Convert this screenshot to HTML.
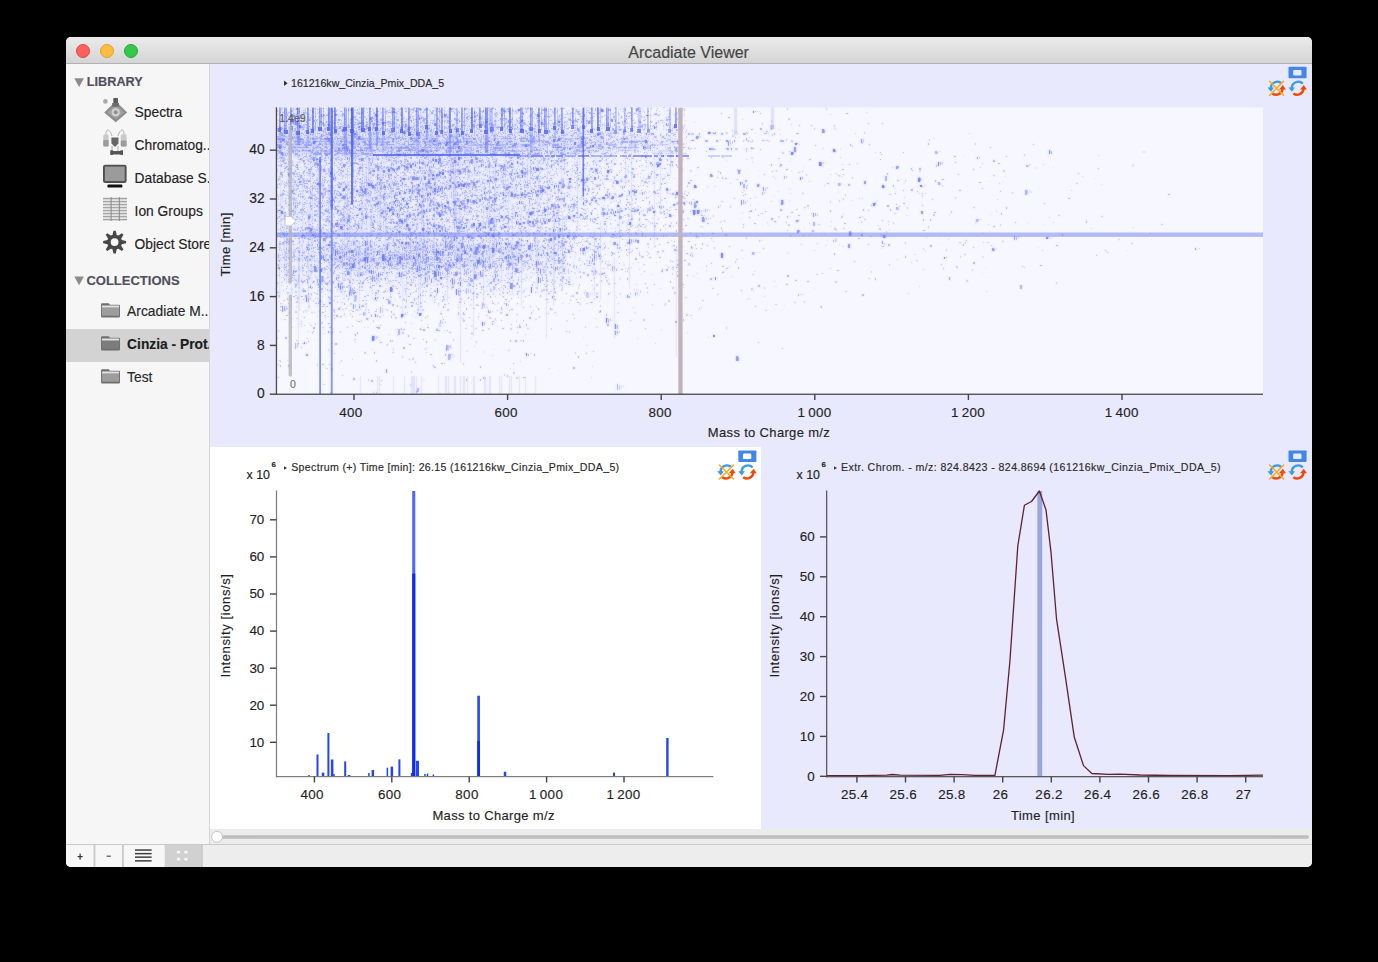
<!DOCTYPE html><html><head><meta charset="utf-8"><title>Arcadiate Viewer</title><style>
*{margin:0;padding:0;box-sizing:border-box}
html,body{width:1378px;height:962px;background:#000;overflow:hidden;font-family:"Liberation Sans",sans-serif;color:#222}
.a{position:absolute}
.t{position:absolute;line-height:1;white-space:nowrap;-webkit-text-stroke:0.15px currentColor}
svg{position:absolute;left:0;top:0;overflow:visible}
</style></head><body>
<div class="a" style="left:66px;top:37px;width:1246px;height:830px;background:#f6f6f6;border-radius:5px;overflow:hidden">
</div>
<div class="a" style="left:66px;top:37px;width:1246px;height:27px;background:linear-gradient(#ebebeb,#d4d4d4);border-radius:5px 5px 0 0;"></div>
<div class="a" style="left:66px;top:63px;width:1246px;height:1px;background:#b1b1b1;"></div>
<div class="a" style="left:75.7px;top:44px;width:14px;height:14px;border-radius:50%;background:#fc615d;border:0.5px solid #df4744"></div>
<div class="a" style="left:99.6px;top:44px;width:14px;height:14px;border-radius:50%;background:#fdbc40;border:0.5px solid #de9f34"></div>
<div class="a" style="left:123.5px;top:44px;width:14px;height:14px;border-radius:50%;background:#34c84a;border:0.5px solid #27a73a"></div>
<div class="a" style="left:66px;top:64px;width:143px;height:781px;background:#f6f6f6;"></div>
<div class="a" style="left:209px;top:64px;width:1px;height:781px;background:#d6d6d6;"></div>
<div class="a" style="left:210px;top:64px;width:1102px;height:383px;background:#e9e9fd;"></div>
<div class="a" style="left:210px;top:447px;width:551px;height:382px;background:#ffffff;"></div>
<div class="a" style="left:761px;top:447px;width:551px;height:382px;background:#e9e9fd;"></div>
<div class="a" style="left:210px;top:829px;width:1102px;height:16px;background:#ececec;"></div>
<div class="a" style="left:66px;top:844px;width:1246px;height:1px;background:#cacaca;"></div>
<div class="a" style="left:66px;top:845px;width:1246px;height:22px;background:#ededed;border-radius:0 0 5px 5px;"></div>
<div class="a" style="left:66px;top:845px;width:98px;height:22px;background:#f7f7f7;border-radius:0 0 0 5px;"></div>
<div class="a" style="left:164.5px;top:845px;width:37px;height:22px;background:#d1d1d1;"></div>
<div class="a" style="left:66px;top:329px;width:143px;height:33px;background:#d3d3d3;"></div>
<svg width="1378" height="962" viewBox="0 0 1378 962"><polygon points="74.3,78.3 83.9,78.3 79.1,87" fill="#8b8b8b"/><polygon points="74.3,276.5 83.9,276.5 79.1,285.2" fill="#8b8b8b"/><circle cx="105.4" cy="101.4" r="2.3" fill="#a9a9a9"/><polygon points="104.2,112.4 115.7,101.2 127.2,112.4 115.7,122.2" fill="#8d8d8d"/><polygon points="107.5,112.4 115.7,104.6 123.9,112.4 115.7,119" fill="#a3a3a3"/><circle cx="115.7" cy="112.2" r="4" fill="#d2d2d2"/><circle cx="115.7" cy="112.2" r="2" fill="#8f8f8f"/><rect x="113.3" y="98" width="4.6" height="8.5" fill="#5a5a5a"/><rect x="112.2" y="103" width="6.8" height="3.5" fill="#6e6e6e"/><path d="M106,134 C106,128 110,129 112,136 M124,134 C124,128 120,129 118,136 M112,146 L112,151 M118,146 L118,151" stroke="#9a9a9a" stroke-width="0.8" fill="none"/><rect x="103.3" y="134.3" width="5.3" height="12.3" rx="1.5" fill="#c9c9c9"/><rect x="103.3" y="140" width="5.3" height="6.6" rx="1" fill="#9c9c9c"/><rect x="120.8" y="134.3" width="5.8" height="12.3" rx="1.5" fill="#c9c9c9"/><rect x="120.8" y="140.5" width="5.8" height="6.1" rx="1" fill="#9c9c9c"/><polygon points="111.4,137.5 118.5,137.5 118.5,143.5 115,147 111.4,143.5" fill="#666"/><rect x="110.4" y="151" width="12.6" height="3.4" rx="1" fill="#555"/><rect x="110.4" y="150.2" width="2.5" height="4.8" fill="#555"/><rect x="120.5" y="150.2" width="2.5" height="4.8" fill="#555"/><rect x="103" y="164.7" width="23.6" height="18.2" rx="2.2" fill="#505050"/><rect x="104.9" y="166.6" width="19.8" height="14.4" fill="#9b9b9b"/><rect x="107.4" y="184.6" width="15" height="3" rx="1.2" fill="#111"/><rect x="103" y="197" width="24" height="24" fill="#e4e4e4"/><rect x="103" y="198" width="24" height="1.2" fill="#a5a5a5"/><rect x="103" y="201" width="24" height="1.2" fill="#a5a5a5"/><rect x="103" y="204" width="24" height="1.2" fill="#a5a5a5"/><rect x="103" y="207" width="24" height="1.2" fill="#a5a5a5"/><rect x="103" y="210" width="24" height="1.2" fill="#a5a5a5"/><rect x="103" y="213" width="24" height="1.2" fill="#a5a5a5"/><rect x="103" y="216" width="24" height="1.2" fill="#a5a5a5"/><rect x="103" y="219" width="24" height="1.2" fill="#a5a5a5"/><rect x="110.6" y="197" width="1" height="24" fill="#888"/><rect x="118.8" y="197" width="1" height="24" fill="#888"/><polygon points="111.93,235.63 112.44,235.13 113.45,230.66 115.75,230.66 116.76,235.13 117.27,235.63 117.28,235.63 118.01,235.64 121.88,233.20 123.50,234.82 121.06,238.69 121.07,239.42 121.07,239.43 121.57,239.94 126.04,240.95 126.04,243.25 121.57,244.26 121.07,244.77 121.07,244.78 121.06,245.51 123.50,249.38 121.88,251.00 118.01,248.56 117.28,248.57 117.27,248.57 116.76,249.07 115.75,253.54 113.45,253.54 112.44,249.07 111.93,248.57 111.92,248.57 111.19,248.56 107.32,251.00 105.70,249.38 108.14,245.51 108.13,244.78 108.13,244.77 107.63,244.26 103.16,243.25 103.16,240.95 107.63,239.94 108.13,239.43 108.13,239.42 108.14,238.69 105.70,234.82 107.32,233.20 111.19,235.64 111.92,235.63" fill="#474747"/><circle cx="114.6" cy="242.1" r="7.4" fill="#474747"/><circle cx="114.6" cy="242.1" r="3.9" fill="#f6f6f6"/><polygon points="284,80.6 287.6,83.3 284,86" fill="#333"/><rect x="1288.5" y="66.7" width="18.1" height="11.5" rx="0.8" fill="#4287e6"/><rect x="1293.2" y="69.9" width="8.3" height="5.5" rx="1.2" fill="#e9e9fd"/><path d="M1281.8,83.7 A6.4,6.4 0 0 0 1270.8,88.3" stroke="#3d9ae8" stroke-width="2.4" fill="none"/><polygon points="1267.4,87.5 1274.0,87.5 1271.0,91.7" fill="#3d9ae8"/><path d="M1272.4,93.5 A6.4,6.4 0 0 0 1282.6,88.9" stroke="#ee4a0c" stroke-width="2.4" fill="none"/><polygon points="1279.0,89.5 1286.0,89.5 1282.8,85.1" fill="#ee4a0c"/><path d="M1269.6,81.3 L1283.6,95.3 M1283.6,81.3 L1269.6,95.3" stroke="#f9ad1c" stroke-width="1.6" stroke-linecap="round"/><path d="M1302.8,83.7 A6.4,6.4 0 0 0 1291.8,88.3" stroke="#3d9ae8" stroke-width="2.4" fill="none"/><polygon points="1288.4,87.5 1295.0,87.5 1292.0,91.7" fill="#3d9ae8"/><path d="M1293.4,93.5 A6.4,6.4 0 0 0 1303.6,88.9" stroke="#ee4a0c" stroke-width="2.4" fill="none"/><polygon points="1300.0,89.5 1307.0,89.5 1303.8,85.1" fill="#ee4a0c"/><rect x="277" y="107.5" width="986" height="286.5" fill="#f7f7ff"/><defs><filter id="hb" x="270" y="100" width="1000" height="300" filterUnits="userSpaceOnUse"><feGaussianBlur stdDeviation="2.5"/></filter><filter id="sb" x="270" y="100" width="1000" height="300" filterUnits="userSpaceOnUse"><feGaussianBlur stdDeviation="0.8"/></filter><clipPath id="pc"><rect x="277" y="107.5" width="986" height="286.5"/></clipPath></defs><g clip-path="url(#pc)"><g filter="url(#hb)" fill="#5567f2"><rect x="277" y="107" width="44" height="4" fill-opacity="0.050"/><rect x="321" y="107" width="36" height="4" fill-opacity="0.055"/><rect x="357" y="107" width="128" height="4" fill-opacity="0.050"/><rect x="485" y="107" width="60" height="4" fill-opacity="0.046"/><rect x="545" y="107" width="24" height="4" fill-opacity="0.041"/><rect x="569" y="107" width="24" height="4" fill-opacity="0.037"/><rect x="593" y="107" width="16" height="4" fill-opacity="0.032"/><rect x="609" y="107" width="8" height="4" fill-opacity="0.028"/><rect x="617" y="107" width="12" height="4" fill-opacity="0.023"/><rect x="629" y="107" width="12" height="4" fill-opacity="0.018"/><rect x="641" y="107" width="20" height="4" fill-opacity="0.014"/><rect x="661" y="107" width="20" height="4" fill-opacity="0.009"/><rect x="277" y="111" width="188" height="4" fill-opacity="0.055"/><rect x="465" y="111" width="64" height="4" fill-opacity="0.050"/><rect x="529" y="111" width="32" height="4" fill-opacity="0.046"/><rect x="561" y="111" width="24" height="4" fill-opacity="0.041"/><rect x="585" y="111" width="20" height="4" fill-opacity="0.037"/><rect x="605" y="111" width="8" height="4" fill-opacity="0.032"/><rect x="613" y="111" width="12" height="4" fill-opacity="0.028"/><rect x="625" y="111" width="12" height="4" fill-opacity="0.023"/><rect x="637" y="111" width="16" height="4" fill-opacity="0.018"/><rect x="653" y="111" width="16" height="4" fill-opacity="0.014"/><rect x="669" y="111" width="12" height="4" fill-opacity="0.009"/><rect x="681" y="111" width="4" height="4" fill-opacity="0.005"/><rect x="277" y="115" width="8" height="4" fill-opacity="0.055"/><rect x="285" y="115" width="164" height="4" fill-opacity="0.060"/><rect x="449" y="115" width="60" height="4" fill-opacity="0.055"/><rect x="509" y="115" width="44" height="4" fill-opacity="0.050"/><rect x="553" y="115" width="24" height="4" fill-opacity="0.046"/><rect x="577" y="115" width="24" height="4" fill-opacity="0.041"/><rect x="601" y="115" width="8" height="4" fill-opacity="0.037"/><rect x="609" y="115" width="12" height="4" fill-opacity="0.032"/><rect x="621" y="115" width="12" height="4" fill-opacity="0.028"/><rect x="633" y="115" width="12" height="4" fill-opacity="0.023"/><rect x="645" y="115" width="16" height="4" fill-opacity="0.018"/><rect x="661" y="115" width="20" height="4" fill-opacity="0.014"/><rect x="681" y="115" width="4" height="4" fill-opacity="0.005"/><rect x="277" y="119" width="16" height="4" fill-opacity="0.060"/><rect x="293" y="119" width="120" height="4" fill-opacity="0.064"/><rect x="413" y="119" width="80" height="4" fill-opacity="0.060"/><rect x="493" y="119" width="52" height="4" fill-opacity="0.055"/><rect x="545" y="119" width="24" height="4" fill-opacity="0.050"/><rect x="569" y="119" width="24" height="4" fill-opacity="0.046"/><rect x="593" y="119" width="16" height="4" fill-opacity="0.041"/><rect x="609" y="119" width="8" height="4" fill-opacity="0.037"/><rect x="617" y="119" width="12" height="4" fill-opacity="0.032"/><rect x="629" y="119" width="12" height="4" fill-opacity="0.028"/><rect x="641" y="119" width="16" height="4" fill-opacity="0.023"/><rect x="657" y="119" width="16" height="4" fill-opacity="0.018"/><rect x="673" y="119" width="8" height="4" fill-opacity="0.014"/><rect x="681" y="119" width="4" height="4" fill-opacity="0.009"/><rect x="277" y="123" width="52" height="4" fill-opacity="0.073"/><rect x="329" y="123" width="4" height="4" fill-opacity="0.078"/><rect x="333" y="123" width="88" height="4" fill-opacity="0.073"/><rect x="421" y="123" width="60" height="4" fill-opacity="0.069"/><rect x="481" y="123" width="44" height="4" fill-opacity="0.064"/><rect x="525" y="123" width="28" height="4" fill-opacity="0.060"/><rect x="553" y="123" width="20" height="4" fill-opacity="0.055"/><rect x="573" y="123" width="24" height="4" fill-opacity="0.050"/><rect x="597" y="123" width="12" height="4" fill-opacity="0.046"/><rect x="609" y="123" width="8" height="4" fill-opacity="0.041"/><rect x="617" y="123" width="12" height="4" fill-opacity="0.037"/><rect x="629" y="123" width="12" height="4" fill-opacity="0.032"/><rect x="641" y="123" width="12" height="4" fill-opacity="0.028"/><rect x="653" y="123" width="16" height="4" fill-opacity="0.023"/><rect x="669" y="123" width="12" height="4" fill-opacity="0.018"/><rect x="681" y="123" width="4" height="4" fill-opacity="0.009"/><rect x="277" y="127" width="112" height="4" fill-opacity="0.087"/><rect x="389" y="127" width="60" height="4" fill-opacity="0.083"/><rect x="449" y="127" width="36" height="4" fill-opacity="0.078"/><rect x="485" y="127" width="32" height="4" fill-opacity="0.073"/><rect x="517" y="127" width="28" height="4" fill-opacity="0.069"/><rect x="545" y="127" width="20" height="4" fill-opacity="0.064"/><rect x="565" y="127" width="16" height="4" fill-opacity="0.060"/><rect x="581" y="127" width="20" height="4" fill-opacity="0.055"/><rect x="601" y="127" width="8" height="4" fill-opacity="0.050"/><rect x="609" y="127" width="12" height="4" fill-opacity="0.046"/><rect x="621" y="127" width="12" height="4" fill-opacity="0.041"/><rect x="633" y="127" width="8" height="4" fill-opacity="0.037"/><rect x="641" y="127" width="16" height="4" fill-opacity="0.032"/><rect x="657" y="127" width="12" height="4" fill-opacity="0.028"/><rect x="669" y="127" width="12" height="4" fill-opacity="0.023"/><rect x="681" y="127" width="4" height="4" fill-opacity="0.014"/><rect x="277" y="131" width="92" height="4" fill-opacity="0.101"/><rect x="369" y="131" width="48" height="4" fill-opacity="0.096"/><rect x="417" y="131" width="44" height="4" fill-opacity="0.092"/><rect x="461" y="131" width="28" height="4" fill-opacity="0.087"/><rect x="489" y="131" width="24" height="4" fill-opacity="0.083"/><rect x="513" y="131" width="28" height="4" fill-opacity="0.078"/><rect x="541" y="131" width="16" height="4" fill-opacity="0.073"/><rect x="557" y="131" width="16" height="4" fill-opacity="0.069"/><rect x="573" y="131" width="16" height="4" fill-opacity="0.064"/><rect x="589" y="131" width="12" height="4" fill-opacity="0.060"/><rect x="601" y="131" width="12" height="4" fill-opacity="0.055"/><rect x="613" y="131" width="12" height="4" fill-opacity="0.050"/><rect x="625" y="131" width="8" height="4" fill-opacity="0.046"/><rect x="633" y="131" width="12" height="4" fill-opacity="0.041"/><rect x="645" y="131" width="12" height="4" fill-opacity="0.037"/><rect x="657" y="131" width="12" height="4" fill-opacity="0.032"/><rect x="669" y="131" width="12" height="4" fill-opacity="0.028"/><rect x="681" y="131" width="4" height="4" fill-opacity="0.014"/><rect x="685" y="131" width="4" height="4" fill-opacity="0.005"/><rect x="277" y="135" width="80" height="4" fill-opacity="0.115"/><rect x="357" y="135" width="40" height="4" fill-opacity="0.110"/><rect x="397" y="135" width="40" height="4" fill-opacity="0.105"/><rect x="437" y="135" width="28" height="4" fill-opacity="0.101"/><rect x="465" y="135" width="24" height="4" fill-opacity="0.096"/><rect x="489" y="135" width="24" height="4" fill-opacity="0.092"/><rect x="513" y="135" width="24" height="4" fill-opacity="0.087"/><rect x="537" y="135" width="16" height="4" fill-opacity="0.083"/><rect x="553" y="135" width="12" height="4" fill-opacity="0.078"/><rect x="565" y="135" width="16" height="4" fill-opacity="0.073"/><rect x="581" y="135" width="12" height="4" fill-opacity="0.069"/><rect x="593" y="135" width="12" height="4" fill-opacity="0.064"/><rect x="605" y="135" width="12" height="4" fill-opacity="0.060"/><rect x="617" y="135" width="8" height="4" fill-opacity="0.055"/><rect x="625" y="135" width="12" height="4" fill-opacity="0.050"/><rect x="637" y="135" width="8" height="4" fill-opacity="0.046"/><rect x="645" y="135" width="12" height="4" fill-opacity="0.041"/><rect x="657" y="135" width="12" height="4" fill-opacity="0.037"/><rect x="669" y="135" width="12" height="4" fill-opacity="0.032"/><rect x="681" y="135" width="4" height="4" fill-opacity="0.018"/><rect x="685" y="135" width="4" height="4" fill-opacity="0.005"/><rect x="277" y="139" width="68" height="4" fill-opacity="0.119"/><rect x="345" y="139" width="36" height="4" fill-opacity="0.115"/><rect x="381" y="139" width="36" height="4" fill-opacity="0.110"/><rect x="417" y="139" width="32" height="4" fill-opacity="0.105"/><rect x="449" y="139" width="24" height="4" fill-opacity="0.101"/><rect x="473" y="139" width="20" height="4" fill-opacity="0.096"/><rect x="493" y="139" width="24" height="4" fill-opacity="0.092"/><rect x="517" y="139" width="20" height="4" fill-opacity="0.087"/><rect x="537" y="139" width="16" height="4" fill-opacity="0.083"/><rect x="553" y="139" width="12" height="4" fill-opacity="0.078"/><rect x="565" y="139" width="16" height="4" fill-opacity="0.073"/><rect x="581" y="139" width="12" height="4" fill-opacity="0.069"/><rect x="593" y="139" width="12" height="4" fill-opacity="0.064"/><rect x="605" y="139" width="12" height="4" fill-opacity="0.060"/><rect x="617" y="139" width="8" height="4" fill-opacity="0.055"/><rect x="625" y="139" width="12" height="4" fill-opacity="0.050"/><rect x="637" y="139" width="8" height="4" fill-opacity="0.046"/><rect x="645" y="139" width="12" height="4" fill-opacity="0.041"/><rect x="657" y="139" width="12" height="4" fill-opacity="0.037"/><rect x="669" y="139" width="12" height="4" fill-opacity="0.032"/><rect x="681" y="139" width="4" height="4" fill-opacity="0.018"/><rect x="685" y="139" width="4" height="4" fill-opacity="0.005"/><rect x="277" y="143" width="64" height="4" fill-opacity="0.119"/><rect x="341" y="143" width="36" height="4" fill-opacity="0.115"/><rect x="377" y="143" width="32" height="4" fill-opacity="0.110"/><rect x="409" y="143" width="32" height="4" fill-opacity="0.105"/><rect x="441" y="143" width="24" height="4" fill-opacity="0.101"/><rect x="465" y="143" width="20" height="4" fill-opacity="0.096"/><rect x="485" y="143" width="24" height="4" fill-opacity="0.092"/><rect x="509" y="143" width="20" height="4" fill-opacity="0.087"/><rect x="529" y="143" width="16" height="4" fill-opacity="0.083"/><rect x="545" y="143" width="16" height="4" fill-opacity="0.078"/><rect x="561" y="143" width="12" height="4" fill-opacity="0.073"/><rect x="573" y="143" width="16" height="4" fill-opacity="0.069"/><rect x="589" y="143" width="12" height="4" fill-opacity="0.064"/><rect x="601" y="143" width="12" height="4" fill-opacity="0.060"/><rect x="613" y="143" width="8" height="4" fill-opacity="0.055"/><rect x="621" y="143" width="12" height="4" fill-opacity="0.050"/><rect x="633" y="143" width="12" height="4" fill-opacity="0.046"/><rect x="645" y="143" width="12" height="4" fill-opacity="0.041"/><rect x="657" y="143" width="12" height="4" fill-opacity="0.037"/><rect x="669" y="143" width="12" height="4" fill-opacity="0.032"/><rect x="681" y="143" width="4" height="4" fill-opacity="0.018"/><rect x="685" y="143" width="4" height="4" fill-opacity="0.005"/><rect x="277" y="147" width="64" height="4" fill-opacity="0.119"/><rect x="341" y="147" width="32" height="4" fill-opacity="0.115"/><rect x="373" y="147" width="28" height="4" fill-opacity="0.110"/><rect x="401" y="147" width="32" height="4" fill-opacity="0.105"/><rect x="433" y="147" width="24" height="4" fill-opacity="0.101"/><rect x="457" y="147" width="24" height="4" fill-opacity="0.096"/><rect x="481" y="147" width="20" height="4" fill-opacity="0.092"/><rect x="501" y="147" width="20" height="4" fill-opacity="0.087"/><rect x="521" y="147" width="20" height="4" fill-opacity="0.083"/><rect x="541" y="147" width="12" height="4" fill-opacity="0.078"/><rect x="553" y="147" width="16" height="4" fill-opacity="0.073"/><rect x="569" y="147" width="12" height="4" fill-opacity="0.069"/><rect x="581" y="147" width="16" height="4" fill-opacity="0.064"/><rect x="597" y="147" width="12" height="4" fill-opacity="0.060"/><rect x="609" y="147" width="8" height="4" fill-opacity="0.055"/><rect x="617" y="147" width="12" height="4" fill-opacity="0.050"/><rect x="629" y="147" width="12" height="4" fill-opacity="0.046"/><rect x="641" y="147" width="12" height="4" fill-opacity="0.041"/><rect x="653" y="147" width="12" height="4" fill-opacity="0.037"/><rect x="665" y="147" width="12" height="4" fill-opacity="0.032"/><rect x="677" y="147" width="4" height="4" fill-opacity="0.028"/><rect x="681" y="147" width="4" height="4" fill-opacity="0.018"/><rect x="685" y="147" width="4" height="4" fill-opacity="0.005"/><rect x="277" y="151" width="48" height="4" fill-opacity="0.092"/><rect x="325" y="151" width="8" height="4" fill-opacity="0.096"/><rect x="333" y="151" width="52" height="4" fill-opacity="0.092"/><rect x="385" y="151" width="52" height="4" fill-opacity="0.087"/><rect x="437" y="151" width="32" height="4" fill-opacity="0.083"/><rect x="469" y="151" width="28" height="4" fill-opacity="0.078"/><rect x="497" y="151" width="24" height="4" fill-opacity="0.073"/><rect x="521" y="151" width="24" height="4" fill-opacity="0.069"/><rect x="545" y="151" width="12" height="4" fill-opacity="0.064"/><rect x="557" y="151" width="12" height="4" fill-opacity="0.060"/><rect x="569" y="151" width="12" height="4" fill-opacity="0.055"/><rect x="581" y="151" width="16" height="4" fill-opacity="0.050"/><rect x="597" y="151" width="12" height="4" fill-opacity="0.046"/><rect x="609" y="151" width="12" height="4" fill-opacity="0.041"/><rect x="621" y="151" width="8" height="4" fill-opacity="0.037"/><rect x="629" y="151" width="16" height="4" fill-opacity="0.032"/><rect x="645" y="151" width="16" height="4" fill-opacity="0.028"/><rect x="661" y="151" width="16" height="4" fill-opacity="0.023"/><rect x="677" y="151" width="4" height="4" fill-opacity="0.018"/><rect x="681" y="151" width="4" height="4" fill-opacity="0.009"/><rect x="277" y="155" width="20" height="4" fill-opacity="0.055"/><rect x="297" y="155" width="192" height="4" fill-opacity="0.060"/><rect x="489" y="155" width="40" height="4" fill-opacity="0.055"/><rect x="529" y="155" width="20" height="4" fill-opacity="0.050"/><rect x="549" y="155" width="12" height="4" fill-opacity="0.046"/><rect x="561" y="155" width="12" height="4" fill-opacity="0.041"/><rect x="573" y="155" width="12" height="4" fill-opacity="0.037"/><rect x="585" y="155" width="12" height="4" fill-opacity="0.032"/><rect x="597" y="155" width="12" height="4" fill-opacity="0.028"/><rect x="609" y="155" width="12" height="4" fill-opacity="0.023"/><rect x="621" y="155" width="16" height="4" fill-opacity="0.018"/><rect x="637" y="155" width="24" height="4" fill-opacity="0.014"/><rect x="661" y="155" width="20" height="4" fill-opacity="0.009"/><rect x="681" y="155" width="4" height="4" fill-opacity="0.005"/><rect x="277" y="159" width="28" height="4" fill-opacity="0.055"/><rect x="305" y="159" width="180" height="4" fill-opacity="0.060"/><rect x="485" y="159" width="36" height="4" fill-opacity="0.055"/><rect x="521" y="159" width="24" height="4" fill-opacity="0.050"/><rect x="545" y="159" width="12" height="4" fill-opacity="0.046"/><rect x="557" y="159" width="12" height="4" fill-opacity="0.041"/><rect x="569" y="159" width="12" height="4" fill-opacity="0.037"/><rect x="581" y="159" width="12" height="4" fill-opacity="0.032"/><rect x="593" y="159" width="12" height="4" fill-opacity="0.028"/><rect x="605" y="159" width="16" height="4" fill-opacity="0.023"/><rect x="621" y="159" width="12" height="4" fill-opacity="0.018"/><rect x="633" y="159" width="20" height="4" fill-opacity="0.014"/><rect x="653" y="159" width="28" height="4" fill-opacity="0.009"/><rect x="681" y="159" width="4" height="4" fill-opacity="0.005"/><rect x="277" y="163" width="8" height="4" fill-opacity="0.050"/><rect x="285" y="163" width="24" height="4" fill-opacity="0.055"/><rect x="309" y="163" width="172" height="4" fill-opacity="0.060"/><rect x="481" y="163" width="36" height="4" fill-opacity="0.055"/><rect x="517" y="163" width="28" height="4" fill-opacity="0.050"/><rect x="545" y="163" width="12" height="4" fill-opacity="0.046"/><rect x="557" y="163" width="12" height="4" fill-opacity="0.041"/><rect x="569" y="163" width="8" height="4" fill-opacity="0.037"/><rect x="577" y="163" width="12" height="4" fill-opacity="0.032"/><rect x="589" y="163" width="12" height="4" fill-opacity="0.028"/><rect x="601" y="163" width="16" height="4" fill-opacity="0.023"/><rect x="617" y="163" width="12" height="4" fill-opacity="0.018"/><rect x="629" y="163" width="16" height="4" fill-opacity="0.014"/><rect x="645" y="163" width="32" height="4" fill-opacity="0.009"/><rect x="677" y="163" width="4" height="4" fill-opacity="0.005"/><rect x="277" y="167" width="12" height="4" fill-opacity="0.050"/><rect x="289" y="167" width="24" height="4" fill-opacity="0.055"/><rect x="313" y="167" width="168" height="4" fill-opacity="0.060"/><rect x="481" y="167" width="32" height="4" fill-opacity="0.055"/><rect x="513" y="167" width="28" height="4" fill-opacity="0.050"/><rect x="541" y="167" width="12" height="4" fill-opacity="0.046"/><rect x="553" y="167" width="12" height="4" fill-opacity="0.041"/><rect x="565" y="167" width="12" height="4" fill-opacity="0.037"/><rect x="577" y="167" width="12" height="4" fill-opacity="0.032"/><rect x="589" y="167" width="8" height="4" fill-opacity="0.028"/><rect x="597" y="167" width="16" height="4" fill-opacity="0.023"/><rect x="613" y="167" width="12" height="4" fill-opacity="0.018"/><rect x="625" y="167" width="16" height="4" fill-opacity="0.014"/><rect x="641" y="167" width="32" height="4" fill-opacity="0.009"/><rect x="673" y="167" width="8" height="4" fill-opacity="0.005"/><rect x="277" y="171" width="20" height="4" fill-opacity="0.050"/><rect x="297" y="171" width="16" height="4" fill-opacity="0.055"/><rect x="313" y="171" width="164" height="4" fill-opacity="0.060"/><rect x="477" y="171" width="32" height="4" fill-opacity="0.055"/><rect x="509" y="171" width="28" height="4" fill-opacity="0.050"/><rect x="537" y="171" width="12" height="4" fill-opacity="0.046"/><rect x="549" y="171" width="12" height="4" fill-opacity="0.041"/><rect x="561" y="171" width="12" height="4" fill-opacity="0.037"/><rect x="573" y="171" width="12" height="4" fill-opacity="0.032"/><rect x="585" y="171" width="12" height="4" fill-opacity="0.028"/><rect x="597" y="171" width="12" height="4" fill-opacity="0.023"/><rect x="609" y="171" width="12" height="4" fill-opacity="0.018"/><rect x="621" y="171" width="16" height="4" fill-opacity="0.014"/><rect x="637" y="171" width="28" height="4" fill-opacity="0.009"/><rect x="665" y="171" width="16" height="4" fill-opacity="0.005"/><rect x="277" y="175" width="4" height="4" fill-opacity="0.046"/><rect x="281" y="175" width="16" height="4" fill-opacity="0.050"/><rect x="297" y="175" width="20" height="4" fill-opacity="0.055"/><rect x="317" y="175" width="156" height="4" fill-opacity="0.060"/><rect x="473" y="175" width="32" height="4" fill-opacity="0.055"/><rect x="505" y="175" width="28" height="4" fill-opacity="0.050"/><rect x="533" y="175" width="16" height="4" fill-opacity="0.046"/><rect x="549" y="175" width="12" height="4" fill-opacity="0.041"/><rect x="561" y="175" width="8" height="4" fill-opacity="0.037"/><rect x="569" y="175" width="12" height="4" fill-opacity="0.032"/><rect x="581" y="175" width="12" height="4" fill-opacity="0.028"/><rect x="593" y="175" width="12" height="4" fill-opacity="0.023"/><rect x="605" y="175" width="16" height="4" fill-opacity="0.018"/><rect x="621" y="175" width="12" height="4" fill-opacity="0.014"/><rect x="633" y="175" width="28" height="4" fill-opacity="0.009"/><rect x="661" y="175" width="20" height="4" fill-opacity="0.005"/><rect x="277" y="179" width="4" height="4" fill-opacity="0.046"/><rect x="281" y="179" width="20" height="4" fill-opacity="0.050"/><rect x="301" y="179" width="16" height="4" fill-opacity="0.055"/><rect x="317" y="179" width="152" height="4" fill-opacity="0.060"/><rect x="469" y="179" width="28" height="4" fill-opacity="0.055"/><rect x="497" y="179" width="32" height="4" fill-opacity="0.050"/><rect x="529" y="179" width="16" height="4" fill-opacity="0.046"/><rect x="545" y="179" width="12" height="4" fill-opacity="0.041"/><rect x="557" y="179" width="12" height="4" fill-opacity="0.037"/><rect x="569" y="179" width="12" height="4" fill-opacity="0.032"/><rect x="581" y="179" width="12" height="4" fill-opacity="0.028"/><rect x="593" y="179" width="12" height="4" fill-opacity="0.023"/><rect x="605" y="179" width="12" height="4" fill-opacity="0.018"/><rect x="617" y="179" width="16" height="4" fill-opacity="0.014"/><rect x="633" y="179" width="24" height="4" fill-opacity="0.009"/><rect x="657" y="179" width="24" height="4" fill-opacity="0.005"/><rect x="277" y="183" width="4" height="4" fill-opacity="0.046"/><rect x="281" y="183" width="20" height="4" fill-opacity="0.050"/><rect x="301" y="183" width="20" height="4" fill-opacity="0.055"/><rect x="321" y="183" width="144" height="4" fill-opacity="0.060"/><rect x="465" y="183" width="28" height="4" fill-opacity="0.055"/><rect x="493" y="183" width="32" height="4" fill-opacity="0.050"/><rect x="525" y="183" width="20" height="4" fill-opacity="0.046"/><rect x="545" y="183" width="12" height="4" fill-opacity="0.041"/><rect x="557" y="183" width="12" height="4" fill-opacity="0.037"/><rect x="569" y="183" width="8" height="4" fill-opacity="0.032"/><rect x="577" y="183" width="12" height="4" fill-opacity="0.028"/><rect x="589" y="183" width="12" height="4" fill-opacity="0.023"/><rect x="601" y="183" width="16" height="4" fill-opacity="0.018"/><rect x="617" y="183" width="16" height="4" fill-opacity="0.014"/><rect x="633" y="183" width="20" height="4" fill-opacity="0.009"/><rect x="653" y="183" width="28" height="4" fill-opacity="0.005"/><rect x="277" y="187" width="4" height="4" fill-opacity="0.046"/><rect x="281" y="187" width="20" height="4" fill-opacity="0.050"/><rect x="301" y="187" width="20" height="4" fill-opacity="0.055"/><rect x="321" y="187" width="140" height="4" fill-opacity="0.060"/><rect x="461" y="187" width="28" height="4" fill-opacity="0.055"/><rect x="489" y="187" width="28" height="4" fill-opacity="0.050"/><rect x="517" y="187" width="28" height="4" fill-opacity="0.046"/><rect x="545" y="187" width="8" height="4" fill-opacity="0.041"/><rect x="553" y="187" width="12" height="4" fill-opacity="0.037"/><rect x="565" y="187" width="12" height="4" fill-opacity="0.032"/><rect x="577" y="187" width="12" height="4" fill-opacity="0.028"/><rect x="589" y="187" width="12" height="4" fill-opacity="0.023"/><rect x="601" y="187" width="12" height="4" fill-opacity="0.018"/><rect x="613" y="187" width="16" height="4" fill-opacity="0.014"/><rect x="629" y="187" width="20" height="4" fill-opacity="0.009"/><rect x="649" y="187" width="32" height="4" fill-opacity="0.005"/><rect x="277" y="191" width="4" height="4" fill-opacity="0.046"/><rect x="281" y="191" width="24" height="4" fill-opacity="0.050"/><rect x="305" y="191" width="20" height="4" fill-opacity="0.055"/><rect x="325" y="191" width="132" height="4" fill-opacity="0.060"/><rect x="457" y="191" width="28" height="4" fill-opacity="0.055"/><rect x="485" y="191" width="28" height="4" fill-opacity="0.050"/><rect x="513" y="191" width="28" height="4" fill-opacity="0.046"/><rect x="541" y="191" width="12" height="4" fill-opacity="0.041"/><rect x="553" y="191" width="12" height="4" fill-opacity="0.037"/><rect x="565" y="191" width="12" height="4" fill-opacity="0.032"/><rect x="577" y="191" width="8" height="4" fill-opacity="0.028"/><rect x="585" y="191" width="12" height="4" fill-opacity="0.023"/><rect x="597" y="191" width="16" height="4" fill-opacity="0.018"/><rect x="613" y="191" width="16" height="4" fill-opacity="0.014"/><rect x="629" y="191" width="20" height="4" fill-opacity="0.009"/><rect x="649" y="191" width="32" height="4" fill-opacity="0.005"/><rect x="277" y="195" width="4" height="4" fill-opacity="0.046"/><rect x="281" y="195" width="24" height="4" fill-opacity="0.050"/><rect x="305" y="195" width="24" height="4" fill-opacity="0.055"/><rect x="329" y="195" width="124" height="4" fill-opacity="0.060"/><rect x="453" y="195" width="28" height="4" fill-opacity="0.055"/><rect x="481" y="195" width="28" height="4" fill-opacity="0.050"/><rect x="509" y="195" width="32" height="4" fill-opacity="0.046"/><rect x="541" y="195" width="8" height="4" fill-opacity="0.041"/><rect x="549" y="195" width="12" height="4" fill-opacity="0.037"/><rect x="561" y="195" width="12" height="4" fill-opacity="0.032"/><rect x="573" y="195" width="12" height="4" fill-opacity="0.028"/><rect x="585" y="195" width="12" height="4" fill-opacity="0.023"/><rect x="597" y="195" width="12" height="4" fill-opacity="0.018"/><rect x="609" y="195" width="16" height="4" fill-opacity="0.014"/><rect x="625" y="195" width="20" height="4" fill-opacity="0.009"/><rect x="645" y="195" width="32" height="4" fill-opacity="0.005"/><rect x="277" y="199" width="4" height="4" fill-opacity="0.046"/><rect x="281" y="199" width="24" height="4" fill-opacity="0.050"/><rect x="305" y="199" width="172" height="4" fill-opacity="0.055"/><rect x="477" y="199" width="28" height="4" fill-opacity="0.050"/><rect x="505" y="199" width="28" height="4" fill-opacity="0.046"/><rect x="533" y="199" width="16" height="4" fill-opacity="0.041"/><rect x="549" y="199" width="12" height="4" fill-opacity="0.037"/><rect x="561" y="199" width="12" height="4" fill-opacity="0.032"/><rect x="573" y="199" width="12" height="4" fill-opacity="0.028"/><rect x="585" y="199" width="8" height="4" fill-opacity="0.023"/><rect x="593" y="199" width="16" height="4" fill-opacity="0.018"/><rect x="609" y="199" width="16" height="4" fill-opacity="0.014"/><rect x="625" y="199" width="16" height="4" fill-opacity="0.009"/><rect x="641" y="199" width="32" height="4" fill-opacity="0.005"/><rect x="277" y="203" width="4" height="4" fill-opacity="0.046"/><rect x="281" y="203" width="28" height="4" fill-opacity="0.050"/><rect x="309" y="203" width="164" height="4" fill-opacity="0.055"/><rect x="473" y="203" width="28" height="4" fill-opacity="0.050"/><rect x="501" y="203" width="28" height="4" fill-opacity="0.046"/><rect x="529" y="203" width="16" height="4" fill-opacity="0.041"/><rect x="545" y="203" width="12" height="4" fill-opacity="0.037"/><rect x="557" y="203" width="12" height="4" fill-opacity="0.032"/><rect x="569" y="203" width="12" height="4" fill-opacity="0.028"/><rect x="581" y="203" width="12" height="4" fill-opacity="0.023"/><rect x="593" y="203" width="12" height="4" fill-opacity="0.018"/><rect x="605" y="203" width="16" height="4" fill-opacity="0.014"/><rect x="621" y="203" width="16" height="4" fill-opacity="0.009"/><rect x="637" y="203" width="36" height="4" fill-opacity="0.005"/><rect x="277" y="207" width="4" height="4" fill-opacity="0.046"/><rect x="281" y="207" width="28" height="4" fill-opacity="0.050"/><rect x="309" y="207" width="160" height="4" fill-opacity="0.055"/><rect x="469" y="207" width="28" height="4" fill-opacity="0.050"/><rect x="497" y="207" width="28" height="4" fill-opacity="0.046"/><rect x="525" y="207" width="20" height="4" fill-opacity="0.041"/><rect x="545" y="207" width="12" height="4" fill-opacity="0.037"/><rect x="557" y="207" width="12" height="4" fill-opacity="0.032"/><rect x="569" y="207" width="12" height="4" fill-opacity="0.028"/><rect x="581" y="207" width="8" height="4" fill-opacity="0.023"/><rect x="589" y="207" width="16" height="4" fill-opacity="0.018"/><rect x="605" y="207" width="16" height="4" fill-opacity="0.014"/><rect x="621" y="207" width="16" height="4" fill-opacity="0.009"/><rect x="637" y="207" width="32" height="4" fill-opacity="0.005"/><rect x="277" y="211" width="4" height="4" fill-opacity="0.046"/><rect x="281" y="211" width="32" height="4" fill-opacity="0.050"/><rect x="313" y="211" width="156" height="4" fill-opacity="0.055"/><rect x="469" y="211" width="24" height="4" fill-opacity="0.050"/><rect x="493" y="211" width="28" height="4" fill-opacity="0.046"/><rect x="521" y="211" width="20" height="4" fill-opacity="0.041"/><rect x="541" y="211" width="12" height="4" fill-opacity="0.037"/><rect x="553" y="211" width="12" height="4" fill-opacity="0.032"/><rect x="565" y="211" width="12" height="4" fill-opacity="0.028"/><rect x="577" y="211" width="12" height="4" fill-opacity="0.023"/><rect x="589" y="211" width="12" height="4" fill-opacity="0.018"/><rect x="601" y="211" width="16" height="4" fill-opacity="0.014"/><rect x="617" y="211" width="20" height="4" fill-opacity="0.009"/><rect x="637" y="211" width="32" height="4" fill-opacity="0.005"/><rect x="277" y="215" width="8" height="4" fill-opacity="0.046"/><rect x="285" y="215" width="28" height="4" fill-opacity="0.050"/><rect x="313" y="215" width="152" height="4" fill-opacity="0.055"/><rect x="465" y="215" width="24" height="4" fill-opacity="0.050"/><rect x="489" y="215" width="24" height="4" fill-opacity="0.046"/><rect x="513" y="215" width="28" height="4" fill-opacity="0.041"/><rect x="541" y="215" width="12" height="4" fill-opacity="0.037"/><rect x="553" y="215" width="12" height="4" fill-opacity="0.032"/><rect x="565" y="215" width="12" height="4" fill-opacity="0.028"/><rect x="577" y="215" width="12" height="4" fill-opacity="0.023"/><rect x="589" y="215" width="12" height="4" fill-opacity="0.018"/><rect x="601" y="215" width="16" height="4" fill-opacity="0.014"/><rect x="617" y="215" width="16" height="4" fill-opacity="0.009"/><rect x="633" y="215" width="32" height="4" fill-opacity="0.005"/><rect x="277" y="219" width="8" height="4" fill-opacity="0.046"/><rect x="285" y="219" width="32" height="4" fill-opacity="0.050"/><rect x="317" y="219" width="144" height="4" fill-opacity="0.055"/><rect x="461" y="219" width="24" height="4" fill-opacity="0.050"/><rect x="485" y="219" width="24" height="4" fill-opacity="0.046"/><rect x="509" y="219" width="28" height="4" fill-opacity="0.041"/><rect x="537" y="219" width="12" height="4" fill-opacity="0.037"/><rect x="549" y="219" width="12" height="4" fill-opacity="0.032"/><rect x="561" y="219" width="12" height="4" fill-opacity="0.028"/><rect x="573" y="219" width="12" height="4" fill-opacity="0.023"/><rect x="585" y="219" width="12" height="4" fill-opacity="0.018"/><rect x="597" y="219" width="16" height="4" fill-opacity="0.014"/><rect x="613" y="219" width="20" height="4" fill-opacity="0.009"/><rect x="633" y="219" width="28" height="4" fill-opacity="0.005"/><rect x="277" y="223" width="8" height="4" fill-opacity="0.046"/><rect x="285" y="223" width="32" height="4" fill-opacity="0.050"/><rect x="317" y="223" width="140" height="4" fill-opacity="0.055"/><rect x="457" y="223" width="24" height="4" fill-opacity="0.050"/><rect x="481" y="223" width="24" height="4" fill-opacity="0.046"/><rect x="505" y="223" width="24" height="4" fill-opacity="0.041"/><rect x="529" y="223" width="20" height="4" fill-opacity="0.037"/><rect x="549" y="223" width="12" height="4" fill-opacity="0.032"/><rect x="561" y="223" width="12" height="4" fill-opacity="0.028"/><rect x="573" y="223" width="12" height="4" fill-opacity="0.023"/><rect x="585" y="223" width="12" height="4" fill-opacity="0.018"/><rect x="597" y="223" width="16" height="4" fill-opacity="0.014"/><rect x="613" y="223" width="16" height="4" fill-opacity="0.009"/><rect x="629" y="223" width="28" height="4" fill-opacity="0.005"/><rect x="277" y="227" width="8" height="4" fill-opacity="0.046"/><rect x="285" y="227" width="32" height="4" fill-opacity="0.050"/><rect x="317" y="227" width="140" height="4" fill-opacity="0.055"/><rect x="457" y="227" width="24" height="4" fill-opacity="0.050"/><rect x="481" y="227" width="24" height="4" fill-opacity="0.046"/><rect x="505" y="227" width="24" height="4" fill-opacity="0.041"/><rect x="529" y="227" width="16" height="4" fill-opacity="0.037"/><rect x="545" y="227" width="12" height="4" fill-opacity="0.032"/><rect x="557" y="227" width="12" height="4" fill-opacity="0.028"/><rect x="569" y="227" width="12" height="4" fill-opacity="0.023"/><rect x="581" y="227" width="12" height="4" fill-opacity="0.018"/><rect x="593" y="227" width="16" height="4" fill-opacity="0.014"/><rect x="609" y="227" width="20" height="4" fill-opacity="0.009"/><rect x="629" y="227" width="24" height="4" fill-opacity="0.005"/><rect x="277" y="231" width="8" height="4" fill-opacity="0.046"/><rect x="285" y="231" width="32" height="4" fill-opacity="0.050"/><rect x="317" y="231" width="140" height="4" fill-opacity="0.055"/><rect x="457" y="231" width="24" height="4" fill-opacity="0.050"/><rect x="481" y="231" width="24" height="4" fill-opacity="0.046"/><rect x="505" y="231" width="20" height="4" fill-opacity="0.041"/><rect x="525" y="231" width="20" height="4" fill-opacity="0.037"/><rect x="545" y="231" width="12" height="4" fill-opacity="0.032"/><rect x="557" y="231" width="12" height="4" fill-opacity="0.028"/><rect x="569" y="231" width="12" height="4" fill-opacity="0.023"/><rect x="581" y="231" width="12" height="4" fill-opacity="0.018"/><rect x="593" y="231" width="12" height="4" fill-opacity="0.014"/><rect x="605" y="231" width="20" height="4" fill-opacity="0.009"/><rect x="625" y="231" width="24" height="4" fill-opacity="0.005"/><rect x="277" y="235" width="8" height="4" fill-opacity="0.046"/><rect x="285" y="235" width="32" height="4" fill-opacity="0.050"/><rect x="317" y="235" width="140" height="4" fill-opacity="0.055"/><rect x="457" y="235" width="24" height="4" fill-opacity="0.050"/><rect x="481" y="235" width="20" height="4" fill-opacity="0.046"/><rect x="501" y="235" width="24" height="4" fill-opacity="0.041"/><rect x="525" y="235" width="16" height="4" fill-opacity="0.037"/><rect x="541" y="235" width="12" height="4" fill-opacity="0.032"/><rect x="553" y="235" width="12" height="4" fill-opacity="0.028"/><rect x="565" y="235" width="12" height="4" fill-opacity="0.023"/><rect x="577" y="235" width="12" height="4" fill-opacity="0.018"/><rect x="589" y="235" width="16" height="4" fill-opacity="0.014"/><rect x="605" y="235" width="16" height="4" fill-opacity="0.009"/><rect x="621" y="235" width="20" height="4" fill-opacity="0.005"/><rect x="277" y="239" width="8" height="4" fill-opacity="0.046"/><rect x="285" y="239" width="32" height="4" fill-opacity="0.050"/><rect x="317" y="239" width="140" height="4" fill-opacity="0.055"/><rect x="457" y="239" width="20" height="4" fill-opacity="0.050"/><rect x="477" y="239" width="24" height="4" fill-opacity="0.046"/><rect x="501" y="239" width="20" height="4" fill-opacity="0.041"/><rect x="521" y="239" width="20" height="4" fill-opacity="0.037"/><rect x="541" y="239" width="12" height="4" fill-opacity="0.032"/><rect x="553" y="239" width="12" height="4" fill-opacity="0.028"/><rect x="565" y="239" width="12" height="4" fill-opacity="0.023"/><rect x="577" y="239" width="12" height="4" fill-opacity="0.018"/><rect x="589" y="239" width="12" height="4" fill-opacity="0.014"/><rect x="601" y="239" width="20" height="4" fill-opacity="0.009"/><rect x="621" y="239" width="16" height="4" fill-opacity="0.005"/><rect x="277" y="243" width="8" height="4" fill-opacity="0.046"/><rect x="285" y="243" width="32" height="4" fill-opacity="0.050"/><rect x="317" y="243" width="16" height="4" fill-opacity="0.055"/><rect x="333" y="243" width="124" height="4" fill-opacity="0.087"/><rect x="457" y="243" width="12" height="4" fill-opacity="0.083"/><rect x="469" y="243" width="16" height="4" fill-opacity="0.078"/><rect x="485" y="243" width="12" height="4" fill-opacity="0.073"/><rect x="497" y="243" width="16" height="4" fill-opacity="0.069"/><rect x="513" y="243" width="12" height="4" fill-opacity="0.064"/><rect x="525" y="243" width="16" height="4" fill-opacity="0.060"/><rect x="541" y="243" width="8" height="4" fill-opacity="0.055"/><rect x="549" y="243" width="8" height="4" fill-opacity="0.050"/><rect x="557" y="243" width="8" height="4" fill-opacity="0.046"/><rect x="565" y="243" width="12" height="4" fill-opacity="0.023"/><rect x="577" y="243" width="12" height="4" fill-opacity="0.018"/><rect x="589" y="243" width="12" height="4" fill-opacity="0.014"/><rect x="601" y="243" width="16" height="4" fill-opacity="0.009"/><rect x="617" y="243" width="20" height="4" fill-opacity="0.005"/><rect x="277" y="247" width="16" height="4" fill-opacity="0.046"/><rect x="293" y="247" width="28" height="4" fill-opacity="0.050"/><rect x="321" y="247" width="12" height="4" fill-opacity="0.055"/><rect x="333" y="247" width="120" height="4" fill-opacity="0.087"/><rect x="453" y="247" width="16" height="4" fill-opacity="0.083"/><rect x="469" y="247" width="12" height="4" fill-opacity="0.078"/><rect x="481" y="247" width="12" height="4" fill-opacity="0.073"/><rect x="493" y="247" width="16" height="4" fill-opacity="0.069"/><rect x="509" y="247" width="12" height="4" fill-opacity="0.064"/><rect x="521" y="247" width="16" height="4" fill-opacity="0.060"/><rect x="537" y="247" width="8" height="4" fill-opacity="0.055"/><rect x="545" y="247" width="8" height="4" fill-opacity="0.050"/><rect x="553" y="247" width="8" height="4" fill-opacity="0.046"/><rect x="561" y="247" width="4" height="4" fill-opacity="0.041"/><rect x="565" y="247" width="8" height="4" fill-opacity="0.023"/><rect x="573" y="247" width="12" height="4" fill-opacity="0.018"/><rect x="585" y="247" width="12" height="4" fill-opacity="0.014"/><rect x="597" y="247" width="16" height="4" fill-opacity="0.009"/><rect x="613" y="247" width="20" height="4" fill-opacity="0.005"/><rect x="277" y="251" width="20" height="4" fill-opacity="0.046"/><rect x="297" y="251" width="28" height="4" fill-opacity="0.050"/><rect x="325" y="251" width="8" height="4" fill-opacity="0.055"/><rect x="333" y="251" width="120" height="4" fill-opacity="0.087"/><rect x="453" y="251" width="12" height="4" fill-opacity="0.083"/><rect x="465" y="251" width="12" height="4" fill-opacity="0.078"/><rect x="477" y="251" width="16" height="4" fill-opacity="0.073"/><rect x="493" y="251" width="12" height="4" fill-opacity="0.069"/><rect x="505" y="251" width="16" height="4" fill-opacity="0.064"/><rect x="521" y="251" width="12" height="4" fill-opacity="0.060"/><rect x="533" y="251" width="12" height="4" fill-opacity="0.055"/><rect x="545" y="251" width="8" height="4" fill-opacity="0.050"/><rect x="553" y="251" width="8" height="4" fill-opacity="0.046"/><rect x="561" y="251" width="4" height="4" fill-opacity="0.041"/><rect x="565" y="251" width="8" height="4" fill-opacity="0.023"/><rect x="573" y="251" width="12" height="4" fill-opacity="0.018"/><rect x="585" y="251" width="12" height="4" fill-opacity="0.014"/><rect x="597" y="251" width="16" height="4" fill-opacity="0.009"/><rect x="613" y="251" width="16" height="4" fill-opacity="0.005"/><rect x="277" y="255" width="24" height="4" fill-opacity="0.046"/><rect x="301" y="255" width="28" height="4" fill-opacity="0.050"/><rect x="329" y="255" width="4" height="4" fill-opacity="0.055"/><rect x="333" y="255" width="128" height="4" fill-opacity="0.083"/><rect x="461" y="255" width="16" height="4" fill-opacity="0.078"/><rect x="477" y="255" width="12" height="4" fill-opacity="0.073"/><rect x="489" y="255" width="12" height="4" fill-opacity="0.069"/><rect x="501" y="255" width="16" height="4" fill-opacity="0.064"/><rect x="517" y="255" width="12" height="4" fill-opacity="0.060"/><rect x="529" y="255" width="12" height="4" fill-opacity="0.055"/><rect x="541" y="255" width="8" height="4" fill-opacity="0.050"/><rect x="549" y="255" width="8" height="4" fill-opacity="0.046"/><rect x="557" y="255" width="8" height="4" fill-opacity="0.041"/><rect x="565" y="255" width="4" height="4" fill-opacity="0.023"/><rect x="569" y="255" width="12" height="4" fill-opacity="0.018"/><rect x="581" y="255" width="12" height="4" fill-opacity="0.014"/><rect x="593" y="255" width="16" height="4" fill-opacity="0.009"/><rect x="609" y="255" width="20" height="4" fill-opacity="0.005"/><rect x="277" y="259" width="4" height="4" fill-opacity="0.041"/><rect x="281" y="259" width="24" height="4" fill-opacity="0.046"/><rect x="305" y="259" width="28" height="4" fill-opacity="0.050"/><rect x="333" y="259" width="128" height="4" fill-opacity="0.083"/><rect x="461" y="259" width="12" height="4" fill-opacity="0.078"/><rect x="473" y="259" width="12" height="4" fill-opacity="0.073"/><rect x="485" y="259" width="16" height="4" fill-opacity="0.069"/><rect x="501" y="259" width="12" height="4" fill-opacity="0.064"/><rect x="513" y="259" width="12" height="4" fill-opacity="0.060"/><rect x="525" y="259" width="12" height="4" fill-opacity="0.055"/><rect x="537" y="259" width="12" height="4" fill-opacity="0.050"/><rect x="549" y="259" width="8" height="4" fill-opacity="0.046"/><rect x="557" y="259" width="8" height="4" fill-opacity="0.041"/><rect x="565" y="259" width="12" height="4" fill-opacity="0.018"/><rect x="577" y="259" width="12" height="4" fill-opacity="0.014"/><rect x="589" y="259" width="16" height="4" fill-opacity="0.009"/><rect x="605" y="259" width="20" height="4" fill-opacity="0.005"/><rect x="277" y="263" width="12" height="4" fill-opacity="0.041"/><rect x="289" y="263" width="20" height="4" fill-opacity="0.046"/><rect x="309" y="263" width="24" height="4" fill-opacity="0.050"/><rect x="333" y="263" width="124" height="4" fill-opacity="0.083"/><rect x="457" y="263" width="16" height="4" fill-opacity="0.078"/><rect x="473" y="263" width="12" height="4" fill-opacity="0.073"/><rect x="485" y="263" width="12" height="4" fill-opacity="0.069"/><rect x="497" y="263" width="12" height="4" fill-opacity="0.064"/><rect x="509" y="263" width="12" height="4" fill-opacity="0.060"/><rect x="521" y="263" width="12" height="4" fill-opacity="0.055"/><rect x="533" y="263" width="12" height="4" fill-opacity="0.050"/><rect x="545" y="263" width="8" height="4" fill-opacity="0.046"/><rect x="553" y="263" width="8" height="4" fill-opacity="0.041"/><rect x="561" y="263" width="4" height="4" fill-opacity="0.037"/><rect x="565" y="263" width="12" height="4" fill-opacity="0.018"/><rect x="577" y="263" width="12" height="4" fill-opacity="0.014"/><rect x="589" y="263" width="12" height="4" fill-opacity="0.009"/><rect x="601" y="263" width="20" height="4" fill-opacity="0.005"/><rect x="277" y="267" width="16" height="4" fill-opacity="0.041"/><rect x="293" y="267" width="20" height="4" fill-opacity="0.046"/><rect x="313" y="267" width="152" height="4" fill-opacity="0.050"/><rect x="465" y="267" width="16" height="4" fill-opacity="0.046"/><rect x="481" y="267" width="20" height="4" fill-opacity="0.041"/><rect x="501" y="267" width="16" height="4" fill-opacity="0.037"/><rect x="517" y="267" width="20" height="4" fill-opacity="0.032"/><rect x="537" y="267" width="12" height="4" fill-opacity="0.028"/><rect x="549" y="267" width="12" height="4" fill-opacity="0.023"/><rect x="561" y="267" width="12" height="4" fill-opacity="0.018"/><rect x="573" y="267" width="12" height="4" fill-opacity="0.014"/><rect x="585" y="267" width="12" height="4" fill-opacity="0.009"/><rect x="597" y="267" width="20" height="4" fill-opacity="0.005"/><rect x="277" y="271" width="12" height="4" fill-opacity="0.037"/><rect x="289" y="271" width="24" height="4" fill-opacity="0.041"/><rect x="313" y="271" width="152" height="4" fill-opacity="0.046"/><rect x="465" y="271" width="20" height="4" fill-opacity="0.041"/><rect x="485" y="271" width="16" height="4" fill-opacity="0.037"/><rect x="501" y="271" width="20" height="4" fill-opacity="0.032"/><rect x="521" y="271" width="20" height="4" fill-opacity="0.028"/><rect x="541" y="271" width="12" height="4" fill-opacity="0.023"/><rect x="553" y="271" width="12" height="4" fill-opacity="0.018"/><rect x="565" y="271" width="16" height="4" fill-opacity="0.014"/><rect x="581" y="271" width="12" height="4" fill-opacity="0.009"/><rect x="593" y="271" width="16" height="4" fill-opacity="0.005"/><rect x="277" y="275" width="12" height="4" fill-opacity="0.032"/><rect x="289" y="275" width="24" height="4" fill-opacity="0.037"/><rect x="313" y="275" width="148" height="4" fill-opacity="0.041"/><rect x="461" y="275" width="20" height="4" fill-opacity="0.037"/><rect x="481" y="275" width="20" height="4" fill-opacity="0.032"/><rect x="501" y="275" width="20" height="4" fill-opacity="0.028"/><rect x="521" y="275" width="20" height="4" fill-opacity="0.023"/><rect x="541" y="275" width="16" height="4" fill-opacity="0.018"/><rect x="557" y="275" width="12" height="4" fill-opacity="0.014"/><rect x="569" y="275" width="16" height="4" fill-opacity="0.009"/><rect x="585" y="275" width="16" height="4" fill-opacity="0.005"/><rect x="277" y="279" width="16" height="4" fill-opacity="0.028"/><rect x="293" y="279" width="24" height="4" fill-opacity="0.032"/><rect x="317" y="279" width="136" height="4" fill-opacity="0.037"/><rect x="453" y="279" width="24" height="4" fill-opacity="0.032"/><rect x="477" y="279" width="24" height="4" fill-opacity="0.028"/><rect x="501" y="279" width="20" height="4" fill-opacity="0.023"/><rect x="521" y="279" width="24" height="4" fill-opacity="0.018"/><rect x="545" y="279" width="16" height="4" fill-opacity="0.014"/><rect x="561" y="279" width="16" height="4" fill-opacity="0.009"/><rect x="577" y="279" width="16" height="4" fill-opacity="0.005"/><rect x="277" y="283" width="16" height="4" fill-opacity="0.023"/><rect x="293" y="283" width="32" height="4" fill-opacity="0.028"/><rect x="325" y="283" width="84" height="4" fill-opacity="0.032"/><rect x="409" y="283" width="64" height="4" fill-opacity="0.028"/><rect x="473" y="283" width="24" height="4" fill-opacity="0.023"/><rect x="497" y="283" width="24" height="4" fill-opacity="0.018"/><rect x="521" y="283" width="24" height="4" fill-opacity="0.014"/><rect x="545" y="283" width="20" height="4" fill-opacity="0.009"/><rect x="565" y="283" width="16" height="4" fill-opacity="0.005"/><rect x="277" y="287" width="16" height="4" fill-opacity="0.018"/><rect x="293" y="287" width="172" height="4" fill-opacity="0.023"/><rect x="465" y="287" width="28" height="4" fill-opacity="0.018"/><rect x="493" y="287" width="28" height="4" fill-opacity="0.014"/><rect x="521" y="287" width="28" height="4" fill-opacity="0.009"/><rect x="549" y="287" width="20" height="4" fill-opacity="0.005"/><rect x="277" y="291" width="20" height="4" fill-opacity="0.014"/><rect x="297" y="291" width="164" height="4" fill-opacity="0.018"/><rect x="461" y="291" width="32" height="4" fill-opacity="0.014"/><rect x="493" y="291" width="32" height="4" fill-opacity="0.009"/><rect x="525" y="291" width="28" height="4" fill-opacity="0.005"/><rect x="277" y="295" width="24" height="4" fill-opacity="0.009"/><rect x="301" y="295" width="148" height="4" fill-opacity="0.014"/><rect x="449" y="295" width="40" height="4" fill-opacity="0.009"/><rect x="489" y="295" width="36" height="4" fill-opacity="0.005"/><rect x="277" y="299" width="20" height="4" fill-opacity="0.005"/><rect x="297" y="299" width="144" height="4" fill-opacity="0.009"/><rect x="441" y="299" width="48" height="4" fill-opacity="0.005"/><rect x="277" y="303" width="48" height="4" fill-opacity="0.005"/><rect x="325" y="303" width="16" height="4" fill-opacity="0.009"/><rect x="341" y="303" width="132" height="4" fill-opacity="0.005"/><rect x="289" y="307" width="164" height="4" fill-opacity="0.005"/><rect x="325" y="311" width="20" height="4" fill-opacity="0.005"/></g><defs><g id="dots"><path d="m279 107.5h1m51 0h1m78 0h1m101 0h1m-210 1h1m287 0h2m-309 1h2m89 0h1m53 0h1m1 0h1m27 0h1m5 0h1m2 0h1m7 0h1m74 0h2m6 0h1m18 0h2m-1 0h1m-278 1h1m5 0h2m10 0h1m249 0h2m31 0h1m170 0h1m-453 1h1m0 0h2m23 0h1m107 0h2m47 0h2m42 0h2m6 0h1m57 0h1m143 0h1m-410 1h1m64 0h1m67 0h1m2 0h2m11 0h2m141 0h1m223 0h2m-575 1h2m39 0h1m56 0h2m31 0h1m74 0h2m163 0h1m-322 1h1m12 0h2m37 0h1m7 0h1m14 0h1m20 0h2m51 0h1m116 0h2m21 0h2m-351 1h2m25 0h1m9 0h1m34 0h1m44 0h2m44 0h2m2 0h1m27 0h1m1 0h1m170 0h2m-307 1h1m100 0h2m36 0h1m20 0h1m17 0h1m15 0h1m16 0h1m28 0h2m32 0h1m-304 1h2m9 0h1m17 0h1m29 0h1m-1 0h1m18 0h1m64 0h1m55 0h1m66 0h1m37 0h1m-243 1h2m8 0h2m27 0h2m39 0h1m1 0h1m31 0h1m10 0h1m1 0h1m126 0h1m21 0h1m25 0h1m-340 1h1m57 0h2m151 0h1m7 0h1m21 0h1m-265 1h2m43 0h1m4 0h2m210 0h1m95 0h1m-398 1h1m19 0h1m15 0h2m160 0h1m79 0h1m-282 1h1m63 0h2m27 0h2m23 0h1m2 0h1m33 0h2m11 0h1m30 0h1m4 0h2m31 0h1m10 0h1m98 0h1m34 0h2m2 0h2m9 0h1m-394 1h1m8 0h1m10 0h1m79 0h1m59 0h2m24 0h1m40 0h1m37 0h1m0 0h1m42 0h1m0 0h2m-294 1h2m61 0h2m13 0h1m16 0h2m14 0h2m85 0h1m161 0h1m12 0h1m-346 1h2m59 0h1m36 0h1m69 0h1m34 0h2m67 0h1m6 0h1m40 0h2m-367 1h2m40 0h1m30 0h1m23 0h1m10 0h1m13 0h2m24 0h1m116 0h1m63 0h2m-261 1h2m75 0h1m51 0h1m154 0h1m-315 1h1m36 0h2m22 0h1m81 0h1m154 0h1m196 0h1m-533 1h1m23 0h2m16 0h2m13 0h2m37 0h2m11 0h2m58 0h1m9 0h1m4 0h2m0 0h1m44 0h1m18 0h1m48 0h1m32 0h2m23 0h1m135 0h2m-481 1h1m4 0h2m89 0h1m19 0h1m24 0h1m56 0h1m53 0h1m2 0h1m77 0h1m-328 1h1m1 0h1m7 0h1m3 0h1m19 0h2m0 0h2m42 0h1m23 0h1m2 0h1m17 0h1m106 0h2m52 0h2m36 0h1m133 0h1m-453 1h1m46 0h1m110 0h1m41 0h1m9 0h2m16 0h1m22 0h2m43 0h1m75 0h1m-393 1h2m12 0h1m2 0h1m4 0h1m1 0h1m7 0h1m9 0h1m12 0h1m23 0h1m43 0h2m24 0h1m74 0h1m15 0h1m21 0h2m21 0h2m-213 1h2m43 0h1m8 0h2m2 0h1m41 0h1m3 0h1m-1 0h1m1 0h1m17 0h1m74 0h2m3 0h1m25 0h1m-265 1h2m12 0h1m22 0h1m7 0h1m3 0h1m28 0h1m50 0h2m62 0h1m15 0h2m25 0h1m47 0h1m12 0h1m-349 1h2m25 0h1m6 0h2m18 0h2m22 0h1m4 0h1m5 0h1m11 0h1m98 0h2m5 0h1m2 0h1m9 0h1m121 0h2m19 0h2m-332 1h1m27 0h1m12 0h1m18 0h1m48 0h1m5 0h1m23 0h1m46 0h2m33 0h1m8 0h2m157 0h1m35 0h2m-431 1h8m12 0h2m15 0h5m-2 0h1m30 0h10m31 0h1m16 0h1m29 0h2m19 0h8m-5 0h1m10 0h1m14 0h1m110 0h1m44 0h2m0 0h1m-281 1h1m31 0h1m9 0h1m16 0h2m76 0h1m15 0h1m11 0h1m4 0h2m33 0h1m73 0h1m-340 1h2m16 0h1m6 0h1m48 0h1m8 0h1m13 0h1m1 0h1m3 0h1m92 0h1m37 0h1m72 0h2m-359 1h1m17 0h1m0 0h3m87 0h5m1 0h1m9 0h2m15 0h1m1 0h1m8 0h3m20 0h1m40 0h1m90 0h1m70 0h1m-330 1h1m32 0h1m57 0h1m18 0h1m5 0h1m83 0h1m69 0h1m3 0h1m-330 1h1m19 0h2m12 0h1m46 0h1m8 0h1m33 0h1m54 0h1m3 0h2m4 0h1m26 0h2m0 0h1m14 0h2m58 0h2m80 0h1m18 0h2m-347 1h1m7 0h2m8 0h1m41 0h1m1 0h1m20 0h1m1 0h1m10 0h2m53 0h1m36 0h1m14 0h3m28 0h8m-7 0h1m18 0h2m24 0h1m-315 1h2m4 0h1m8 0h1m86 0h2m25 0h2m19 0h1m1 0h1m24 0h2m92 0h1m28 0h1m52 0h2m-262 1h1m76 0h2m28 0h1m46 0h2m21 0h2m52 0h2m-1 0h1m7 0h1m-330 1h1m80 0h1m12 0h1m36 0h10m8 0h1m5 0h5m41 0h2m27 0h1m1 0h1m32 0h9m16 0h2m87 0h1m-398 1h1m19 0h1m6 0h2m56 0h2m8 0h2m1 0h1m56 0h2m19 0h2m54 0h1m60 0h1m24 0h2m0 0h1m9 0h1m23 0h1m41 0h1m-400 1h1m25 0h2m49 0h1m28 0h2m62 0h1m25 0h1m18 0h1m46 0h1m49 0h2m21 0h1m48 0h1m11 0h2m-390 1h1m28 0h2m10 0h1m14 0h1m9 0h1m24 0h9m42 0h1m135 0h1m66 0h4m115 0h1m-454 1h2m22 0h1m45 0h1m30 0h1m40 0h2m8 0h2m73 0h1m8 0h1m48 0h1m23 0h1m14 0h1m318 0h1m-656 1h1m136 0h1m18 0h1m0 0h2m35 0h1m75 0h1m94 0h2m11 0h1m-375 1h1m13 0h1m9 0h1m49 0h2m50 0h9m-8 0h2m4 0h1m5 0h11m9 0h8m23 0h5m65 0h4m1 0h1m35 0h1m-308 1h1m93 0h1m1 0h1m31 0h1m8 0h1m30 0h1m49 0h1m17 0h1m162 0h1m-382 1h1m33 0h1m116 0h1m34 0h2m8 0h2m-138 1h1m18 0h1m34 0h2m43 0h1m501 0h1m-669 1h1m24 0h2m77 0h2m57 0h2m32 0h1m30 0h1m45 0h1m6 0h1m1 0h1m24 0h2m76 0h1m149 0h1m-547 1h1m1 0h1m34 0h1m142 0h2m22 0h1m55 0h1m1 0h1m47 0h2m-312 1h1m3 0h2m14 0h2m5 0h1m32 0h2m21 0h1m63 0h2m63 0h1m24 0h2m25 0h1m25 0h1m90 0h1m8 0h1m70 0h2m-337 1h1m71 0h2m112 0h2m5 0h1m11 0h1m31 0h1m-371 1h2m50 0h2m3 0h2m62 0h1m12 0h1m12 0h1m7 0h2m25 0h1m96 0h1m40 0h1m190 0h2m-418 1h2m218 0h1m231 0h1m-533 1h1m15 0h2m20 0h1m10 0h1m19 0h1m165 0h1m18 0h1m49 0h1m-260 1h1m20 0h1m29 0h1m63 0h1m1 0h2m11 0h2m4 0h1m3 0h1m13 0h1m93 0h1m25 0h2m11 0h2m4 0h1m-339 1h1m29 0h2m5 0h1m3 0h1m3 0h1m5 0h1m34 0h1m27 0h1m38 0h2m78 0h2m20 0h2m16 0h1m20 0h1m10 0h2m-310 1h2m89 0h1m21 0h2m19 0h2m9 0h1m167 0h1m7 0h1m36 0h1m154 0h1m18 0h2m-533 1h1m60 0h1m10 0h1m38 0h1m7 0h1m2 0h1m44 0h2m94 0h1m25 0h1m23 0h1m67 0h1m380 0h1m-751 1h1m35 0h1m54 0h2m56 0h2m-169 1h1m3 0h1m37 0h1m1 0h1m34 0h1m22 0h2m1 0h2m104 0h1m17 0h1m141 0h2m-345 1h1m1 0h1m76 0h1m29 0h1m1 0h1m62 0h1m21 0h1m85 0h1m101 0h1m61 0h1m-398 1h1m0 0h1m17 0h2m15 0h1m21 0h1m48 0h2m28 0h1m0 0h1m19 0h2m37 0h1m28 0h1m20 0h1m-298 1h2m-1 0h1m42 0h2m20 0h1m9 0h1m97 0h2m13 0h1m26 0h1m-235 1h1m7 0h1m3 0h1m0 0h1m8 0h1m107 0h1m28 0h1m9 0h1m15 0h2m31 0h2m15 0h2m118 0h2m-354 1h1m11 0h2m6 0h2m60 0h1m245 0h2m36 0h2m-225 1h1m33 0h2m110 0h1m16 0h1m3 0h1m48 0h2m37 0h1m-411 1h1m40 0h1m23 0h2m21 0h1m2 0h2m24 0h1m17 0h1m21 0h1m9 0h1m159 0h2m227 0h2m-552 1h1m26 0h1m28 0h1m19 0h1m2 0h1m4 0h1m22 0h2m44 0h2m16 0h2m45 0h1m64 0h2m4 0h2m-1 0h2m64 0h1m218 0h1m-514 1h1m1 0h1m29 0h1m20 0h1m31 0h1m30 0h2m16 0h2m18 0h1m7 0h1m17 0h1m43 0h1m65 0h2m34 0h2m414 0h1m-758 1h1m25 0h1m13 0h1m19 0h1m167 0h2m36 0h1m64 0h1m230 0h2m-620 1h1m24 0h1m78 0h1m118 0h1m41 0h2m9 0h2m49 0h1m47 0h2m-269 1h1m64 0h1m40 0h2m55 0h2m49 0h1m7 0h2m15 0h1m359 0h1m13 0h1m-669 1h1m90 0h2m59 0h2m69 0h1m50 0h1m26 0h1m-354 1h1m1 0h1m154 0h2m29 0h1m57 0h2m18 0h1m66 0h1m27 0h1m197 0h1m60 0h2m-613 1h1m15 0h1m102 0h2m16 0h1m19 0h1m185 0h1m208 0h1m256 0h2m-596 1h1m35 0h2m381 0h1m-625 1h2m89 0h1m55 0h1m23 0h1m28 0h1m10 0h1m42 0h1m157 0h2m-437 1h1m111 0h1m36 0h2m82 0h2m-1 0h1m46 0h2m10 0h1m1 0h1m-298 1h1m101 0h1m27 0h2m14 0h2m13 0h2m8 0h1m61 0h2m22 0h1m4 0h1m354 0h2m143 0h1m-701 1h1m99 0h1m4 0h1m1 0h1m5 0h2m14 0h1m88 0h1m-258 1h1m20 0h1m104 0h1m72 0h1m71 0h1m32 0h1m12 0h1m20 0h1m-320 1h2m15 0h1m19 0h1m26 0h2m1 0h1m8 0h1m47 0h1m31 0h2m10 0h2m8 0h1m62 0h1m216 0h2m-426 1h2m19 0h1m24 0h1m-1 0h1m25 0h2m47 0h1m173 0h1m117 0h1m-476 1h2m10 0h2m66 0h1m91 0h1m19 0h2m87 0h1m18 0h1m19 0h2m26 0h2m38 0h1m-384 1h1m27 0h2m1 0h1m88 0h1m32 0h1m77 0h1m-238 1h1m78 0h2m34 0h1m117 0h1m5 0h1m40 0h1m40 0h1m-245 1h2m26 0h1m22 0h1m8 0h1m5 0h1m20 0h1m35 0h1m4 0h1m30 0h1m45 0h2m200 0h1m-464 1h1m196 0h2m80 0h2m21 0h2m53 0h1m-353 1h1m23 0h1m39 0h2m80 0h1m74 0h1m3 0h1m10 0h1m-241 1h1m30 0h2m69 0h1m96 0h1m12 0h1m27 0h1m27 0h2m-241 1h2m52 0h1m25 0h2m24 0h1m6 0h2m-1 0h2m12 0h2m38 0h2m340 0h2m-576 1h1m3 0h2m24 0h1m20 0h1m12 0h1m17 0h1m11 0h1m35 0h1m9 0h1m2 0h2m9 0h1m27 0h1m3 0h2m21 0h1m63 0h2m8 0h1m55 0h1m-273 1h2m239 0h1m15 0h1m-274 1h2m107 0h1m5 0h2m11 0h1m8 0h1m1 0h1m7 0h1m70 0h1m-245 1h2m33 0h2m37 0h2m61 0h1m30 0h1m59 0h1m26 0h1m19 0h1m106 0h2m44 0h1m27 0h1m-463 1h1m52 0h1m20 0h1m2 0h1m5 0h1m77 0h2m72 0h1m65 0h1m53 0h2m4 0h1m-364 1h1m33 0h1m53 0h1m120 0h2m0 0h1m-198 1h2m18 0h1m10 0h2m6 0h1m38 0h1m32 0h1m19 0h2m-160 1h1m9 0h1m27 0h2m52 0h1m33 0h1m7 0h1m10 0h1m8 0h2m30 0h2m40 0h1m2 0h2m14 0h2m5 0h2m69 0h1m1 0h1m26 0h1m44 0h1m82 0h1m-442 1h2m5 0h1m29 0h1m63 0h1m93 0h2m5 0h2m79 0h1m-311 1h1m6 0h1m53 0h1m57 0h1m41 0h1m11 0h1m60 0h1m179 0h1m94 0h1m-498 1h1m1 0h2m42 0h1m85 0h1m18 0h2m1 0h1m61 0h1m3 0h1m64 0h1m-252 1h1m1 0h1m15 0h2m7 0h2m10 0h1m6 0h1m0 0h2m44 0h1m56 0h2m21 0h1m15 0h2m72 0h1m57 0h2m286 0h2m39 0h1m-594 1h1m-1 0h1m61 0h1m27 0h2m96 0h1m-301 1h2m145 0h1m42 0h1m15 0h1m3 0h1m7 0h1m46 0h1m18 0h2m8 0h2m118 0h2m-412 1h1m61 0h1m1 0h1m34 0h1m21 0h1m494 0h2m82 0h1m-679 1h1m3 0h2m86 0h2m107 0h2m48 0h2m14 0h2m42 0h1m-322 1h1m29 0h1m29 0h1m8 0h1m9 0h2m36 0h1m6 0h1m130 0h1m19 0h2m-267 1h2m58 0h1m2 0h1m34 0h1m114 0h1m19 0h2m62 0h1m42 0h2m-355 1h2m52 0h1m14 0h1m39 0h1m48 0h1m2 0h1m63 0h2m34 0h2m178 0h1m241 0h1m103 0h1m-777 1h1m23 0h2m158 0h2m-212 1h1m13 0h2m11 0h2m31 0h1m33 0h2m103 0h1m5 0h2m2 0h1m71 0h2m7 0h1m-276 1h1m43 0h1m10 0h1m15 0h1m101 0h1m51 0h2m111 0h1m137 0h1m82 0h1m-556 1h1m91 0h1m100 0h1m65 0h1m76 0h2m-355 1h1m165 0h2m17 0h1m83 0h1m8 0h2m-239 1h2m1 0h1m6 0h1m24 0h1m4 0h2m77 0h1m25 0h1m64 0h2m22 0h1m24 0h1m175 0h1m5 0h2m204 0h1m-630 1h1m162 0h2m232 0h2m-449 1h1m46 0h1m106 0h2m34 0h1m1 0h1m11 0h2m4 0h2m11 0h1m285 0h1m-407 1h1m15 0h1m39 0h1m27 0h1m3 0h1m79 0h1m361 0h1m-501 1h2m8 0h2m49 0h2m26 0h1m12 0h2m11 0h1m-205 1h1m1 0h1m57 0h1m51 0h1m79 0h1m329 0h2m-546 1h1m0 0h1m112 0h1m7 0h2m43 0h1m44 0h1m23 0h2m28 0h1m405 0h1m-710 1h2m10 0h1m29 0h1m3 0h1m40 0h1m108 0h1m34 0h2m-186 1h1m46 0h1m13 0h1m0 0h1m4 0h2m74 0h2m93 0h1m374 0h2m-566 1h1m24 0h1m3 0h2m21 0h2m173 0h1m-293 1h1m6 0h1m55 0h1m8 0h1m15 0h1m44 0h1m87 0h1m6 0h2m12 0h1m-238 1h1m80 0h1m92 0h2m4 0h1m28 0h1m67 0h2m-310 1h1m53 0h1m18 0h1m11 0h1m24 0h2m7 0h1m70 0h1m175 0h2m103 0h1m78 0h1m184 0h1m31 0h1m-704 1h1m42 0h1m44 0h1m31 0h1m93 0h1m-286 1h1m36 0h1m117 0h1m41 0h1m64 0h1m84 0h2m524 0h1m-727 1h1m19 0h1m54 0h1m2 0h1m6 0h2m315 0h1m-538 1h1m46 0h1m41 0h1m16 0h2m49 0h1m8 0h2m7 0h2m33 0h1m41 0h2m10 0h1m51 0h1m24 0h2m-335 1h1m25 0h1m56 0h2m1 0h1m12 0h2m25 0h2m81 0h1m61 0h1m24 0h1m-306 1h1m10 0h1m14 0h1m5 0h1m50 0h2m-48 1h2m145 0h1m37 0h2m425 0h1m-656 1h1m43 0h2m15 0h2m3 0h1m11 0h1m3 0h2m7 0h2m65 0h2m29 0h1m61 0h1m57 0h2m231 0h2m-549 1h2m13 0h1m7 0h1m85 0h2m18 0h1m48 0h1m3 0h1m24 0h1m185 0h2m-390 1h1m4 0h2m11 0h1m49 0h1m56 0h1m42 0h1m11 0h2m56 0h1m8 0h1m50 0h1m94 0h1m361 0h1m-735 1h1m82 0h2m3 0h1m17 0h1m34 0h2m37 0h1m9 0h1m93 0h1m292 0h1m-590 1h2m21 0h1m20 0h2m5 0h2m13 0h2m2 0h1m19 0h1m90 0h1m15 0h1m18 0h1m30 0h2m45 0h1m-290 1h1m1 0h2m48 0h2m20 0h1m64 0h2m9 0h1m22 0h1m38 0h2m13 0h2m55 0h2m3 0h1m10 0h1m20 0h1m508 0h1m-836 1h1m150 0h2m1 0h1m13 0h1m2 0h2m16 0h1m2 0h1m9 0h1m92 0h2m56 0h1m-364 1h1m41 0h1m76 0h1m2 0h1m22 0h1m8 0h2m16 0h1m34 0h1m14 0h1m20 0h1m15 0h1m11 0h1m202 0h1m1 0h2m-333 1h2m1 0h1m23 0h2m69 0h1m-211 1h1m77 0h2m9 0h1m0 0h1m39 0h2m18 0h1m5 0h1m33 0h2m28 0h2m37 0h1m1 0h1m79 0h2m-371 1h2m15 0h2m71 0h1m68 0h2m31 0h1m8 0h1m33 0h1m61 0h2m14 0h1m39 0h1m-334 1h2m38 0h2m0 0h1m32 0h2m38 0h1m1 0h1m40 0h2m7 0h1m3 0h1m35 0h1m38 0h1m20 0h2m-253 1h1m42 0h1m82 0h1m22 0h1m76 0h1m-128 1h1m33 0h1m5 0h1m-133 1h1m102 0h2m50 0h2m7 0h1m41 0h2m0 0h2m-228 1h1m30 0h2m17 0h1m22 0h2m35 0h2m28 0h1m30 0h1m12 0h2m23 0h1m-15 1h2m84 0h1m66 0h1m-286 1h1m59 0h2m37 0h2m41 0h1m94 0h1m10 0h1m-344 1h1m47 0h2m27 0h1m100 0h1m96 0h2m75 0h2m-336 1h1m40 0h1m1 0h1m14 0h1m55 0h1m56 0h1m7 0h1m47 0h1m54 0h1m-293 1h1m120 0h1m5 0h2m37 0h1m15 0h1m8 0h2m33 0h2m6 0h2m56 0h2m84 0h2m-376 1h2m240 0h1m3 0h1m134 0h1m-341 1h1m27 0h1m46 0h2m41 0h1m10 0h1m8 0h1m31 0h1m9 0h2m470 0h1m-699 1h1m18 0h2m49 0h1m28 0h1m30 0h1m32 0h1m134 0h1m31 0h2m82 0h1m-404 1h1m201 0h1m25 0h1m28 0h1m-188 1h1m6 0h2m0 0h1m94 0h1m-122 1h2m100 0h1m97 0h1m-226 1h2m22 0h1m28 0h2m201 0h2m45 0h1m-304 1h2m56 0h1m105 0h1m15 0h2m53 0h1m7 0h1m29 0h1m382 0h1m-673 1h2m103 0h1m11 0h1m34 0h2m61 0h2m113 0h2m9 0h2m-364 1h2m0 0h1m3 0h2m97 0h2m91 0h1m22 0h1m-183 1h1m15 0h2m22 0h2m19 0h2m125 0h1m4 0h1m65 0h2m142 0h2m-393 1h1m105 0h1m39 0h1m499 0h1m-676 1h2m42 0h1m21 0h2m96 0h1m0 0h1m136 0h1m-328 1h1m23 0h1m58 0h1m116 0h1m121 0h2m-276 1h1m104 0h1m110 0h1m1 0h1m-267 1h1m211 0h2m19 0h1m-114 1h2m5 0h1m31 0h2m-118 1h1m-1 0h1m30 0h2m17 0h1m114 0h1m11 0h2m65 0h1m-297 1h1m44 0h1m74 0h1m19 0h1m117 0h1m36 0h2m-291 1h1m17 0h1m33 0h1m97 0h2m15 0h1m25 0h1m-56 1h1m129 0h1m71 0h1m152 0h1m-479 1h2m69 0h2m27 0h1m20 0h1m1 0h2m58 0h1m-192 1h1m523 0h1m-535 1h1m167 0h1m3 0h1m-110 1h1m19 0h2m1 0h1m61 0h1m57 0h2m-158 1h1m5 0h2m31 0h2m90 0h2m-171 1h1m35 0h1m30 0h1m6 0h1m63 0h1m91 0h1m-155 1h1m68 0h1m117 0h1m-190 1h1m11 0h2m65 0h2m66 0h1m290 0h1m-376 1h2m153 0h2m53 0h1m3 0h1m-159 1h1m-108 1h2m65 0h1m-151 1h2m54 0h1m36 0h1m5 0h1m37 0h1m50 0h2m-90 2h1m37 0h2m-157 1h1m0 0h1m22 0h1m182 1h1m61 0h2m-247 1h1m19 0h1m134 1h2m35 0h2m-211 1h1m230 0h1m135 0h1m131 0h1m-495 1h1m5 0h2m140 0h1m-31 1h1m-5 1h1m38 0h1m62 0h2m-218 2h2m287 0h2m-140 1h2m59 1h1m42 1h2m6 0h2m-148 1h1m-116 1h1m213 0h1m49 0h2m119 0h1m-376 2h1m36 0h1m75 0h2m274 1h2m-215 1h1m16 1h2m-178 3h1m50 0h1m67 1h1m-144 2h1m71 1h2m26 2h2m-63 2h1m211 4h1m36 2h1m-114 1h2m165 0h2m-325 1h1m218 0h1m-128 4h1m-21 1h1m54 0h1m8 4h1m-80 1h2m121 0h1m-165 1h1m27 2h1m-43 6h1m196 11h1m45 1h1m-243 3h1m105 6h2m46 3h1m-151 8h1m117 3h2" stroke="#4a5cf2" stroke-opacity="0.12" stroke-width="1" fill="none"/><path d="m311 107.5h1m7 0h2m19 0h2m0 0h2m9 0h1m1 0h1m2 0h2m15 0h1m25 0h1m21 0h1m20 0h2m30 0h2m-1 0h2m30 0h1m12 0h2m17 0h2m10 0h2m45 0h2m13 0h2m-325 1h1m7 0h1m21 0h2m24 0h2m9 0h1m37 0h1m6 0h1m11 0h2m9 0h1m24 0h1m78 0h2m29 0h1m23 0h1m2 0h2m51 0h1m38 0h1m-388 1h1m3 0h1m6 0h1m8 0h1m22 0h1m29 0h1m12 0h1m17 0h2m37 0h2m27 0h1m50 0h1m3 0h1m3 0h2m4 0h1m3 0h1m146 0h2m-381 1h2m22 0h2m1 0h2m23 0h1m8 0h1m68 0h2m8 0h2m40 0h1m16 0h1m10 0h1m40 0h1m3 0h1m9 0h1m28 0h1m1 0h2m66 0h2m1 0h1m-380 1h1m49 0h1m22 0h1m12 0h2m18 0h1m12 0h1m34 0h1m34 0h2m5 0h1m17 0h1m41 0h1m18 0h1m9 0h2m44 0h2m35 0h1m97 0h1m-457 1h1m16 0h2m74 0h2m6 0h1m19 0h1m2 0h1m13 0h2m27 0h1m1 0h2m24 0h2m4 0h1m7 0h1m43 0h1m27 0h1m5 0h2m9 0h1m14 0h2m28 0h1m32 0h1m-388 1h2m23 0h1m32 0h1m15 0h1m21 0h1m45 0h2m30 0h2m3 0h1m1 0h2m2 0h1m2 0h1m6 0h1m25 0h1m2 0h1m1 0h2m16 0h1m27 0h1m11 0h2m35 0h2m11 0h1m58 0h1m-398 1h1m52 0h1m35 0h1m4 0h1m12 0h1m16 0h2m16 0h1m1 0h1m17 0h1m38 0h2m41 0h1m7 0h1m11 0h1m45 0h1m21 0h2m39 0h1m13 0h1m156 0h1m-538 1h2m16 0h1m65 0h1m14 0h1m9 0h1m16 0h1m6 0h1m13 0h1m23 0h2m13 0h1m118 0h1m5 0h2m18 0h1m5 0h2m18 0h1m6 0h2m25 0h1m-403 1h1m2 0h2m1 0h2m1 0h2m25 0h2m24 0h1m12 0h1m7 0h1m22 0h2m4 0h2m0 0h1m16 0h1m1 0h1m5 0h2m4 0h2m0 0h1m14 0h2m10 0h1m26 0h1m2 0h1m33 0h2m47 0h1m12 0h2m8 0h2m0 0h1m42 0h1m31 0h1m12 0h1m-385 1h1m6 0h1m4 0h2m52 0h2m32 0h1m48 0h1m1 0h1m24 0h2m16 0h1m4 0h1m32 0h1m1 0h2m24 0h2m38 0h2m41 0h2m22 0h2m-387 1h1m18 0h2m2 0h1m30 0h2m8 0h1m3 0h1m25 0h1m6 0h1m3 0h1m16 0h2m-1 0h2m4 0h2m2 0h1m13 0h1m2 0h1m69 0h1m1 0h1m15 0h2m2 0h1m11 0h1m46 0h2m37 0h1m9 0h2m-351 1h1m8 0h1m37 0h1m1 0h1m7 0h1m1 0h1m50 0h1m2 0h1m23 0h1m43 0h1m4 0h2m6 0h2m2 0h1m41 0h2m55 0h1m0 0h1m29 0h1m132 0h1m-466 1h2m15 0h1m10 0h1m55 0h2m11 0h2m9 0h1m44 0h2m0 0h2m32 0h1m24 0h1m11 0h1m19 0h2m24 0h2m0 0h1m4 0h1m2 0h1m33 0h1m5 0h2m6 0h1m54 0h2m21 0h1m-403 1h2m2 0h1m15 0h2m22 0h1m40 0h1m2 0h2m3 0h2m14 0h2m10 0h2m9 0h2m70 0h2m6 0h2m13 0h2m19 0h2m12 0h1m45 0h1m5 0h2m0 0h1m-283 1h1m36 0h2m11 0h1m6 0h1m4 0h1m5 0h1m0 0h1m13 0h1m32 0h1m6 0h1m64 0h2m38 0h1m2 0h1m52 0h1m4 0h1m34 0h1m20 0h1m-386 1h1m20 0h1m0 0h1m8 0h2m25 0h1m71 0h1m5 0h2m4 0h1m3 0h2m13 0h1m7 0h1m9 0h2m0 0h1m16 0h1m7 0h2m17 0h1m2 0h2m42 0h1m4 0h2m66 0h2m3 0h2m-335 1h1m0 0h2m25 0h1m2 0h1m18 0h1m7 0h1m2 0h2m10 0h1m8 0h1m20 0h1m71 0h1m3 0h2m4 0h2m12 0h1m0 0h2m18 0h2m16 0h1m1 0h1m0 0h1m24 0h1m37 0h2m42 0h1m4 0h1m22 0h1m120 0h1m-502 1h1m15 0h2m11 0h1m9 0h1m2 0h1m16 0h2m31 0h1m8 0h2m6 0h1m7 0h2m7 0h1m7 0h2m34 0h1m1 0h2m30 0h1m31 0h2m9 0h1m4 0h1m22 0h2m8 0h2m0 0h1m26 0h2m3 0h1m33 0h1m9 0h1m2 0h1m-323 1h1m3 0h2m12 0h1m0 0h1m10 0h1m2 0h1m7 0h1m18 0h2m0 0h1m1 0h1m6 0h1m3 0h1m32 0h1m1 0h2m2 0h2m8 0h2m27 0h1m7 0h1m1 0h2m0 0h1m11 0h1m27 0h1m18 0h1m51 0h1m19 0h1m2 0h1m11 0h1m6 0h1m-357 1h1m18 0h1m15 0h2m9 0h1m4 0h1m1 0h2m2 0h2m2 0h2m10 0h1m26 0h2m9 0h1m31 0h2m1 0h1m6 0h2m11 0h1m11 0h1m19 0h1m5 0h2m-1 0h1m35 0h1m1 0h1m68 0h1m31 0h2m3 0h1m-366 1h1m2 0h1m6 0h1m7 0h1m12 0h2m13 0h1m17 0h1m10 0h2m45 0h1m15 0h1m15 0h2m11 0h2m2 0h1m17 0h1m9 0h1m21 0h1m4 0h2m6 0h1m1 0h1m2 0h1m15 0h1m22 0h1m7 0h1m15 0h1m10 0h1m7 0h2m71 0h2m-395 1h1m13 0h1m22 0h1m6 0h2m24 0h2m9 0h1m68 0h1m1 0h1m18 0h1m23 0h1m4 0h1m2 0h1m8 0h1m2 0h1m17 0h1m3 0h1m18 0h1m1 0h1m1 0h1m22 0h1m2 0h1m48 0h1m39 0h1m6 0h1m14 0h1m-396 1h1m5 0h1m8 0h1m13 0h1m10 0h1m8 0h1m1 0h1m0 0h1m1 0h1m2 0h2m3 0h1m0 0h1m31 0h2m-1 0h2m17 0h1m10 0h1m11 0h1m16 0h2m27 0h2m16 0h1m8 0h1m26 0h2m9 0h1m11 0h1m1 0h2m8 0h2m16 0h1m0 0h1m10 0h1m32 0h2m18 0h2m39 0h1m-370 1h1m5 0h1m3 0h1m16 0h1m9 0h2m43 0h2m12 0h2m-2 0h1m2 0h1m18 0h2m5 0h1m17 0h2m3 0h1m12 0h1m9 0h1m1 0h2m-1 0h1m1 0h1m6 0h1m12 0h1m6 0h1m38 0h1m24 0h2m-1 0h1m35 0h1m20 0h1m-350 1h1m7 0h1m5 0h1m2 0h1m4 0h2m-2 0h1m49 0h2m0 0h2m4 0h1m12 0h1m24 0h1m3 0h1m18 0h1m5 0h1m12 0h1m50 0h2m2 0h2m11 0h2m2 0h2m5 0h2m15 0h1m6 0h1m15 0h1m1 0h2m29 0h2m27 0h1m11 0h1m34 0h2m8 0h1m26 0h1m-425 1h1m22 0h1m27 0h1m23 0h1m12 0h1m17 0h1m2 0h2m1 0h1m4 0h1m31 0h1m10 0h1m6 0h1m4 0h1m0 0h1m22 0h2m2 0h1m11 0h1m16 0h1m4 0h1m13 0h1m47 0h1m6 0h2m18 0h3m30 0h2m4 0h1m16 0h1m3 0h3m52 0h2m27 0h1m12 0h1m86 0h1m113 0h1m-692 1h1m20 0h1m10 0h1m18 0h2m16 0h2m5 0h1m3 0h1m0 0h1m2 0h1m19 0h1m2 0h1m4 0h1m17 0h2m1 0h1m1 0h1m1 0h1m10 0h1m4 0h1m4 0h1m20 0h2m8 0h1m4 0h1m3 0h1m3 0h1m65 0h1m8 0h2m30 0h2m0 0h2m3 0h1m11 0h2m7 0h1m7 0h1m22 0h1m20 0h1m112 0h1m-480 1h1m2 0h2m0 0h1m5 0h1m25 0h1m9 0h1m3 0h1m1 0h1m2 0h1m4 0h1m2 0h1m20 0h1m5 0h1m20 0h1m2 0h2m1 0h2m4 0h1m1 0h1m35 0h1m10 0h1m20 0h1m18 0h1m3 0h2m-1 0h1m12 0h1m30 0h1m46 0h1m18 0h2m37 0h2m-383 1h1m12 0h1m16 0h1m24 0h2m12 0h1m2 0h1m2 0h1m8 0h2m5 0h1m19 0h2m7 0h1m16 0h2m14 0h1m1 0h2m9 0h2m0 0h2m4 0h2m34 0h1m3 0h1m56 0h2m15 0h1m14 0h2m19 0h1m5 0h1m16 0h1m13 0h1m26 0h1m2 0h1m21 0h1m-416 1h1m7 0h1m5 0h1m12 0h2m13 0h1m20 0h1m13 0h1m24 0h1m21 0h1m4 0h1m5 0h1m18 0h1m10 0h1m2 0h2m28 0h2m22 0h1m34 0h1m8 0h2m3 0h1m5 0h1m16 0h1m11 0h1m34 0h2m3 0h1m117 0h1m-467 1h1m3 0h9m43 0h1m11 0h1m4 0h2m1 0h1m11 0h1m21 0h3m-3 0h1m8 0h5m-4 0h1m6 0h10m-5 0h1m7 0h5m-3 0h2m18 0h1m2 0h2m1 0h2m17 0h2m9 0h1m-1 0h2m6 0h1m11 0h1m10 0h2m5 0h1m5 0h2m0 0h1m11 0h1m22 0h1m4 0h2m3 0h2m0 0h1m0 0h1m-1 0h4m6 0h1m1 0h1m37 0h1m1 0h1m15 0h1m5 0h1m11 0h1m5 0h1m4 0h1m261 0h1m-647 1h1m2 0h2m9 0h1m12 0h2m25 0h2m15 0h2m24 0h1m8 0h1m31 0h1m35 0h2m9 0h2m3 0h1m6 0h1m5 0h2m2 0h1m21 0h1m39 0h1m1 0h1m15 0h2m6 0h2m18 0h1m15 0h2m4 0h1m1 0h2m5 0h1m10 0h1m-364 1h1m23 0h2m10 0h1m27 0h1m3 0h2m23 0h2m0 0h2m10 0h1m8 0h1m13 0h1m18 0h1m-1 0h1m2 0h2m-1 0h2m0 0h1m4 0h1m0 0h1m2 0h2m22 0h1m32 0h2m1 0h2m2 0h1m0 0h1m11 0h2m3 0h2m10 0h2m0 0h1m0 0h2m0 0h1m27 0h1m12 0h1m10 0h2m9 0h1m29 0h2m8 0h1m5 0h1m15 0h1m10 0h2m7 0h3m36 0h1m35 0h3m-486 1h1m1 0h1m-1 0h5m6 0h1m2 0h1m14 0h3m1 0h6m-6 0h1m17 0h2m3 0h7m1 0h9m0 0h2m9 0h1m-1 0h5m6 0h1m18 0h1m5 0h5m-3 0h1m7 0h7m13 0h1m11 0h1m3 0h1m4 0h1m12 0h2m4 0h1m25 0h1m0 0h1m1 0h1m4 0h2m4 0h1m5 0h5m-1 0h2m0 0h1m1 0h6m-4 0h1m5 0h4m7 0h1m14 0h1m0 0h3m19 0h1m37 0h1m6 0h2m26 0h1m4 0h1m-376 1h1m1 0h1m17 0h1m28 0h1m18 0h2m1 0h1m3 0h2m12 0h1m3 0h2m6 0h1m6 0h2m26 0h1m17 0h1m1 0h1m5 0h1m9 0h1m5 0h1m6 0h2m0 0h2m10 0h1m40 0h1m10 0h1m14 0h1m21 0h1m14 0h2m34 0h1m18 0h1m5 0h1m6 0h1m20 0h1m-398 1h1m11 0h2m26 0h2m3 0h2m23 0h2m0 0h2m8 0h2m10 0h1m18 0h2m0 0h2m-1 0h1m19 0h1m2 0h1m18 0h1m31 0h2m2 0h1m9 0h1m23 0h2m3 0h1m1 0h1m13 0h1m2 0h2m2 0h1m3 0h2m6 0h1m1 0h1m9 0h2m25 0h1m54 0h1m24 0h1m15 0h1m-402 1h2m-1 0h7m4 0h1m6 0h1m3 0h1m9 0h4m2 0h10m1 0h6m2 0h4m-1 0h1m4 0h9m21 0h5m-3 0h1m9 0h2m4 0h6m12 0h2m-1 0h4m16 0h4m3 0h3m0 0h1m12 0h2m30 0h1m13 0h1m1 0h10m9 0h1m4 0h1m33 0h2m43 0h1m1 0h2m4 0h2m36 0h11m-3 0h1m132 0h1m-513 1h1m20 0h1m1 0h2m7 0h1m2 0h1m7 0h2m6 0h1m17 0h2m4 0h2m3 0h2m10 0h2m23 0h1m1 0h1m9 0h1m33 0h1m17 0h1m21 0h1m37 0h2m8 0h2m2 0h2m1 0h1m3 0h1m13 0h1m19 0h1m1 0h2m7 0h1m13 0h2m-331 1h1m18 0h1m14 0h1m4 0h1m4 0h1m4 0h1m6 0h2m10 0h1m2 0h1m49 0h2m-1 0h2m18 0h1m9 0h1m10 0h1m0 0h1m7 0h2m31 0h2m1 0h1m14 0h1m0 0h2m12 0h2m10 0h1m3 0h1m6 0h2m5 0h1m22 0h1m3 0h1m15 0h2m4 0h1m0 0h2m2 0h1m7 0h1m5 0h1m-339 1h8m9 0h2m0 0h2m5 0h1m8 0h2m3 0h1m13 0h10m-9 0h1m11 0h1m13 0h1m0 0h4m15 0h2m35 0h1m14 0h1m1 0h2m29 0h9m5 0h11m-5 0h1m11 0h1m11 0h2m-1 0h10m-3 0h1m1 0h1m2 0h1m0 0h1m6 0h1m4 0h4m10 0h1m5 0h1m8 0h1m7 0h2m22 0h2m8 0h1m2 0h1m6 0h1m-292 1h1m3 0h1m5 0h2m1 0h1m9 0h1m5 0h2m15 0h2m5 0h2m7 0h1m14 0h2m12 0h1m2 0h1m2 0h2m5 0h1m16 0h1m23 0h2m36 0h2m15 0h1m1 0h2m15 0h1m14 0h2m13 0h1m0 0h1m0 0h1m5 0h1m2 0h1m12 0h1m9 0h1m11 0h1m11 0h1m25 0h2m32 0h2m2 0h2m29 0h3m95 0h1m-527 1h1m24 0h1m26 0h2m13 0h1m5 0h2m0 0h2m2 0h2m3 0h1m16 0h1m2 0h1m16 0h1m7 0h2m11 0h1m15 0h1m5 0h1m4 0h1m14 0h1m1 0h2m31 0h1m1 0h1m2 0h2m3 0h2m19 0h1m30 0h1m24 0h1m15 0h1m25 0h1m-359 1h10m-8 0h2m17 0h1m3 0h2m10 0h1m9 0h1m5 0h1m1 0h10m-1 0h1m2 0h1m10 0h1m2 0h2m20 0h2m1 0h1m6 0h1m-1 0h1m3 0h1m0 0h2m24 0h1m16 0h1m6 0h7m-4 0h2m13 0h1m13 0h2m4 0h11m-6 0h1m2 0h2m7 0h2m0 0h1m8 0h8m25 0h1m0 0h5m7 0h1m20 0h6m-5 0h1m15 0h1m1 0h3m10 0h6m3 0h2m21 0h1m15 0h2m4 0h1m-376 1h1m1 0h2m2 0h2m2 0h1m24 0h2m0 0h1m21 0h1m4 0h1m2 0h1m6 0h1m5 0h2m0 0h1m6 0h2m6 0h1m39 0h1m11 0h1m7 0h2m20 0h1m4 0h1m40 0h1m25 0h1m13 0h1m15 0h2m15 0h2m4 0h1m12 0h1m1 0h1m21 0h1m31 0h1m266 0h1m-656 1h1m29 0h2m4 0h2m3 0h1m3 0h2m1 0h1m13 0h1m58 0h1m5 0h1m5 0h2m33 0h1m5 0h1m1 0h1m4 0h1m1 0h1m28 0h1m3 0h2m2 0h2m3 0h1m6 0h1m11 0h1m1 0h1m4 0h1m2 0h2m12 0h1m1 0h1m1 0h1m5 0h1m13 0h1m4 0h1m32 0h1m31 0h1m12 0h1m215 0h1m-599 1h7m5 0h2m17 0h1m23 0h1m2 0h8m-3 0h1m17 0h2m0 0h2m10 0h1m14 0h1m11 0h4m4 0h4m8 0h1m2 0h1m2 0h1m16 0h2m-2 0h2m14 0h2m22 0h1m4 0h1m4 0h1m0 0h2m5 0h1m0 0h9m-5 0h2m6 0h8m7 0h3m-3 0h1m8 0h1m32 0h6m-4 0h2m34 0h1m8 0h1m20 0h1m8 0h1m5 0h6m12 0h3m8 0h5m-410 1h1m32 0h1m5 0h1m26 0h1m22 0h1m8 0h2m25 0h1m11 0h2m4 0h1m8 0h1m20 0h1m28 0h1m45 0h1m21 0h1m22 0h1m17 0h1m46 0h1m-352 1h2m9 0h1m15 0h1m15 0h1m19 0h1m4 0h1m6 0h1m0 0h1m11 0h1m11 0h1m11 0h1m3 0h2m18 0h2m9 0h2m9 0h1m16 0h1m40 0h1m33 0h1m3 0h2m24 0h1m26 0h2m29 0h2m35 0h1m438 0h1m-805 1h1m25 0h1m0 0h2m61 0h2m20 0h1m7 0h1m12 0h1m27 0h2m27 0h2m49 0h2m34 0h1m2 0h1m14 0h1m4 0h1m7 0h2m5 0h2m12 0h2m3 0h1m3 0h2m-337 1h2m7 0h2m24 0h1m16 0h1m39 0h2m17 0h1m7 0h2m12 0h1m15 0h1m20 0h1m33 0h1m6 0h1m12 0h1m28 0h1m13 0h1m17 0h2m6 0h1m15 0h1m34 0h1m14 0h1m13 0h1m51 0h2m116 0h1m-539 1h1m6 0h1m20 0h2m16 0h2m1 0h1m11 0h1m1 0h1m7 0h2m9 0h2m2 0h1m9 0h1m7 0h1m10 0h1m31 0h2m11 0h1m11 0h2m1 0h2m18 0h1m22 0h1m2 0h1m4 0h1m8 0h1m23 0h2m45 0h1m6 0h1m38 0h1m123 0h2m-497 1h1m3 0h1m10 0h2m14 0h1m5 0h1m54 0h2m44 0h2m3 0h1m0 0h2m9 0h2m14 0h2m30 0h1m7 0h1m20 0h1m49 0h2m-2 0h1m47 0h1m47 0h1m-382 1h1m32 0h1m22 0h1m3 0h1m0 0h1m36 0h1m11 0h1m60 0h1m6 0h1m0 0h1m4 0h2m0 0h2m10 0h2m23 0h1m27 0h1m7 0h2m11 0h1m2 0h1m37 0h2m6 0h1m9 0h2m10 0h1m15 0h2m4 0h2m-366 1h1m42 0h1m39 0h1m21 0h2m5 0h2m27 0h1m19 0h2m-1 0h2m98 0h1m7 0h1m19 0h1m106 0h2m-1 0h2m-398 1h2m12 0h2m26 0h2m15 0h1m19 0h1m20 0h2m31 0h2m2 0h1m2 0h1m5 0h2m7 0h1m19 0h2m1 0h1m1 0h1m3 0h1m5 0h1m0 0h1m6 0h2m34 0h2m26 0h1m28 0h1m-290 1h1m34 0h1m27 0h1m1 0h2m33 0h1m9 0h1m8 0h2m7 0h1m3 0h1m21 0h1m29 0h1m1 0h2m45 0h1m45 0h2m91 0h2m2 0h1m195 0h1m124 0h1m-702 1h2m5 0h2m53 0h1m8 0h1m5 0h1m1 0h1m3 0h2m7 0h2m18 0h1m8 0h1m3 0h1m31 0h1m6 0h2m2 0h1m10 0h1m2 0h1m12 0h1m5 0h1m27 0h2m10 0h2m13 0h1m10 0h1m4 0h1m288 0h1m200 0h1m-765 1h2m11 0h2m20 0h2m4 0h2m3 0h2m8 0h2m14 0h2m9 0h1m7 0h2m4 0h2m47 0h2m26 0h1m8 0h1m9 0h1m1 0h1m8 0h1m83 0h1m21 0h1m51 0h2m489 0h2m-850 1h1m54 0h1m58 0h1m15 0h2m26 0h1m17 0h1m6 0h1m8 0h1m28 0h2m20 0h1m7 0h1m25 0h1m2 0h1m21 0h1m12 0h2m50 0h1m127 0h2m247 0h1m-729 1h1m6 0h1m29 0h2m40 0h1m18 0h1m8 0h2m7 0h1m15 0h1m1 0h1m4 0h1m19 0h1m14 0h1m13 0h1m18 0h1m1 0h2m110 0h1m55 0h2m213 0h1m87 0h1m-684 1h1m49 0h1m1 0h1m17 0h1m2 0h1m3 0h1m21 0h1m38 0h2m1 0h2m15 0h1m48 0h1m12 0h1m12 0h2m16 0h1m34 0h2m0 0h2m7 0h2m0 0h2m7 0h1m18 0h2m10 0h1m45 0h1m-406 1h1m32 0h1m34 0h1m27 0h1m25 0h1m6 0h1m30 0h1m18 0h1m2 0h1m1 0h1m2 0h1m71 0h2m5 0h2m11 0h1m5 0h2m-280 1h1m19 0h1m24 0h1m5 0h1m11 0h1m7 0h1m3 0h2m33 0h1m2 0h1m12 0h1m4 0h1m7 0h2m3 0h1m1 0h1m0 0h2m-2 0h1m21 0h1m3 0h1m35 0h1m11 0h2m22 0h2m88 0h1m-331 1h2m27 0h1m28 0h2m23 0h1m12 0h1m36 0h2m1 0h1m9 0h1m2 0h1m7 0h1m5 0h1m7 0h1m13 0h2m34 0h1m44 0h2m26 0h1m9 0h1m97 0h1m227 0h2m-634 1h1m5 0h2m3 0h2m6 0h2m20 0h1m7 0h2m27 0h1m27 0h1m10 0h1m27 0h2m21 0h1m1 0h1m39 0h1m27 0h2m7 0h2m72 0h1m58 0h1m130 0h2m-508 1h1m17 0h1m16 0h1m4 0h1m1 0h1m33 0h2m16 0h2m22 0h1m7 0h1m9 0h2m7 0h1m38 0h1m0 0h1m5 0h1m11 0h1m21 0h2m2 0h1m11 0h1m22 0h2m18 0h2m7 0h1m22 0h1m31 0h1m194 0h1m-474 1h1m19 0h1m0 0h1m64 0h2m5 0h1m1 0h2m13 0h1m28 0h2m24 0h1m4 0h1m11 0h1m50 0h1m36 0h2m3 0h1m41 0h2m149 0h1m-542 1h1m17 0h1m1 0h1m18 0h2m29 0h1m22 0h2m22 0h1m9 0h1m60 0h1m1 0h1m14 0h1m13 0h1m3 0h1m8 0h1m28 0h2m0 0h2m3 0h1m20 0h2m12 0h1m5 0h1m18 0h1m375 0h2m-714 1h2m30 0h1m8 0h2m41 0h1m22 0h2m10 0h1m9 0h2m24 0h1m20 0h2m33 0h2m46 0h1m33 0h1m1 0h1m37 0h1m50 0h1m107 0h1m308 0h1m-801 1h1m48 0h1m34 0h1m4 0h1m23 0h1m15 0h1m13 0h1m8 0h1m13 0h1m6 0h2m10 0h2m20 0h1m1 0h2m61 0h1m31 0h2m-309 1h1m13 0h1m6 0h1m2 0h2m2 0h1m4 0h1m6 0h2m16 0h1m66 0h2m22 0h1m1 0h1m0 0h1m4 0h1m42 0h1m17 0h1m15 0h1m27 0h1m26 0h1m35 0h2m68 0h1m100 0h1m-474 1h2m36 0h1m41 0h1m1 0h1m3 0h1m0 0h1m15 0h2m8 0h1m3 0h1m4 0h1m57 0h2m11 0h1m19 0h1m56 0h1m22 0h1m6 0h1m2 0h1m5 0h1m124 0h2m-433 1h1m0 0h2m12 0h1m1 0h2m11 0h1m43 0h1m20 0h2m-1 0h1m10 0h2m33 0h1m55 0h1m2 0h2m21 0h1m2 0h1m18 0h1m81 0h1m-328 1h1m1 0h1m1 0h1m93 0h1m54 0h1m56 0h1m21 0h1m23 0h1m17 0h2m34 0h1m4 0h2m25 0h2m159 0h1m-526 1h1m7 0h1m2 0h1m87 0h2m-1 0h1m21 0h1m49 0h1m0 0h1m6 0h1m10 0h2m17 0h1m6 0h1m16 0h1m0 0h1m9 0h1m20 0h1m12 0h1m61 0h2m40 0h1m166 0h1m-554 1h1m4 0h1m0 0h1m25 0h1m47 0h2m0 0h1m3 0h1m2 0h2m-1 0h1m14 0h2m9 0h2m26 0h1m1 0h1m14 0h1m5 0h1m5 0h1m2 0h2m1 0h2m11 0h1m10 0h1m8 0h1m34 0h2m8 0h1m4 0h1m33 0h1m14 0h2m60 0h1m75 0h1m268 0h1m76 0h2m-797 1h1m34 0h2m3 0h1m19 0h1m6 0h1m28 0h2m9 0h2m56 0h2m14 0h2m0 0h1m34 0h2m1 0h1m45 0h1m45 0h1m8 0h1m-262 1h1m5 0h1m1 0h1m5 0h1m19 0h1m2 0h2m14 0h1m5 0h1m30 0h1m8 0h1m6 0h2m10 0h1m66 0h2m19 0h1m36 0h2m11 0h2m0 0h1m31 0h2m6 0h1m37 0h1m67 0h2m76 0h1m15 0h1m83 0h1m-636 1h2m19 0h2m2 0h2m2 0h2m10 0h2m19 0h1m19 0h1m17 0h1m0 0h1m13 0h1m1 0h2m4 0h1m0 0h1m1 0h1m42 0h2m3 0h2m4 0h2m9 0h1m7 0h2m2 0h1m27 0h2m2 0h2m9 0h2m7 0h1m42 0h2m9 0h1m14 0h1m-330 1h1m44 0h2m1 0h2m35 0h1m47 0h2m22 0h1m11 0h1m15 0h1m4 0h1m7 0h2m16 0h1m11 0h1m25 0h2m8 0h1m9 0h1m19 0h1m-257 1h2m2 0h1m7 0h1m10 0h2m7 0h1m1 0h1m16 0h2m7 0h2m4 0h1m2 0h2m3 0h1m61 0h1m4 0h1m99 0h1m30 0h1m19 0h1m-298 1h2m12 0h1m17 0h1m4 0h1m25 0h2m-1 0h1m14 0h1m11 0h1m0 0h1m23 0h1m1 0h1m8 0h1m9 0h1m24 0h2m2 0h2m9 0h1m2 0h1m17 0h2m24 0h1m9 0h1m23 0h1m16 0h2m76 0h1m-389 1h2m-1 0h2m10 0h1m0 0h1m6 0h1m26 0h1m38 0h1m8 0h1m51 0h1m30 0h1m2 0h1m9 0h2m54 0h1m8 0h1m96 0h1m434 0h1m-786 1h1m14 0h1m1 0h1m3 0h1m34 0h2m7 0h1m13 0h1m25 0h1m6 0h2m8 0h1m12 0h1m6 0h1m12 0h1m14 0h1m59 0h2m6 0h2m44 0h1m8 0h1m44 0h1m4 0h1m4 0h1m10 0h1m3 0h1m5 0h1m29 0h1m-399 1h1m36 0h1m32 0h1m10 0h1m28 0h1m7 0h2m9 0h2m1 0h1m24 0h1m22 0h1m2 0h2m14 0h2m1 0h2m12 0h1m2 0h1m20 0h1m16 0h2m8 0h1m0 0h1m10 0h2m78 0h1m33 0h1m1 0h1m-366 1h2m6 0h1m11 0h1m10 0h1m3 0h2m20 0h1m0 0h1m15 0h1m3 0h1m32 0h1m71 0h1m-1 0h2m0 0h1m57 0h1m25 0h2m67 0h1m134 0h1m11 0h2m115 0h1m5 0h1m-642 1h2m34 0h2m6 0h2m3 0h1m12 0h1m9 0h1m56 0h1m6 0h1m8 0h2m1 0h1m27 0h2m36 0h1m26 0h1m1 0h1m20 0h1m84 0h2m254 0h2m-605 1h2m56 0h1m33 0h1m0 0h2m44 0h1m11 0h2m7 0h2m3 0h1m4 0h2m7 0h1m8 0h2m17 0h2m3 0h1m8 0h1m11 0h1m1 0h1m28 0h1m23 0h1m6 0h1m4 0h1m8 0h2m12 0h1m17 0h2m5 0h2m-332 1h1m15 0h1m8 0h1m23 0h1m21 0h2m33 0h1m13 0h1m25 0h2m27 0h1m86 0h1m53 0h2m8 0h2m26 0h1m-356 1h1m19 0h1m2 0h2m15 0h1m3 0h1m20 0h1m5 0h1m1 0h1m4 0h2m4 0h1m12 0h1m15 0h1m29 0h1m4 0h1m19 0h1m4 0h2m19 0h1m6 0h1m20 0h1m43 0h1m11 0h2m65 0h1m106 0h1m148 0h1m-623 1h1m2 0h2m23 0h1m3 0h1m13 0h1m57 0h2m6 0h2m1 0h1m26 0h2m27 0h2m30 0h2m9 0h1m25 0h2m24 0h1m14 0h2m14 0h1m25 0h1m4 0h1m24 0h2m47 0h2m173 0h1m2 0h1m-582 1h1m153 0h2m5 0h2m36 0h1m21 0h1m17 0h1m19 0h2m8 0h1m10 0h1m37 0h2m11 0h1m22 0h2m360 0h1m-702 1h1m2 0h1m6 0h1m19 0h1m3 0h2m0 0h2m2 0h1m2 0h2m28 0h1m57 0h2m30 0h1m25 0h1m40 0h1m19 0h1m23 0h2m3 0h1m8 0h2m1 0h1m28 0h1m260 0h1m-595 1h1m32 0h1m18 0h1m13 0h2m7 0h2m9 0h1m5 0h1m3 0h2m15 0h2m26 0h1m32 0h1m37 0h1m78 0h1m39 0h1m71 0h1m4 0h1m29 0h2m48 0h1m-458 1h1m17 0h1m12 0h1m1 0h1m99 0h2m21 0h1m4 0h1m26 0h2m12 0h1m26 0h1m2 0h2m47 0h1m14 0h2m8 0h1m8 0h1m5 0h1m22 0h2m6 0h1m208 0h1m-578 1h2m6 0h1m0 0h1m6 0h2m30 0h2m14 0h1m2 0h1m16 0h1m80 0h1m-1 0h1m36 0h2m39 0h1m23 0h2m29 0h2m37 0h1m13 0h1m6 0h1m-342 1h1m48 0h1m8 0h2m5 0h1m5 0h1m17 0h2m15 0h1m29 0h1m19 0h1m9 0h2m29 0h1m3 0h2m37 0h1m-1 0h1m20 0h1m21 0h1m0 0h1m-292 1h1m5 0h1m11 0h1m74 0h2m13 0h1m17 0h2m5 0h1m47 0h1m9 0h2m4 0h2m20 0h1m1 0h2m26 0h2m17 0h1m26 0h1m116 0h1m29 0h1m-465 1h1m16 0h2m31 0h1m2 0h1m15 0h1m12 0h1m8 0h2m33 0h1m31 0h2m3 0h1m16 0h2m1 0h1m18 0h1m14 0h1m11 0h1m28 0h1m8 0h2m82 0h2m21 0h1m-355 1h1m11 0h2m33 0h1m21 0h1m4 0h1m10 0h1m8 0h2m2 0h2m-1 0h1m4 0h1m22 0h1m43 0h2m11 0h1m49 0h1m24 0h1m35 0h1m32 0h1m169 0h2m167 0h2m-692 1h2m9 0h1m31 0h1m6 0h1m11 0h2m4 0h2m24 0h2m3 0h1m23 0h2m0 0h1m20 0h1m8 0h1m34 0h1m33 0h1m5 0h1m2 0h1m20 0h1m7 0h1m2 0h2m8 0h1m2 0h1m25 0h1m32 0h2m-345 1h1m13 0h1m35 0h1m6 0h2m2 0h1m2 0h1m11 0h2m20 0h2m60 0h1m23 0h1m29 0h1m29 0h1m26 0h1m19 0h2m7 0h1m18 0h1m23 0h1m7 0h2m36 0h1m13 0h2m114 0h2m-480 1h1m5 0h1m14 0h1m0 0h1m23 0h1m7 0h1m23 0h1m24 0h2m13 0h2m10 0h2m25 0h2m20 0h1m16 0h1m10 0h1m16 0h2m20 0h1m20 0h1m117 0h1m-410 1h1m31 0h2m9 0h1m17 0h1m6 0h1m11 0h1m20 0h2m23 0h2m7 0h2m33 0h2m8 0h1m3 0h2m6 0h2m9 0h1m33 0h2m5 0h1m22 0h1m9 0h2m12 0h1m410 0h1m-715 1h1m10 0h2m6 0h2m3 0h1m24 0h1m15 0h1m23 0h2m10 0h1m1 0h1m15 0h1m3 0h1m41 0h1m12 0h1m5 0h1m76 0h2m-1 0h1m14 0h1m8 0h2m12 0h1m36 0h2m-338 1h2m16 0h1m18 0h1m8 0h1m5 0h2m2 0h1m13 0h1m59 0h2m7 0h1m17 0h1m14 0h2m29 0h2m20 0h1m2 0h2m247 0h1m133 0h2m-617 1h1m23 0h2m1 0h1m41 0h1m24 0h2m21 0h1m3 0h2m22 0h1m17 0h2m3 0h1m6 0h1m11 0h1m1 0h1m1 0h1m19 0h1m7 0h1m19 0h1m28 0h1m0 0h2m-1 0h1m47 0h1m-317 1h1m11 0h1m29 0h1m52 0h1m3 0h1m51 0h1m0 0h2m5 0h1m1 0h2m0 0h1m9 0h1m12 0h1m40 0h1m31 0h2m-1 0h2m14 0h2m1 0h1m7 0h1m5 0h2m48 0h2m19 0h1m-1 0h1m8 0h1m18 0h1m30 0h1m353 0h2m-782 1h2m5 0h1m14 0h1m11 0h1m5 0h1m2 0h1m4 0h2m3 0h1m31 0h1m5 0h1m27 0h1m24 0h1m58 0h2m12 0h2m2 0h1m17 0h1m2 0h1m45 0h1m53 0h2m-1 0h1m168 0h1m71 0h1m238 0h2m-807 1h2m0 0h1m10 0h1m11 0h1m21 0h2m11 0h2m26 0h1m25 0h1m43 0h2m-1 0h2m20 0h1m7 0h2m5 0h1m12 0h1m26 0h1m43 0h2m471 0h1m-767 1h2m4 0h2m2 0h1m44 0h1m1 0h1m4 0h2m1 0h2m3 0h2m4 0h2m27 0h1m12 0h2m14 0h1m19 0h1m11 0h1m15 0h1m10 0h1m18 0h1m17 0h2m9 0h2m16 0h2m30 0h1m112 0h2m-409 1h2m2 0h1m12 0h1m14 0h1m9 0h2m0 0h2m25 0h1m11 0h1m25 0h2m10 0h1m43 0h1m9 0h1m0 0h1m1 0h1m7 0h1m3 0h1m44 0h1m10 0h1m53 0h1m5 0h1m9 0h1m14 0h1m18 0h1m16 0h1m216 0h2m114 0h1m-662 1h1m18 0h1m15 0h2m4 0h2m23 0h1m18 0h1m18 0h1m28 0h2m25 0h1m9 0h1m-212 1h2m27 0h1m6 0h1m1 0h1m2 0h1m31 0h1m11 0h2m26 0h1m4 0h1m47 0h1m17 0h1m19 0h1m17 0h1m10 0h1m20 0h1m11 0h1m30 0h1m1 0h1m45 0h2m23 0h1m72 0h1m74 0h1m34 0h1m-541 1h1m37 0h2m10 0h1m4 0h2m-1 0h1m27 0h2m9 0h1m27 0h1m4 0h2m17 0h1m0 0h1m37 0h1m8 0h1m7 0h1m18 0h1m3 0h1m4 0h1m17 0h2m84 0h1m93 0h1m46 0h1m207 0h1m77 0h1m-777 1h2m17 0h1m15 0h2m32 0h1m11 0h1m3 0h1m24 0h1m11 0h2m20 0h1m2 0h2m34 0h1m20 0h1m8 0h1m33 0h1m20 0h1m12 0h2m94 0h1m154 0h1m-516 1h1m3 0h1m7 0h1m10 0h1m5 0h2m15 0h2m23 0h1m17 0h1m13 0h2m28 0h2m1 0h2m29 0h1m18 0h2m14 0h1m130 0h2m189 0h2m68 0h1m99 0h1m172 0h2m-846 1h1m5 0h1m73 0h2m13 0h2m23 0h1m26 0h2m0 0h1m3 0h2m9 0h1m22 0h1m74 0h1m7 0h1m90 0h1m199 0h1m-577 1h1m8 0h2m0 0h1m6 0h1m19 0h2m-2 0h1m1 0h1m36 0h2m4 0h1m2 0h1m1 0h1m41 0h1m9 0h1m0 0h1m71 0h1m24 0h1m13 0h1m10 0h1m18 0h1m21 0h1m66 0h1m26 0h2m128 0h1m-548 1h1m16 0h2m10 0h1m3 0h1m14 0h2m38 0h1m13 0h2m25 0h1m5 0h1m4 0h1m20 0h1m11 0h1m13 0h2m2 0h1m8 0h1m28 0h1m39 0h1m82 0h2m7 0h2m9 0h1m87 0h1m389 0h1m-825 1h1m4 0h1m15 0h1m34 0h2m7 0h1m17 0h2m18 0h1m25 0h1m13 0h1m8 0h2m85 0h2m14 0h1m32 0h2m12 0h1m3 0h1m227 0h2m246 0h1m-809 1h1m20 0h2m1 0h1m3 0h1m2 0h2m5 0h1m1 0h1m14 0h2m3 0h1m6 0h1m3 0h1m9 0h1m2 0h1m7 0h1m14 0h2m30 0h2m5 0h1m11 0h2m19 0h1m16 0h2m-1 0h1m98 0h2m7 0h1m94 0h1m-373 1h1m3 0h1m21 0h1m2 0h1m4 0h1m14 0h1m35 0h1m39 0h2m6 0h2m20 0h2m8 0h2m2 0h1m59 0h1m-227 1h2m14 0h1m8 0h1m19 0h1m14 0h1m55 0h1m11 0h1m19 0h1m4 0h1m14 0h1m15 0h1m5 0h1m15 0h2m14 0h2m103 0h1m-345 1h2m16 0h1m38 0h2m15 0h1m7 0h1m10 0h2m55 0h1m31 0h1m43 0h1m2 0h2m45 0h2m52 0h2m-304 1h1m6 0h2m1 0h1m18 0h1m8 0h1m55 0h2m8 0h1m8 0h1m0 0h1m14 0h1m66 0h1m14 0h1m5 0h1m9 0h1m37 0h2m104 0h1m-415 1h2m32 0h1m40 0h2m40 0h1m23 0h1m28 0h1m53 0h1m6 0h2m11 0h1m12 0h1m29 0h1m24 0h1m22 0h1m4 0h1m8 0h1m4 0h2m183 0h1m2 0h1m-529 1h1m9 0h1m12 0h1m22 0h1m1 0h2m17 0h1m31 0h1m8 0h1m7 0h1m5 0h2m1 0h2m16 0h1m7 0h1m18 0h1m3 0h2m11 0h1m45 0h1m36 0h2m106 0h1m10 0h1m123 0h1m71 0h2m-586 1h1m26 0h2m19 0h1m8 0h2m1 0h1m2 0h2m32 0h2m27 0h2m1 0h1m23 0h1m26 0h1m44 0h1m44 0h2m4 0h1m17 0h1m278 0h2m-592 1h1m18 0h1m3 0h1m2 0h1m3 0h1m16 0h2m8 0h1m8 0h2m29 0h2m11 0h1m52 0h1m8 0h1m3 0h1m96 0h2m58 0h2m68 0h1m242 0h1m-638 1h1m22 0h1m101 0h2m8 0h1m3 0h1m4 0h2m7 0h2m1 0h2m21 0h1m581 0h1m-718 1h1m11 0h2m24 0h1m3 0h1m14 0h1m12 0h1m19 0h1m0 0h1m2 0h1m36 0h1m40 0h1m23 0h1m34 0h2m8 0h1m19 0h1m353 0h1m169 0h2m-803 1h1m5 0h2m6 0h2m77 0h2m44 0h1m5 0h1m29 0h1m9 0h2m4 0h1m16 0h1m145 0h1m89 0h1m-483 1h2m59 0h1m2 0h1m6 0h2m14 0h1m4 0h2m3 0h1m15 0h1m26 0h2m7 0h1m35 0h2m73 0h1m21 0h2m4 0h1m13 0h1m2 0h2m0 0h1m23 0h1m102 0h1m121 0h1m166 0h2m-701 1h1m7 0h1m21 0h2m53 0h2m13 0h1m6 0h1m7 0h1m3 0h2m29 0h1m34 0h1m0 0h2m13 0h1m55 0h2m26 0h1m24 0h1m345 0h2m22 0h1m3 0h2m-706 1h1m13 0h1m25 0h1m11 0h1m6 0h1m20 0h1m5 0h1m20 0h2m2 0h2m6 0h1m10 0h1m46 0h1m0 0h1m55 0h2m7 0h2m24 0h1m4 0h1m18 0h2m51 0h1m187 0h1m313 0h2m-841 1h1m0 0h2m11 0h2m22 0h1m1 0h1m22 0h1m20 0h1m9 0h1m23 0h1m7 0h1m6 0h1m7 0h1m35 0h1m26 0h1m22 0h1m281 0h1m-495 1h2m2 0h2m20 0h2m18 0h1m22 0h1m18 0h1m4 0h1m4 0h1m9 0h2m2 0h1m7 0h1m10 0h1m18 0h1m15 0h1m32 0h1m3 0h1m7 0h1m10 0h2m46 0h1m-240 1h2m5 0h2m9 0h1m11 0h1m3 0h1m9 0h1m10 0h2m15 0h2m21 0h2m43 0h1m12 0h1m8 0h1m1 0h1m25 0h2m2 0h1m15 0h2m18 0h1m274 0h1m-566 1h1m29 0h1m32 0h1m3 0h2m11 0h1m37 0h1m9 0h1m9 0h1m26 0h1m12 0h2m43 0h1m1 0h1m3 0h1m1 0h1m0 0h2m33 0h1m27 0h1m15 0h1m58 0h1m-369 1h1m46 0h2m32 0h1m2 0h2m18 0h1m23 0h1m3 0h2m25 0h1m21 0h1m13 0h2m47 0h1m13 0h1m10 0h2m3 0h2m5 0h1m1 0h1m44 0h1m387 0h1m202 0h1m-906 1h2m10 0h2m14 0h1m11 0h1m5 0h1m4 0h2m18 0h2m17 0h1m2 0h1m7 0h1m3 0h1m28 0h1m5 0h1m16 0h2m85 0h1m8 0h1m19 0h2m23 0h1m9 0h1m25 0h2m567 0h1m-900 1h1m4 0h1m9 0h1m23 0h1m10 0h2m36 0h2m10 0h1m26 0h2m28 0h2m31 0h2m2 0h1m5 0h1m55 0h1m66 0h1m54 0h2m63 0h2m71 0h1m227 0h1m-759 1h2m40 0h1m4 0h1m52 0h1m40 0h1m5 0h1m7 0h1m22 0h2m4 0h1m2 0h1m15 0h1m8 0h2m3 0h1m6 0h1m22 0h1m3 0h2m2 0h1m32 0h2m24 0h1m48 0h1m277 0h1m-593 1h1m44 0h1m12 0h2m17 0h2m8 0h1m2 0h1m5 0h1m25 0h1m42 0h2m13 0h2m113 0h2m-343 1h1m4 0h2m9 0h2m19 0h2m13 0h1m29 0h2m21 0h1m16 0h1m2 0h2m-1 0h1m24 0h2m59 0h1m2 0h2m10 0h1m8 0h1m6 0h1m17 0h1m11 0h1m21 0h1m30 0h2m-330 1h1m16 0h1m46 0h1m2 0h1m2 0h2m16 0h1m3 0h1m1 0h1m4 0h2m45 0h1m16 0h2m-1 0h2m9 0h1m13 0h1m1 0h2m0 0h1m1 0h1m12 0h1m69 0h2m40 0h1m20 0h1m287 0h1m49 0h2m-676 1h1m25 0h1m17 0h1m3 0h1m1 0h1m14 0h1m4 0h1m15 0h1m3 0h1m2 0h1m6 0h2m25 0h1m22 0h1m0 0h2m1 0h1m2 0h1m13 0h1m6 0h1m51 0h2m3 0h1m3 0h2m24 0h1m6 0h1m64 0h1m19 0h1m-353 1h1m50 0h1m14 0h1m10 0h2m34 0h1m21 0h2m2 0h2m22 0h2m12 0h1m2 0h2m38 0h2m6 0h1m7 0h1m32 0h1m78 0h1m-362 1h2m12 0h1m65 0h2m17 0h1m4 0h2m-1 0h2m19 0h2m10 0h1m5 0h2m18 0h1m27 0h2m5 0h1m4 0h2m21 0h1m9 0h1m21 0h2m46 0h2m27 0h1m-325 1h1m15 0h1m6 0h1m2 0h2m31 0h2m5 0h1m2 0h1m11 0h2m35 0h1m14 0h1m2 0h1m13 0h2m20 0h2m8 0h1m12 0h1m6 0h2m-1 0h2m1 0h1m50 0h2m21 0h1m4 0h2m-286 1h2m70 0h2m9 0h1m1 0h1m11 0h2m16 0h2m7 0h1m0 0h1m7 0h1m6 0h1m1 0h1m8 0h1m12 0h1m5 0h1m26 0h1m13 0h1m229 0h2m159 0h1m-617 1h1m15 0h2m18 0h1m7 0h1m2 0h1m9 0h2m36 0h2m18 0h2m2 0h1m14 0h1m16 0h2m44 0h1m3 0h1m19 0h1m28 0h1m24 0h2m28 0h2m8 0h1m319 0h2m-593 1h2m22 0h2m0 0h1m9 0h1m6 0h2m13 0h2m8 0h1m12 0h1m4 0h2m3 0h1m10 0h1m19 0h2m15 0h1m0 0h2m3 0h1m19 0h1m4 0h2m45 0h1m5 0h2m32 0h1m22 0h2m1 0h1m63 0h2m-295 1h1m1 0h1m10 0h1m25 0h2m14 0h1m5 0h1m0 0h2m14 0h1m10 0h2m29 0h1m10 0h1m13 0h2m9 0h1m2 0h1m16 0h1m8 0h1m8 0h1m64 0h1m17 0h1m254 0h1m-625 1h2m61 0h2m0 0h1m14 0h1m6 0h2m6 0h2m8 0h1m25 0h2m21 0h1m17 0h1m11 0h1m22 0h1m18 0h1m10 0h1m-244 1h1m4 0h1m17 0h1m25 0h1m7 0h2m8 0h1m40 0h1m4 0h2m4 0h1m13 0h1m60 0h1m30 0h1m3 0h1m23 0h2m15 0h1m91 0h2m-368 1h1m24 0h1m26 0h2m2 0h1m6 0h1m3 0h2m41 0h1m26 0h1m3 0h1m5 0h1m0 0h1m3 0h2m7 0h2m3 0h2m1 0h1m21 0h1m32 0h1m23 0h1m63 0h2m98 0h1m-397 1h2m4 0h1m10 0h1m35 0h1m3 0h1m2 0h2m26 0h1m14 0h1m11 0h1m50 0h1m6 0h1m25 0h2m71 0h1m163 0h1m-446 1h2m4 0h1m17 0h1m6 0h1m2 0h2m52 0h1m14 0h1m31 0h2m12 0h2m2 0h2m16 0h1m7 0h2m32 0h1m2 0h2m18 0h1m4 0h1m17 0h1m3 0h2m43 0h1m14 0h1m23 0h1m392 0h1m-714 1h1m18 0h1m16 0h1m10 0h1m11 0h1m5 0h2m1 0h1m15 0h2m38 0h2m20 0h2m10 0h1m47 0h2m3 0h1m5 0h2m10 0h1m37 0h1m46 0h1m204 0h1m-471 1h2m15 0h1m39 0h2m8 0h1m1 0h2m18 0h2m27 0h1m16 0h1m70 0h1m43 0h1m28 0h1m32 0h2m249 0h1m-622 1h2m4 0h1m0 0h2m5 0h2m37 0h2m52 0h1m35 0h1m24 0h2m22 0h2m6 0h2m13 0h1m0 0h1m17 0h1m169 0h1m-412 1h1m7 0h1m16 0h1m9 0h1m13 0h2m-1 0h1m17 0h1m8 0h1m31 0h2m5 0h2m43 0h2m27 0h1m11 0h1m94 0h2m19 0h1m11 0h1m97 0h1m30 0h1m-432 1h2m37 0h2m11 0h1m2 0h1m9 0h2m-1 0h1m7 0h1m21 0h1m19 0h2m12 0h1m23 0h2m12 0h1m38 0h1m1 0h1m41 0h1m-288 1h1m23 0h1m21 0h2m8 0h2m23 0h1m27 0h2m26 0h1m19 0h1m43 0h1m21 0h2m22 0h1m29 0h2m9 0h1m121 0h1m-395 1h1m2 0h1m20 0h2m7 0h1m27 0h1m1 0h1m33 0h1m10 0h1m34 0h1m10 0h1m39 0h1m101 0h1m152 0h2m62 0h2m-540 1h2m26 0h1m3 0h1m3 0h1m24 0h1m72 0h1m10 0h2m18 0h1m1 0h1m37 0h1m42 0h1m5 0h1m72 0h1m-285 1h2m28 0h1m46 0h1m48 0h2m0 0h1m15 0h1m35 0h1m59 0h1m1 0h1m129 0h1m-413 1h1m1 0h1m25 0h2m5 0h1m14 0h1m6 0h2m55 0h2m10 0h1m36 0h2m-2 0h1m9 0h1m63 0h1m7 0h2m2 0h2m24 0h2m10 0h2m6 0h1m-276 1h1m24 0h1m16 0h2m26 0h2m3 0h2m46 0h2m-1 0h1m3 0h1m31 0h1m47 0h1m14 0h1m68 0h2m273 0h2m-576 1h2m20 0h1m1 0h1m29 0h1m3 0h1m23 0h1m4 0h1m28 0h2m8 0h1m25 0h2m9 0h1m7 0h1m8 0h1m1 0h2m10 0h1m33 0h2m96 0h1m-329 1h2m43 0h2m4 0h2m11 0h2m6 0h1m12 0h2m11 0h1m1 0h2m-1 0h1m21 0h1m45 0h1m39 0h2m1 0h2m19 0h1m15 0h1m-204 1h2m20 0h1m27 0h1m1 0h2m8 0h1m35 0h1m1 0h2m32 0h1m13 0h2m60 0h1m52 0h1m172 0h1m-494 1h2m71 0h1m22 0h1m32 0h2m0 0h2m40 0h1m45 0h1m5 0h2m-1 0h2m24 0h2m-241 1h1m91 0h2m1 0h1m99 0h1m7 0h2m54 0h1m60 0h2m-327 1h1m20 0h1m5 0h2m0 0h1m96 0h1m14 0h1m5 0h1m80 0h2m33 0h1m6 0h2m75 0h1m-356 1h1m122 0h1m96 0h1m90 0h1m-316 1h1m45 0h1m3 0h1m18 0h2m3 0h1m9 0h2m19 0h1m63 0h1m0 0h1m14 0h1m23 0h2m1 0h1m20 0h2m47 0h1m359 0h1m-612 1h2m36 0h1m14 0h2m28 0h1m56 0h1m52 0h1m181 0h1m-359 1h1m60 0h1m17 0h2m0 0h1m0 0h1m8 0h1m13 0h2m26 0h2m30 0h1m35 0h1m67 0h1m65 0h1m51 0h2m-423 1h2m28 0h1m86 0h2m183 0h1m40 0h1m-318 1h1m13 0h1m27 0h2m44 0h1m17 0h1m35 0h2m35 0h1m88 0h1m-281 1h1m17 0h1m63 0h1m11 0h1m15 0h1m7 0h1m1 0h2m38 0h1m24 0h2m58 0h2m293 0h2m139 0h1m-697 1h1m41 0h1m24 0h1m73 0h2m9 0h1m30 0h2m62 0h1m-228 1h1m33 0h1m111 0h1m16 0h1m434 0h1m-584 1h1m79 0h1m38 0h1m32 0h2m20 0h2m9 0h1m206 0h2m81 0h1m1 0h1m-508 1h2m14 0h1m110 0h2m1 0h1m102 0h2m-221 1h1m12 0h1m14 0h1m104 0h1m30 0h1m21 0h1m74 0h1m193 0h1m-475 1h1m158 0h1m68 0h1m97 0h1m68 0h2m-398 1h1m25 0h1m27 0h2m3 0h1m67 0h1m42 0h2m91 0h1m27 0h1m13 0h1m154 0h1m-421 1h1m43 0h1m99 0h1m120 0h1m152 0h1m-465 1h2m48 0h2m79 0h1m287 0h2m-349 1h1m68 0h2m38 0h1m43 0h2m13 0h1m75 0h1m-280 1h1m20 0h2m247 0h2m202 0h2m-514 1h1m279 0h1m6 0h1m16 0h2m30 0h1m-260 1h1m56 0h2m234 0h1m122 0h2m-395 1h1m281 0h1m-349 1h1m219 0h1m283 0h1m-482 1h2m59 0h2m43 0h1m41 0h1m145 0h1m67 0h1m-357 1h2m126 0h2m6 0h2m-141 1h2m16 0h1m24 0h1m115 0h2m48 0h2m-204 1h1m1 0h1m181 0h1m231 0h2m-442 1h1m88 0h1m77 0h1m-182 1h2m1 0h1m53 0h2m247 0h2m-140 1h1m-121 1h2m44 0h1m35 0h1m74 0h1m0 0h1m54 0h2m-250 1h2m7 0h2m48 0h1m102 0h2m202 0h2m-364 1h1m16 0h1m96 1h1m-147 1h2m69 0h2m92 0h1m133 0h1m-312 1h2m249 0h2m-181 1h1m210 0h1m-52 1h1m49 0h1m-156 2h1m27 0h1m-13 1h1m38 0h1m-163 1h1m5 0h2m-11 1h1m195 0h1m-206 1h1m29 0h2m40 0h1m-32 1h1m103 0h1m27 0h2m8 0h2m12 0h1m37 0h2m-206 1h1m120 1h1m-137 1h1m23 0h1m-10 2h1m30 1h1m34 0h1m135 0h1m-129 1h1m310 2h1m-402 1h1m105 0h2m-61 1h2m-60 1h2m81 0h1m140 0h2m-167 2h1m-54 1h2m27 0h2m322 0h1m-70 2h1m-140 1h1m26 0h1m-24 1h1m56 3h2m-118 2h2m32 0h1m103 1h1m-81 1h2m40 1h1m-141 4h1m-74 1h2m6 0h1m232 1h1m-243 3h1m313 2h1m-267 2h2m182 0h1m38 0h1m41 9h1m-107 1h1m-163 6h2m55 0h1m-92 5h1m159 3h1" stroke="#4a5cf2" stroke-opacity="0.28" stroke-width="1" fill="none"/><path d="m302 107.5h1m25 0h1m5 0h1m55 0h2m15 0h1m25 0h2m25 0h1m22 0h2m13 0h1m37 0h1m50 0h2m32 0h1m8 0h2m6 0h2m23 0h2m-372 1h1m11 0h1m8 0h1m8 0h1m2 0h1m39 0h1m2 0h2m9 0h1m12 0h1m43 0h1m15 0h2m9 0h2m94 0h1m2 0h2m6 0h1m29 0h1m49 0h1m5 0h1m26 0h1m-404 1h1m14 0h1m1 0h1m18 0h2m40 0h1m33 0h2m0 0h1m10 0h1m2 0h2m0 0h1m0 0h2m7 0h1m5 0h1m24 0h1m2 0h2m12 0h1m9 0h1m10 0h2m-1 0h1m3 0h1m24 0h1m6 0h1m22 0h2m3 0h1m5 0h1m10 0h2m17 0h1m28 0h1m-311 1h1m35 0h1m7 0h1m18 0h1m3 0h1m35 0h1m6 0h1m67 0h1m14 0h1m1 0h1m81 0h2m67 0h1m21 0h1m5 0h1m-401 1h1m14 0h1m19 0h1m12 0h1m0 0h1m6 0h2m29 0h1m4 0h2m20 0h1m6 0h2m23 0h1m7 0h2m11 0h1m1 0h1m8 0h1m12 0h1m14 0h2m21 0h1m4 0h1m14 0h1m45 0h1m59 0h2m7 0h1m106 0h1m-476 1h1m1 0h2m4 0h2m7 0h1m9 0h1m59 0h1m20 0h2m0 0h1m0 0h2m2 0h1m16 0h1m46 0h1m16 0h1m39 0h1m15 0h1m5 0h1m2 0h1m29 0h2m13 0h1m41 0h2m-325 1h1m11 0h1m35 0h1m4 0h2m14 0h1m121 0h1m6 0h2m17 0h2m15 0h2m1 0h1m10 0h1m18 0h1m20 0h2m3 0h1m0 0h1m27 0h1m6 0h2m33 0h1m51 0h1m38 0h1m85 0h2m-571 1h1m3 0h1m27 0h1m17 0h2m6 0h1m1 0h1m21 0h1m55 0h1m26 0h1m6 0h1m6 0h1m40 0h1m37 0h1m29 0h1m1 0h1m69 0h1m16 0h1m-329 1h2m7 0h1m7 0h2m32 0h1m5 0h1m73 0h1m11 0h1m7 0h1m23 0h1m29 0h1m22 0h1m7 0h1m85 0h1m-342 1h2m4 0h1m1 0h1m6 0h2m28 0h2m10 0h1m11 0h2m7 0h1m26 0h1m54 0h2m53 0h1m21 0h2m1 0h2m31 0h2m46 0h2m-276 1h2m3 0h2m84 0h1m17 0h2m2 0h1m96 0h2m41 0h2m70 0h1m48 0h2m-429 1h2m9 0h1m8 0h1m2 0h1m41 0h1m6 0h1m45 0h2m34 0h1m26 0h1m5 0h1m14 0h2m31 0h2m48 0h1m-270 1h1m26 0h2m9 0h2m9 0h1m8 0h2m6 0h1m22 0h1m8 0h2m37 0h1m3 0h1m19 0h1m2 0h1m4 0h2m14 0h1m8 0h2m64 0h2m3 0h2m22 0h1m7 0h1m30 0h1m22 0h2m-387 1h1m8 0h1m23 0h1m16 0h1m7 0h1m68 0h2m15 0h1m17 0h1m10 0h2m13 0h2m25 0h1m38 0h2m32 0h1m15 0h1m45 0h1m9 0h2m15 0h2m-376 1h1m115 0h2m2 0h1m20 0h1m16 0h1m14 0h2m6 0h1m5 0h2m53 0h1m31 0h1m4 0h1m1 0h1m82 0h2m-362 1h1m6 0h1m39 0h2m11 0h2m3 0h1m6 0h2m2 0h2m13 0h2m1 0h1m35 0h2m25 0h1m8 0h1m13 0h1m8 0h1m11 0h1m16 0h1m45 0h2m8 0h2m85 0h1m-351 1h1m13 0h1m3 0h1m14 0h1m15 0h1m9 0h1m0 0h1m8 0h1m3 0h1m50 0h2m5 0h1m2 0h1m12 0h1m40 0h2m0 0h1m8 0h1m17 0h2m32 0h1m33 0h1m30 0h1m37 0h2m211 0h1m13 0h1m-604 1h1m8 0h2m15 0h2m3 0h1m16 0h1m10 0h1m6 0h1m20 0h2m11 0h2m7 0h1m65 0h1m22 0h2m3 0h2m4 0h2m19 0h1m5 0h1m8 0h2m17 0h1m3 0h1m14 0h1m81 0h2m-362 1h2m10 0h1m33 0h1m12 0h1m40 0h2m28 0h1m13 0h2m4 0h1m28 0h2m0 0h1m10 0h2m4 0h1m3 0h1m28 0h1m4 0h2m1 0h1m26 0h1m11 0h1m10 0h2m23 0h2m45 0h1m21 0h2m15 0h1m114 0h1m11 0h1m-534 1h1m23 0h1m5 0h2m-1 0h1m4 0h1m21 0h1m3 0h1m0 0h2m3 0h2m12 0h1m28 0h2m14 0h2m45 0h1m2 0h1m11 0h1m1 0h1m2 0h2m35 0h1m3 0h1m14 0h1m14 0h1m36 0h1m4 0h2m29 0h1m10 0h1m11 0h2m-339 1h1m58 0h1m42 0h1m3 0h2m0 0h2m11 0h1m31 0h2m19 0h1m7 0h1m1 0h2m3 0h2m3 0h1m2 0h1m7 0h1m45 0h1m6 0h1m3 0h1m4 0h1m27 0h2m26 0h1m11 0h2m15 0h2m-374 1h1m11 0h2m12 0h1m5 0h1m3 0h2m18 0h2m27 0h2m8 0h2m12 0h1m30 0h1m5 0h2m28 0h1m8 0h1m9 0h1m19 0h1m14 0h1m8 0h2m5 0h1m4 0h2m11 0h2m3 0h2m14 0h2m2 0h1m37 0h1m18 0h1m43 0h1m-392 1h1m20 0h2m4 0h1m40 0h2m7 0h2m4 0h2m-1 0h2m17 0h2m16 0h1m9 0h1m10 0h1m4 0h1m21 0h2m4 0h2m4 0h1m15 0h2m43 0h1m6 0h2m2 0h1m22 0h1m2 0h1m1 0h1m31 0h1m1 0h1m24 0h1m16 0h1m112 0h2m-476 1h2m1 0h1m10 0h2m1 0h2m72 0h1m16 0h1m2 0h1m2 0h1m25 0h2m11 0h1m35 0h1m82 0h1m22 0h1m26 0h1m5 0h1m6 0h1m20 0h1m37 0h2m13 0h1m45 0h1m-455 1h2m12 0h1m1 0h1m2 0h1m45 0h2m9 0h1m10 0h1m21 0h1m20 0h1m2 0h1m3 0h1m1 0h1m8 0h2m-2 0h1m12 0h1m16 0h1m4 0h2m1 0h1m11 0h1m15 0h1m7 0h1m3 0h1m18 0h1m46 0h2m12 0h1m40 0h2m139 0h2m-488 1h2m-1 0h1m4 0h2m25 0h1m16 0h1m19 0h1m0 0h1m4 0h2m6 0h2m4 0h1m2 0h1m2 0h1m1 0h2m3 0h1m8 0h2m-2 0h1m3 0h1m1 0h1m14 0h1m5 0h2m6 0h1m10 0h1m5 0h2m0 0h1m3 0h2m-1 0h1m22 0h1m15 0h2m36 0h1m7 0h1m23 0h2m2 0h1m10 0h2m24 0h2m10 0h1m96 0h1m4 0h1m10 0h1m19 0h1m-468 1h2m14 0h1m2 0h2m1 0h2m14 0h2m0 0h1m14 0h2m6 0h1m13 0h1m26 0h2m3 0h1m74 0h2m21 0h1m11 0h1m4 0h1m1 0h1m17 0h1m2 0h2m52 0h2m26 0h1m4 0h1m16 0h1m10 0h1m105 0h1m16 0h3m29 0h3m-514 1h1m7 0h1m9 0h1m8 0h1m14 0h2m2 0h1m3 0h1m7 0h1m12 0h1m0 0h1m22 0h1m10 0h2m9 0h1m14 0h2m15 0h1m9 0h2m-1 0h2m30 0h1m3 0h1m14 0h1m4 0h1m6 0h2m4 0h1m19 0h1m13 0h1m17 0h2m17 0h1m62 0h1m0 0h1m10 0h1m13 0h2m-395 1h1m41 0h2m5 0h1m18 0h2m31 0h2m5 0h2m13 0h1m38 0h1m2 0h1m29 0h2m13 0h1m20 0h1m16 0h2m11 0h1m2 0h1m6 0h1m9 0h2m1 0h1m4 0h2m34 0h1m1 0h1m31 0h1m19 0h1m12 0h1m6 0h1m-404 1h2m6 0h1m30 0h1m3 0h2m0 0h1m17 0h1m3 0h1m29 0h1m30 0h1m52 0h2m3 0h1m4 0h2m-1 0h1m29 0h1m2 0h1m12 0h1m11 0h1m10 0h1m4 0h2m27 0h1m4 0h1m4 0h2m7 0h1m1 0h2m6 0h2m23 0h1m8 0h1m-358 1h1m3 0h1m21 0h1m2 0h2m12 0h1m21 0h2m41 0h2m12 0h1m42 0h2m17 0h2m8 0h1m6 0h1m8 0h2m5 0h1m18 0h2m-1 0h1m7 0h2m71 0h1m37 0h2m19 0h1m79 0h1m-447 1h1m8 0h2m14 0h1m1 0h2m6 0h8m-8 0h2m12 0h5m22 0h2m9 0h1m1 0h2m4 0h1m7 0h2m2 0h1m0 0h2m14 0h1m4 0h2m9 0h1m4 0h2m-1 0h1m21 0h1m5 0h1m-1 0h8m2 0h3m2 0h1m15 0h2m6 0h10m7 0h9m1 0h1m2 0h2m15 0h2m9 0h2m15 0h2m2 0h1m1 0h1m17 0h2m18 0h7m-7 0h1m42 0h2m-388 1h2m4 0h1m5 0h2m10 0h2m8 0h2m0 0h1m7 0h2m0 0h1m0 0h2m4 0h1m11 0h1m35 0h2m3 0h2m2 0h1m3 0h2m2 0h1m4 0h1m1 0h1m18 0h2m43 0h1m16 0h2m15 0h1m5 0h1m6 0h2m-1 0h1m27 0h1m11 0h1m21 0h1m18 0h1m12 0h1m6 0h2m6 0h1m43 0h2m-384 1h1m6 0h1m14 0h1m38 0h1m4 0h1m5 0h1m8 0h1m49 0h1m11 0h1m9 0h1m49 0h1m3 0h2m41 0h1m11 0h1m2 0h1m30 0h1m8 0h1m21 0h1m3 0h1m4 0h1m33 0h2m104 0h2m-483 1h1m9 0h1m3 0h8m11 0h2m-1 0h2m6 0h1m0 0h8m-4 0h1m11 0h2m2 0h1m31 0h1m15 0h2m16 0h2m5 0h2m3 0h2m11 0h1m27 0h9m15 0h1m-1 0h5m-3 0h1m18 0h5m-2 0h1m10 0h2m21 0h1m10 0h2m2 0h1m2 0h1m34 0h1m14 0h2m23 0h2m0 0h5m26 0h10m-401 1h1m3 0h1m14 0h1m5 0h2m22 0h2m16 0h2m3 0h1m21 0h1m9 0h2m1 0h1m25 0h1m5 0h2m21 0h1m4 0h2m-1 0h1m14 0h1m5 0h1m21 0h1m3 0h1m6 0h1m6 0h2m20 0h1m46 0h1m10 0h1m10 0h1m2 0h1m8 0h1m5 0h1m-313 1h1m27 0h1m1 0h1m2 0h2m28 0h1m3 0h1m28 0h1m35 0h1m0 0h2m2 0h2m4 0h1m80 0h1m17 0h1m26 0h1m6 0h1m2 0h2m4 0h1m23 0h1m15 0h1m8 0h2m5 0h1m12 0h1m136 0h1m-508 1h1m4 0h7m9 0h1m32 0h1m7 0h1m13 0h11m-10 0h1m12 0h2m6 0h2m-1 0h5m9 0h2m3 0h7m-5 0h2m16 0h1m4 0h4m-2 0h1m17 0h6m5 0h4m-2 0h1m8 0h1m3 0h2m2 0h1m0 0h11m9 0h1m5 0h1m9 0h1m4 0h2m15 0h1m1 0h4m13 0h1m9 0h1m22 0h2m39 0h1m2 0h1m3 0h1m9 0h1m29 0h1m186 0h1m163 0h1m-745 1h1m42 0h1m0 0h1m5 0h1m3 0h1m19 0h1m1 0h1m11 0h1m3 0h2m4 0h1m23 0h1m17 0h2m3 0h1m34 0h2m10 0h2m8 0h1m6 0h2m0 0h1m13 0h2m-2 0h1m15 0h1m33 0h1m15 0h1m60 0h1m15 0h1m4 0h1m152 0h1m-533 1h1m7 0h1m1 0h2m10 0h2m18 0h2m27 0h2m1 0h2m1 0h1m25 0h1m20 0h1m2 0h2m16 0h1m6 0h1m24 0h1m0 0h2m30 0h1m14 0h1m15 0h1m1 0h1m0 0h1m25 0h1m7 0h1m10 0h2m7 0h2m52 0h1m-359 1h1m6 0h1m0 0h1m3 0h6m2 0h2m0 0h10m-3 0h2m-1 0h1m7 0h6m3 0h4m25 0h1m1 0h1m8 0h8m18 0h1m5 0h2m-1 0h1m3 0h1m3 0h1m1 0h1m14 0h9m17 0h2m14 0h1m15 0h1m9 0h2m-1 0h1m46 0h1m7 0h1m5 0h2m-1 0h9m-6 0h2m7 0h1m9 0h2m0 0h1m0 0h4m5 0h1m30 0h8m-1 0h2m2 0h10m5 0h1m8 0h1m29 0h2m305 0h1m-703 1h2m0 0h2m21 0h2m1 0h1m13 0h1m7 0h2m-1 0h1m2 0h2m0 0h1m4 0h1m14 0h2m25 0h1m44 0h1m16 0h2m0 0h1m20 0h1m0 0h1m7 0h1m54 0h1m23 0h1m6 0h1m26 0h2m10 0h1m39 0h1m6 0h1m93 0h3m-470 1h1m11 0h1m32 0h1m16 0h2m8 0h1m4 0h2m14 0h2m13 0h2m15 0h2m0 0h2m2 0h1m5 0h2m18 0h1m49 0h2m34 0h1m8 0h1m0 0h1m1 0h1m16 0h2m21 0h1m20 0h2m10 0h1m31 0h1m36 0h2m6 0h1m24 0h2m11 0h1m32 0h1m-484 1h2m23 0h9m-2 0h2m2 0h1m3 0h2m1 0h2m34 0h9m-8 0h2m11 0h6m3 0h1m8 0h1m8 0h5m3 0h9m0 0h2m4 0h2m12 0h2m-1 0h5m31 0h2m7 0h1m4 0h3m7 0h1m9 0h1m0 0h4m-2 0h2m24 0h8m18 0h1m21 0h2m0 0h1m8 0h1m4 0h1m19 0h1m8 0h2m19 0h1m21 0h1m-378 1h1m1 0h1m12 0h2m31 0h1m9 0h2m7 0h1m9 0h2m18 0h1m6 0h1m24 0h2m2 0h2m2 0h2m-1 0h1m5 0h1m19 0h2m2 0h1m14 0h1m15 0h2m8 0h2m7 0h2m7 0h2m29 0h2m0 0h1m19 0h1m132 0h1m82 0h1m-509 1h1m8 0h1m48 0h1m8 0h1m12 0h2m12 0h1m15 0h2m1 0h1m12 0h1m8 0h1m16 0h1m12 0h2m5 0h1m10 0h1m5 0h1m2 0h1m6 0h1m0 0h1m23 0h1m83 0h1m1 0h1m14 0h2m16 0h1m0 0h2m17 0h1m235 0h1m22 0h1m-593 1h1m7 0h2m3 0h6m12 0h1m3 0h2m1 0h8m-6 0h1m1 0h2m12 0h1m2 0h3m17 0h2m-1 0h1m4 0h2m6 0h2m58 0h10m-4 0h1m19 0h1m13 0h1m10 0h1m7 0h2m19 0h1m29 0h2m2 0h1m6 0h1m15 0h1m2 0h1m0 0h1m9 0h1m45 0h2m3 0h1m1 0h1m-378 1h1m7 0h1m37 0h1m9 0h2m21 0h1m2 0h1m1 0h1m9 0h1m14 0h1m14 0h1m7 0h2m19 0h1m0 0h1m8 0h2m0 0h2m39 0h1m11 0h1m12 0h1m9 0h2m16 0h1m3 0h2m6 0h2m0 0h2m9 0h2m13 0h1m38 0h2m250 0h1m-600 1h1m16 0h1m42 0h1m15 0h1m11 0h2m10 0h2m16 0h1m6 0h2m1 0h2m17 0h2m9 0h1m26 0h1m39 0h2m6 0h2m0 0h1m68 0h1m78 0h1m4 0h1m-367 1h2m44 0h2m5 0h2m8 0h1m21 0h1m36 0h2m7 0h1m12 0h1m21 0h1m9 0h1m24 0h2m7 0h1m10 0h1m4 0h1m1 0h1m25 0h2m8 0h1m47 0h1m12 0h1m324 0h2m50 0h1m-727 1h2m-1 0h2m20 0h1m11 0h1m5 0h1m11 0h1m3 0h2m6 0h1m46 0h1m2 0h2m23 0h1m0 0h1m4 0h1m8 0h1m6 0h1m21 0h1m6 0h1m14 0h2m43 0h1m1 0h1m6 0h1m11 0h2m91 0h1m4 0h1m60 0h1m267 0h1m-703 1h2m2 0h2m41 0h1m43 0h2m23 0h2m85 0h1m7 0h1m4 0h1m28 0h2m35 0h1m14 0h1m9 0h1m42 0h1m4 0h2m53 0h2m-389 1h1m9 0h1m1 0h1m5 0h1m2 0h2m15 0h2m4 0h1m6 0h1m6 0h2m26 0h1m18 0h2m37 0h2m46 0h1m27 0h1m13 0h1m94 0h1m30 0h1m148 0h2m69 0h1m-579 1h2m12 0h1m7 0h2m0 0h1m36 0h1m29 0h2m28 0h1m5 0h1m3 0h1m5 0h1m8 0h2m-1 0h1m20 0h1m25 0h1m13 0h1m0 0h1m18 0h2m21 0h1m2 0h2m-250 1h2m7 0h1m2 0h1m0 0h1m26 0h1m10 0h1m45 0h1m1 0h2m37 0h1m30 0h1m9 0h1m7 0h2m36 0h1m5 0h1m17 0h2m1 0h1m31 0h2m42 0h1m-347 1h2m0 0h1m17 0h1m20 0h1m2 0h1m3 0h1m29 0h1m32 0h1m15 0h1m29 0h2m22 0h1m60 0h1m14 0h1m28 0h1m18 0h1m29 0h1m5 0h1m14 0h1m10 0h2m296 0h1m-672 1h2m19 0h1m22 0h2m-1 0h1m4 0h1m42 0h1m2 0h1m10 0h2m7 0h1m33 0h1m6 0h2m52 0h2m27 0h1m8 0h2m7 0h1m455 0h2m-692 1h1m6 0h2m45 0h1m12 0h1m34 0h1m11 0h2m0 0h1m33 0h1m3 0h1m41 0h1m69 0h1m2 0h1m72 0h1m16 0h1m181 0h1m-572 1h1m66 0h1m4 0h2m50 0h2m7 0h1m31 0h2m5 0h1m4 0h1m1 0h2m36 0h2m25 0h1m31 0h1m20 0h2m-291 1h2m7 0h1m8 0h2m6 0h1m35 0h1m11 0h1m16 0h2m-1 0h1m0 0h1m4 0h1m67 0h2m15 0h1m8 0h1m0 0h1m22 0h2m14 0h1m19 0h1m10 0h1m10 0h1m47 0h1m19 0h1m10 0h1m6 0h1m-362 1h2m9 0h2m17 0h1m14 0h1m10 0h2m1 0h1m16 0h1m3 0h2m13 0h1m2 0h2m21 0h1m38 0h1m2 0h1m43 0h2m17 0h2m63 0h2m30 0h1m48 0h1m39 0h2m-415 1h2m35 0h1m35 0h1m14 0h1m8 0h2m117 0h2m-1 0h1m22 0h2m1 0h1m14 0h1m3 0h1m9 0h1m3 0h1m11 0h1m17 0h2m9 0h1m60 0h1m1 0h2m432 0h1m-812 1h2m8 0h2m11 0h2m5 0h1m5 0h2m7 0h1m5 0h2m12 0h2m15 0h1m82 0h2m3 0h2m60 0h1m11 0h1m10 0h1m9 0h1m17 0h1m11 0h2m6 0h1m19 0h2m15 0h1m109 0h1m48 0h2m54 0h2m129 0h1m-634 1h2m16 0h2m12 0h1m9 0h1m37 0h1m5 0h1m47 0h2m21 0h2m3 0h2m-1 0h2m22 0h1m6 0h1m39 0h1m46 0h1m20 0h1m47 0h1m49 0h1m171 0h1m-636 1h1m6 0h1m24 0h2m5 0h1m3 0h1m4 0h1m4 0h1m7 0h1m3 0h1m9 0h1m6 0h1m47 0h1m26 0h1m6 0h1m21 0h1m3 0h2m14 0h1m5 0h1m5 0h2m10 0h1m8 0h1m13 0h2m18 0h1m21 0h1m16 0h1m10 0h1m50 0h2m27 0h2m36 0h1m53 0h1m29 0h1m-521 1h1m9 0h1m102 0h1m6 0h2m5 0h1m3 0h1m16 0h2m21 0h1m17 0h1m7 0h2m20 0h1m21 0h2m10 0h1m4 0h1m7 0h1m30 0h2m11 0h2m5 0h1m19 0h1m11 0h2m21 0h1m-366 1h2m12 0h1m4 0h2m10 0h2m19 0h1m54 0h1m24 0h2m2 0h1m14 0h2m0 0h2m17 0h1m12 0h1m18 0h1m21 0h2m32 0h1m51 0h1m476 0h1m-799 1h2m17 0h1m38 0h1m6 0h2m3 0h1m12 0h1m25 0h2m0 0h1m44 0h1m6 0h1m15 0h2m4 0h1m16 0h1m2 0h1m12 0h1m7 0h1m2 0h1m44 0h1m26 0h1m7 0h1m68 0h1m105 0h1m78 0h1m114 0h1m-658 1h1m2 0h1m27 0h1m6 0h1m50 0h1m0 0h1m5 0h2m4 0h1m30 0h1m14 0h2m25 0h1m7 0h2m11 0h2m33 0h1m69 0h1m65 0h2m-391 1h1m8 0h1m6 0h1m1 0h2m13 0h1m16 0h2m21 0h1m0 0h1m2 0h1m37 0h1m17 0h2m0 0h1m6 0h1m22 0h2m10 0h1m77 0h1m9 0h2m-257 1h1m34 0h1m0 0h1m7 0h1m11 0h1m16 0h1m19 0h1m0 0h1m4 0h2m4 0h2m4 0h1m9 0h1m7 0h2m43 0h2m191 0h1m60 0h1m201 0h1m-618 1h1m32 0h1m6 0h1m14 0h1m20 0h1m10 0h1m1 0h1m29 0h1m12 0h1m10 0h1m67 0h1m21 0h2m13 0h2m-1 0h1m11 0h1m7 0h1m23 0h1m68 0h1m60 0h2m-429 1h2m-1 0h1m24 0h1m34 0h2m7 0h1m25 0h1m13 0h1m9 0h1m41 0h1m6 0h1m22 0h1m7 0h1m71 0h1m37 0h1m333 0h2m-666 1h1m9 0h1m25 0h1m13 0h1m26 0h1m13 0h1m1 0h1m1 0h1m12 0h2m50 0h1m0 0h1m4 0h1m25 0h2m1 0h1m17 0h1m28 0h1m55 0h1m37 0h1m0 0h2m73 0h2m205 0h2m-617 1h1m18 0h1m48 0h1m4 0h2m23 0h1m6 0h2m8 0h1m40 0h1m10 0h2m11 0h1m27 0h2m20 0h1m26 0h2m50 0h2m-307 1h1m2 0h2m3 0h2m1 0h1m5 0h1m34 0h1m3 0h2m4 0h1m10 0h2m3 0h2m1 0h1m13 0h1m28 0h2m22 0h2m4 0h1m6 0h1m79 0h1m24 0h1m8 0h1m12 0h1m0 0h1m9 0h2m58 0h2m332 0h2m-677 1h2m0 0h2m11 0h1m1 0h1m33 0h1m10 0h1m53 0h1m9 0h2m50 0h2m26 0h2m7 0h1m13 0h1m21 0h1m62 0h1m28 0h1m16 0h2m161 0h2m-552 1h1m6 0h1m9 0h1m4 0h2m0 0h2m81 0h1m8 0h1m8 0h1m2 0h2m47 0h1m25 0h1m23 0h1m6 0h2m5 0h1m32 0h2m-268 1h2m1 0h1m39 0h2m16 0h1m19 0h1m1 0h2m-1 0h2m17 0h1m11 0h2m59 0h2m36 0h1m38 0h2m0 0h1m37 0h1m64 0h1m-352 1h2m53 0h1m6 0h2m3 0h2m2 0h2m32 0h2m9 0h1m26 0h1m2 0h2m38 0h2m13 0h1m16 0h1m85 0h2m22 0h1m3 0h1m9 0h1m3 0h1m8 0h1m39 0h1m234 0h1m-619 1h1m33 0h2m44 0h1m2 0h1m14 0h1m28 0h1m4 0h1m56 0h1m2 0h2m-1 0h1m26 0h1m1 0h1m1 0h1m16 0h2m15 0h2m8 0h1m2 0h1m28 0h1m55 0h1m-363 1h1m6 0h1m3 0h1m2 0h2m3 0h1m54 0h1m20 0h1m3 0h2m0 0h1m45 0h2m13 0h1m7 0h1m6 0h1m28 0h1m27 0h1m8 0h2m6 0h1m35 0h1m2 0h1m393 0h1m-618 1h2m17 0h2m2 0h1m8 0h2m7 0h1m65 0h1m60 0h2m49 0h2m21 0h2m25 0h1m24 0h1m-369 1h1m13 0h1m23 0h1m5 0h1m6 0h2m-1 0h1m4 0h1m26 0h2m23 0h2m15 0h1m47 0h1m48 0h1m9 0h1m63 0h1m39 0h1m12 0h1m15 0h1m245 0h1m55 0h2m-677 1h1m5 0h1m8 0h1m16 0h2m13 0h1m6 0h1m24 0h2m13 0h1m2 0h1m20 0h1m34 0h1m1 0h1m13 0h1m30 0h1m103 0h1m328 0h1m82 0h1m-680 1h1m37 0h2m7 0h1m7 0h1m58 0h1m6 0h1m8 0h1m26 0h1m7 0h1m4 0h1m4 0h2m4 0h2m6 0h2m20 0h2m-1 0h1m8 0h1m49 0h2m40 0h2m106 0h1m-433 1h1m12 0h1m6 0h1m14 0h1m21 0h2m16 0h1m3 0h1m3 0h1m9 0h1m4 0h1m2 0h2m12 0h1m15 0h2m1 0h1m0 0h1m23 0h1m17 0h1m1 0h1m37 0h2m1 0h2m22 0h1m0 0h1m5 0h2m1 0h1m92 0h2m236 0h1m26 0h1m-634 1h1m5 0h1m19 0h1m84 0h1m38 0h1m53 0h2m23 0h1m4 0h1m0 0h1m1 0h1m5 0h1m5 0h1m3 0h1m26 0h1m35 0h2m138 0h1m422 0h2m-857 1h2m8 0h2m12 0h2m0 0h2m1 0h1m2 0h2m9 0h1m4 0h1m35 0h1m13 0h1m9 0h1m1 0h1m20 0h2m13 0h2m9 0h1m5 0h2m7 0h1m18 0h2m11 0h2m88 0h1m78 0h2m55 0h1m-466 1h1m19 0h1m1 0h1m1 0h2m31 0h1m27 0h1m22 0h1m14 0h1m14 0h2m22 0h2m0 0h2m23 0h2m42 0h2m15 0h2m0 0h1m10 0h1m140 0h1m-383 1h1m1 0h1m29 0h1m2 0h2m17 0h2m27 0h2m6 0h1m12 0h1m17 0h1m42 0h1m18 0h2m5 0h2m27 0h2m28 0h1m25 0h2m97 0h2m-389 1h2m6 0h1m8 0h1m6 0h1m4 0h2m1 0h1m1 0h1m14 0h1m9 0h2m28 0h1m17 0h1m8 0h1m2 0h1m17 0h1m30 0h1m7 0h2m11 0h2m11 0h1m11 0h2m24 0h2m10 0h1m14 0h1m16 0h1m13 0h1m5 0h2m4 0h2m11 0h2m51 0h2m68 0h1m15 0h1m317 0h2m-766 1h1m11 0h1m50 0h1m44 0h2m1 0h2m2 0h1m64 0h1m14 0h1m33 0h1m25 0h1m12 0h1m53 0h2m65 0h1m238 0h1m-642 1h1m30 0h1m4 0h1m6 0h1m25 0h1m0 0h1m11 0h2m22 0h2m-2 0h1m3 0h1m3 0h1m2 0h2m52 0h1m41 0h1m137 0h2m-326 1h2m4 0h1m78 0h1m6 0h2m4 0h2m7 0h1m29 0h2m-2 0h1m18 0h2m29 0h1m15 0h1m1 0h1m63 0h1m-289 1h2m3 0h1m14 0h1m6 0h2m23 0h1m34 0h1m6 0h1m3 0h1m24 0h1m13 0h1m0 0h2m7 0h2m14 0h1m8 0h1m16 0h2m45 0h2m54 0h1m26 0h1m8 0h2m-344 1h1m32 0h2m-1 0h1m3 0h1m83 0h2m-1 0h1m28 0h2m35 0h1m46 0h2m11 0h2m7 0h2m358 0h2m139 0h1m-754 1h1m7 0h1m3 0h2m28 0h1m14 0h1m10 0h1m18 0h1m14 0h1m21 0h2m3 0h1m2 0h1m8 0h1m8 0h2m24 0h1m26 0h1m0 0h2m56 0h2m16 0h2m56 0h2m44 0h1m220 0h1m-619 1h1m18 0h1m26 0h1m5 0h2m0 0h1m24 0h1m1 0h1m5 0h1m29 0h1m2 0h2m19 0h2m0 0h1m14 0h1m2 0h2m15 0h2m4 0h1m1 0h2m27 0h1m3 0h1m65 0h1m21 0h1m285 0h1m50 0h1m-586 1h1m5 0h2m18 0h1m11 0h1m28 0h2m12 0h1m12 0h1m14 0h1m29 0h1m2 0h1m33 0h1m9 0h2m0 0h1m21 0h1m22 0h2m45 0h2m0 0h1m279 0h1m-603 1h1m16 0h1m29 0h2m9 0h2m31 0h1m3 0h2m9 0h1m7 0h2m34 0h1m14 0h2m68 0h1m23 0h2m12 0h1m5 0h1m51 0h1m11 0h1m29 0h1m-367 1h1m52 0h1m3 0h1m2 0h2m23 0h1m12 0h1m28 0h1m12 0h1m13 0h2m4 0h2m0 0h1m25 0h1m41 0h1m46 0h2m11 0h2m30 0h1m5 0h2m18 0h2m-366 1h1m46 0h1m12 0h2m15 0h1m4 0h2m19 0h1m2 0h1m8 0h1m14 0h1m10 0h1m20 0h2m-1 0h1m20 0h1m13 0h2m23 0h1m16 0h1m54 0h2m32 0h1m49 0h1m7 0h2m78 0h1m-476 1h1m34 0h2m41 0h2m31 0h1m2 0h1m1 0h1m15 0h2m26 0h2m-1 0h1m35 0h1m25 0h1m19 0h2m20 0h1m11 0h2m13 0h2m18 0h1m50 0h1m25 0h1m22 0h2m174 0h1m-580 1h2m0 0h2m21 0h2m0 0h1m28 0h1m24 0h2m3 0h1m2 0h1m20 0h1m3 0h2m2 0h1m18 0h1m0 0h1m15 0h1m50 0h2m11 0h1m11 0h1m16 0h2m14 0h2m79 0h2m6 0h1m13 0h1m7 0h2m25 0h1m58 0h2m14 0h1m-481 1h1m12 0h1m0 0h2m19 0h2m21 0h1m92 0h1m80 0h1m8 0h2m5 0h1m56 0h2m19 0h1m179 0h2m141 0h2m-641 1h1m65 0h1m19 0h2m74 0h1m98 0h2m26 0h2m81 0h1m94 0h1m48 0h1m-519 1h2m2 0h1m35 0h1m60 0h1m7 0h2m8 0h1m4 0h2m18 0h2m4 0h1m17 0h1m2 0h1m162 0h2m10 0h1m-302 1h2m14 0h1m2 0h2m32 0h1m25 0h2m10 0h1m70 0h2m4 0h2m26 0h1m3 0h2m42 0h1m118 0h2m55 0h1m39 0h2m-509 1h1m4 0h2m29 0h1m15 0h2m28 0h2m13 0h1m7 0h1m2 0h1m15 0h1m7 0h1m2 0h1m33 0h1m2 0h1m25 0h2m6 0h1m13 0h2m96 0h1m-258 1h2m19 0h2m15 0h1m6 0h2m8 0h1m0 0h2m5 0h1m5 0h1m60 0h1m17 0h2m63 0h1m3 0h1m9 0h1m17 0h2m66 0h2m82 0h1m109 0h2m-576 1h1m40 0h2m78 0h1m6 0h1m73 0h2m4 0h1m26 0h1m15 0h2m46 0h2m1 0h1m18 0h2m102 0h1m-419 1h1m2 0h2m11 0h1m18 0h2m64 0h1m4 0h1m9 0h1m7 0h1m2 0h2m8 0h1m2 0h2m6 0h1m13 0h1m7 0h1m5 0h1m6 0h1m20 0h2m0 0h1m18 0h1m2 0h1m12 0h2m13 0h1m11 0h1m5 0h1m17 0h1m60 0h2m36 0h1m-394 1h1m35 0h2m3 0h1m4 0h2m46 0h1m14 0h2m21 0h1m18 0h1m35 0h2m9 0h1m61 0h1m21 0h1m42 0h1m23 0h1m158 0h1m83 0h1m-558 1h2m1 0h2m10 0h1m14 0h1m37 0h1m4 0h2m46 0h2m40 0h1m67 0h2m46 0h2m75 0h1m92 0h2m112 0h1m-600 1h2m59 0h1m20 0h2m10 0h1m4 0h2m0 0h1m19 0h1m12 0h1m10 0h1m17 0h2m9 0h1m216 0h1m105 0h1m228 0h1m-680 1h2m9 0h1m16 0h1m15 0h1m22 0h1m25 0h1m26 0h1m7 0h2m-1 0h1m12 0h2m12 0h2m-2 0h1m12 0h2m28 0h2m59 0h1m0 0h1m58 0h2m49 0h2m45 0h2m88 0h2m-537 1h2m45 0h2m56 0h1m2 0h1m17 0h2m48 0h1m8 0h1m7 0h2m29 0h2m24 0h1m82 0h2m21 0h1m77 0h1m-419 1h2m17 0h1m1 0h1m10 0h2m12 0h2m5 0h1m34 0h1m9 0h2m11 0h1m195 0h1m52 0h2m-349 1h1m11 0h2m42 0h2m0 0h2m3 0h1m2 0h1m30 0h1m13 0h2m7 0h2m-2 0h1m36 0h2m13 0h1m10 0h2m8 0h2m97 0h2m5 0h1m2 0h1m0 0h1m351 0h2m-713 1h1m111 0h2m3 0h2m92 0h1m14 0h1m28 0h2m6 0h2m9 0h2m-278 1h1m6 0h1m13 0h1m8 0h1m29 0h2m0 0h1m3 0h2m8 0h1m17 0h1m12 0h1m1 0h2m10 0h1m1 0h2m24 0h2m1 0h1m4 0h1m40 0h1m35 0h1m4 0h2m21 0h1m56 0h1m-322 1h1m14 0h2m31 0h1m3 0h1m10 0h2m4 0h2m30 0h2m13 0h1m13 0h1m8 0h1m29 0h2m19 0h2m95 0h2m37 0h1m23 0h2m24 0h1m-374 1h1m20 0h2m23 0h1m3 0h1m49 0h1m111 0h2m1 0h1m10 0h1m12 0h1m16 0h2m30 0h1m50 0h2m4 0h1m11 0h1m148 0h1m135 0h2m-639 1h1m44 0h1m24 0h1m26 0h1m8 0h2m-1 0h1m6 0h1m27 0h2m16 0h2m12 0h2m1 0h1m13 0h1m29 0h2m50 0h2m54 0h1m233 0h2m-505 1h1m40 0h2m21 0h1m1 0h1m1 0h1m10 0h1m2 0h1m1 0h1m2 0h2m49 0h2m47 0h1m34 0h1m-291 1h2m14 0h1m19 0h2m7 0h1m3 0h1m6 0h1m12 0h2m18 0h2m13 0h1m2 0h1m57 0h2m2 0h1m60 0h1m21 0h1m3 0h2m176 0h2m268 0h1m167 0h1m-848 1h1m14 0h1m6 0h1m19 0h1m32 0h1m12 0h2m10 0h1m30 0h2m19 0h1m24 0h1m6 0h1m4 0h1m0 0h2m65 0h1m11 0h1m39 0h2m-310 1h1m9 0h1m12 0h1m22 0h1m39 0h1m28 0h1m62 0h1m10 0h1m19 0h1m21 0h1m42 0h2m34 0h2m50 0h1m136 0h1m-525 1h1m21 0h1m-1 0h2m15 0h1m32 0h1m15 0h1m12 0h2m73 0h1m14 0h1m29 0h1m10 0h1m15 0h1m53 0h2m6 0h2m9 0h1m18 0h2m0 0h1m23 0h1m-365 1h1m1 0h1m17 0h2m87 0h2m16 0h1m6 0h2m55 0h2m24 0h2m92 0h2m22 0h1m266 0h1m164 0h1m-754 1h1m2 0h2m7 0h2m26 0h2m25 0h2m15 0h2m38 0h1m27 0h1m38 0h1m12 0h2m11 0h1m6 0h1m24 0h2m16 0h2m23 0h1m123 0h1m146 0h2m-574 1h1m21 0h2m0 0h1m75 0h2m11 0h2m11 0h1m23 0h2m13 0h1m43 0h1m23 0h1m62 0h1m16 0h1m22 0h1m-282 1h1m22 0h1m13 0h1m0 0h2m12 0h1m43 0h1m22 0h1m12 0h1m3 0h1m12 0h1m31 0h1m20 0h2m16 0h2m403 0h1m-683 1h2m6 0h2m-1 0h1m31 0h1m22 0h1m10 0h1m134 0h1m48 0h2m25 0h1m25 0h1m77 0h1m13 0h2m-408 1h2m2 0h2m20 0h1m9 0h1m0 0h1m54 0h1m18 0h2m38 0h1m34 0h1m28 0h1m20 0h2m54 0h1m3 0h1m1 0h1m86 0h2m-331 1h1m12 0h1m7 0h1m39 0h1m30 0h1m17 0h1m2 0h2m44 0h1m3 0h1m43 0h1m16 0h2m5 0h1m34 0h1m-317 1h2m22 0h1m4 0h1m2 0h1m9 0h1m12 0h1m61 0h1m2 0h1m27 0h1m13 0h1m25 0h1m0 0h1m14 0h2m61 0h2m15 0h1m86 0h1m208 0h1m-544 1h2m24 0h1m11 0h1m20 0h1m4 0h1m2 0h2m46 0h1m12 0h2m26 0h1m1 0h1m30 0h2m0 0h2m2 0h2m1 0h2m100 0h1m47 0h2m32 0h1m283 0h1m64 0h2m-752 1h1m34 0h1m5 0h1m11 0h2m17 0h1m35 0h2m2 0h1m25 0h1m2 0h1m1 0h1m43 0h1m101 0h2m58 0h1m25 0h2m46 0h1m152 0h2m-578 1h2m7 0h1m8 0h1m4 0h1m40 0h2m6 0h1m20 0h1m6 0h1m7 0h1m9 0h1m7 0h1m0 0h1m15 0h1m3 0h1m38 0h1m3 0h1m10 0h1m32 0h1m43 0h1m388 0h1m-678 1h1m14 0h1m9 0h2m21 0h1m3 0h1m16 0h1m9 0h1m26 0h1m1 0h2m30 0h1m1 0h1m18 0h2m9 0h1m2 0h1m6 0h1m11 0h2m8 0h1m11 0h2m-1 0h1m14 0h1m29 0h1m77 0h2m58 0h1m4 0h1m61 0h1m-485 1h1m3 0h1m33 0h2m7 0h1m14 0h2m59 0h1m16 0h1m1 0h1m10 0h2m8 0h2m-1 0h1m6 0h1m52 0h1m14 0h1m33 0h2m36 0h1m-310 1h1m72 0h1m24 0h1m14 0h2m8 0h1m2 0h1m1 0h2m1 0h2m1 0h1m7 0h2m5 0h1m14 0h1m7 0h1m8 0h2m0 0h2m6 0h1m7 0h1m5 0h1m45 0h1m0 0h1m8 0h1m0 0h1m13 0h1m2 0h1m71 0h1m472 0h1m-800 1h1m5 0h1m24 0h2m4 0h1m4 0h2m6 0h1m3 0h1m15 0h2m2 0h2m29 0h1m41 0h1m15 0h1m4 0h2m-1 0h1m33 0h1m14 0h1m43 0h1m13 0h1m-289 1h1m7 0h2m10 0h2m2 0h2m22 0h1m5 0h1m3 0h2m10 0h2m27 0h2m13 0h2m24 0h2m13 0h1m1 0h2m53 0h1m15 0h2m41 0h2m8 0h1m18 0h1m16 0h2m5 0h1m488 0h1m-800 1h1m13 0h1m15 0h1m3 0h1m43 0h1m1 0h1m75 0h1m53 0h2m23 0h1m9 0h1m26 0h1m67 0h1m37 0h2m-410 1h1m3 0h1m43 0h2m17 0h2m53 0h1m7 0h2m6 0h1m7 0h1m0 0h2m8 0h2m15 0h1m37 0h1m21 0h2m2 0h1m3 0h1m17 0h1m-259 1h1m18 0h1m1 0h2m23 0h1m15 0h1m8 0h2m11 0h2m3 0h1m18 0h1m2 0h1m18 0h1m14 0h1m25 0h1m55 0h2m18 0h1m12 0h2m2 0h1m2 0h2m62 0h1m484 0h1m-785 1h2m6 0h1m15 0h1m16 0h2m30 0h2m17 0h1m6 0h1m23 0h2m0 0h1m31 0h2m28 0h1m14 0h2m74 0h1m10 0h1m17 0h1m-342 1h1m13 0h1m13 0h1m22 0h1m12 0h1m15 0h1m20 0h2m21 0h1m1 0h1m9 0h1m24 0h1m2 0h1m5 0h2m1 0h1m6 0h1m32 0h1m15 0h1m18 0h1m122 0h2m8 0h2m20 0h1m264 0h1m-648 1h1m14 0h1m57 0h1m5 0h1m11 0h1m2 0h2m20 0h1m20 0h2m24 0h1m15 0h1m4 0h1m17 0h1m45 0h1m6 0h1m37 0h1m6 0h2m-312 1h1m4 0h1m40 0h1m16 0h1m48 0h2m2 0h1m1 0h2m3 0h1m4 0h1m7 0h1m4 0h2m22 0h2m6 0h1m51 0h2m4 0h2m8 0h2m20 0h1m5 0h1m-281 1h1m0 0h1m22 0h1m23 0h1m21 0h1m9 0h1m55 0h1m55 0h2m0 0h1m0 0h1m24 0h2m3 0h1m20 0h1m2 0h2m4 0h1m16 0h1m3 0h2m4 0h1m4 0h1m13 0h1m9 0h1m87 0h1m6 0h2m-407 1h1m14 0h1m42 0h2m2 0h1m22 0h2m21 0h2m7 0h2m22 0h1m38 0h2m1 0h1m8 0h1m10 0h1m1 0h1m8 0h2m11 0h1m15 0h2m34 0h1m3 0h1m291 0h1m-531 1h1m3 0h2m5 0h1m4 0h2m29 0h1m13 0h1m21 0h2m16 0h1m6 0h1m4 0h2m10 0h2m4 0h1m19 0h1m2 0h1m-174 1h1m15 0h1m43 0h1m37 0h2m1 0h1m0 0h1m8 0h1m5 0h1m1 0h2m23 0h1m64 0h2m46 0h2m-1 0h2m40 0h1m13 0h1m91 0h1m-398 1h1m18 0h2m29 0h1m7 0h1m13 0h1m39 0h1m1 0h2m2 0h1m4 0h1m5 0h1m17 0h1m18 0h1m1 0h2m1 0h1m2 0h1m10 0h1m50 0h2m58 0h1m330 0h1m-654 1h1m15 0h1m12 0h1m14 0h1m14 0h1m7 0h1m6 0h1m8 0h1m6 0h1m18 0h2m12 0h2m9 0h1m13 0h1m12 0h1m17 0h1m41 0h1m6 0h1m70 0h2m20 0h1m430 0h2m-756 1h1m19 0h2m5 0h1m12 0h2m14 0h1m8 0h2m27 0h1m13 0h2m23 0h1m19 0h2m1 0h2m-1 0h1m4 0h1m36 0h2m6 0h2m13 0h1m15 0h1m3 0h2m15 0h1m11 0h1m164 0h2m298 0h1m-738 1h1m56 0h1m11 0h2m8 0h1m12 0h1m28 0h1m18 0h1m1 0h1m13 0h1m6 0h2m3 0h1m28 0h1m1 0h2m23 0h1m20 0h1m20 0h2m20 0h1m94 0h1m3 0h2m2 0h2m-384 1h1m49 0h2m0 0h2m11 0h1m5 0h1m2 0h2m3 0h1m8 0h1m0 0h2m8 0h2m4 0h1m2 0h2m5 0h2m3 0h1m44 0h1m16 0h1m14 0h1m64 0h1m46 0h1m24 0h1m97 0h2m215 0h1m-665 1h1m4 0h1m35 0h1m5 0h1m21 0h1m63 0h2m8 0h1m2 0h1m11 0h1m29 0h2m5 0h1m40 0h1m11 0h1m14 0h2m77 0h2m-337 1h1m97 0h1m23 0h1m10 0h2m26 0h2m33 0h2m2 0h2m35 0h1m313 0h2m-558 1h1m12 0h2m14 0h2m4 0h2m3 0h1m46 0h1m39 0h1m7 0h2m46 0h1m49 0h1m5 0h1m50 0h1m72 0h1m16 0h2m14 0h1m-296 1h2m15 0h1m65 0h2m51 0h2m16 0h2m5 0h2m13 0h1m1 0h1m161 0h2m-382 1h1m49 0h1m5 0h2m7 0h2m4 0h1m18 0h2m4 0h1m9 0h1m11 0h1m89 0h2m51 0h2m217 0h1m-538 1h2m67 0h1m7 0h1m17 0h1m0 0h2m34 0h1m4 0h1m33 0h1m21 0h1m59 0h1m-253 1h2m5 0h2m9 0h1m32 0h2m16 0h1m5 0h2m9 0h1m30 0h1m1 0h1m64 0h1m14 0h2m3 0h1m14 0h1m44 0h1m136 0h1m-381 1h2m60 0h2m15 0h1m13 0h2m32 0h1m1 0h1m55 0h1m18 0h2m-221 1h1m34 0h2m86 0h2m25 0h1m25 0h2m4 0h2m66 0h1m62 0h2m-317 1h2m6 0h1m9 0h2m74 0h2m-1 0h1m1 0h1m18 0h1m44 0h2m6 0h2m-177 1h1m3 0h1m17 0h1m58 0h1m75 0h1m10 0h1m1 0h1m13 0h1m40 0h1m59 0h1m-275 1h2m22 0h1m3 0h1m43 0h1m27 0h2m14 0h1m25 0h2m32 0h2m40 0h1m29 0h1m47 0h1m9 0h1m193 0h2m-508 1h2m22 0h2m64 0h1m84 0h2m0 0h2m23 0h1m29 0h1m33 0h1m6 0h1m244 0h2m-497 1h2m14 0h1m20 0h2m17 0h1m29 0h2m24 0h1m84 0h1m41 0h1m-255 1h1m43 0h1m10 0h1m5 0h2m2 0h1m7 0h1m5 0h1m43 0h1m2 0h2m32 0h1m10 0h2m3 0h1m5 0h2m84 0h2m78 0h1m-209 1h1m14 0h2m34 0h1m6 0h2m47 0h1m23 0h2m0 0h1m83 0h1m27 0h2m102 0h2m-440 1h2m22 0h1m0 0h2m92 0h1m27 0h1m7 0h2m56 0h1m-275 1h1m31 0h1m75 0h1m76 0h1m0 0h1m9 0h1m9 0h1m51 0h2m-235 1h1m5 0h1m16 0h1m11 0h1m76 0h1m17 0h1m40 0h1m-198 1h1m16 0h1m7 0h1m84 0h2m78 0h1m21 0h1m13 0h1m-176 1h1m19 0h1m123 0h1m-199 1h1m45 0h2m19 0h2m1 0h2m7 0h1m9 0h1m4 0h2m11 0h2m71 0h1m60 0h1m216 0h1m-440 1h2m-1 0h1m36 0h1m3 0h2m89 0h1m9 0h1m13 0h2m48 0h1m7 0h2m-242 1h2m35 0h1m6 0h1m33 0h1m-1 0h1m57 0h1m8 0h1m57 0h1m54 0h1m18 0h2m91 0h1m-276 1h1m25 0h2m72 0h2m74 0h2m16 0h1m29 0h2m-208 1h1m45 0h1m50 0h2m-138 1h1m15 0h2m6 0h1m55 0h1m-139 1h2m6 0h2m32 0h1m28 0h2m42 0h2m93 0h1m21 0h1m28 0h1m-78 1h1m-161 1h1m193 0h1m-222 1h1m12 0h1m44 0h1m37 0h2m0 0h1m46 0h1m7 0h2m16 0h1m9 0h1m33 0h2m39 0h2m6 0h2m20 0h1m-222 1h1m6 0h2m2 0h1m9 0h1m115 1h1m-104 1h1m20 0h1m0 0h2m21 0h1m142 0h2m12 0h2m-313 1h1m7 0h1m26 0h2m131 0h1m15 0h1m27 0h2m10 0h1m12 0h1m-195 1h2m119 0h2m32 1h1m-199 1h2m27 0h1m12 0h2m2 0h2m33 0h1m4 0h1m53 0h2m108 0h1m224 0h1m-298 1h1m64 0h1m-237 1h1m178 0h1m-91 1h1m89 0h1m44 0h2m-233 1h1m24 0h1m191 0h1m11 0h1m-191 1h1m32 0h2m21 0h2m-55 1h2m83 0h1m81 0h1m65 0h1m-151 1h1m34 0h2m106 0h1m-156 1h2m68 0h2m42 0h1m-222 1h2m52 1h2m10 0h1m74 0h1m-124 1h1m20 0h1m143 0h1m-180 1h2m42 0h1m239 0h1m31 0h2m-165 1h1m162 0h1m-186 1h1m79 0h1m21 0h1m106 0h1m-330 1h1m56 0h2m132 0h2m-89 1h1m39 0h1m36 0h1m-155 1h2m181 1h1m-132 1h1m-52 2h2m16 0h1m28 0h2m49 0h2m88 0h1m-16 1h2m141 0h1m-243 1h2m16 0h1m16 1h2m7 0h1m34 0h2m-171 1h1m252 0h1m-237 1h1m0 0h2m116 0h2m66 0h1m-47 1h2m206 1h1m-257 5h1m-116 2h1m71 1h2m376 0h1m-461 1h1m7 0h1m102 1h2m38 2h1m-149 1h1m480 1h1m-190 3h1m-260 2h1m251 0h1m-157 1h2m-23 5h1m-130 2h1m134 1h1m25 1h2m1 0h1m68 0h1m-192 1h2m5 0h1m104 3h2m-94 8h1m-65 2h1m244 0h2m-144 3h1m-52 12h1m42 0h1m2 0h1" stroke="#4a5cf2" stroke-opacity="0.45" stroke-width="1" fill="none"/><path d="m597 107.5h1m-90 4h1m-178 5h2m274 9h2m-112 2h2m120 2h2m-231 3h2m321 1h3m-305 1h2m84 1h1m-186 3h2m-14 1h2m390 1h2m-333 10h2m-7 13h2m-50 6h2m-6 2h1m262 0h2m-256 11h1m15 9h1m-37 2h2m222 2h1m87 0h2m-185 6h2m108 7h2m-142 1h2m23 0h2m-127 1h2m221 2h2m-161 3h2m200 3h2m-99 6h2m-127 2h2m118 0h2m-86 1h2m184 7h1m53 0h2m-166 2h1" stroke="#4a5cf2" stroke-opacity="0.68" stroke-width="1" fill="none"/><path d="m646 115.5h2m-289 8h1m150 4h2m-202 7h1m77 41h1m131 9h1m36 15h1m-280 11h2m334 5h2m-272 10h1m81 6h1m-125 4h2" stroke="#4a5cf2" stroke-opacity="0.9" stroke-width="1" fill="none"/><path d="m299 109h1m7 0h2m6 0h1m52 0h1m154 0h1m14 0h2m9 0h1m-7 1h2m-110 1h2m4 0h1m5 0h2m19 0h1m15 0h1m179 0h1m-362 1h1m76 0h1m32 0h1m35 0h1m146 0h1m39 0h1m-217 1h2m22 0h1m173 0h1m-340 1h1m12 0h2m152 0h1m100 0h2m-200 1h1m27 0h2m22 0h2m156 0h2m97 0h2m-320 1h2m30 0h2m136 0h1m26 0h1m136 0h2m-338 1h1m64 0h2m122 1h1m-112 1h1m-131 1h2m222 0h2m-77 1h2m69 0h2m84 0h2m81 0h2m-332 1h2m215 0h1m64 0h1m66 0h1m-388 1h1m81 0h2m51 0h1m11 0h1m38 0h1m22 0h2m158 0h1m-336 1h1m155 0h1m105 0h2m-288 1h1m71 0h1m25 0h1m14 0h1m3 0h2m3 0h1m137 0h1m28 0h2m21 0h1m-342 1h1m96 0h1m67 0h1m67 0h2m-243 1h1m7 1h2m37 0h2m16 0h1m118 0h2m63 0h1m17 0h1m31 0h2m23 0h1m-314 1h2m79 0h1m42 0h1m180 0h1m237 0h2m-550 1h1m200 0h1m13 0h1m2 0h2m22 0h1m79 0h1m-322 1h1m111 0h2m19 0h2m3 0h1m196 0h1m9 1h1m-167 1h2m-1 0h1m11 0h1m181 0h1m-380 2h1m67 0h1m99 0h1m41 0h1m46 0h1m-118 1h2m179 0h1m165 0h1m-461 1h1m16 0h2m102 0h2m205 0h2m-231 1h1m96 0h1m32 0h1m6 0h1m1 0h1m50 0h1m17 0h1m-337 1h1m20 0h1m67 0h9m64 0h1m66 0h2m11 0h2m29 0h2m14 0h3m27 0h2m51 0h2m-359 1h1m241 0h1m98 0h1m83 0h1m-412 1h2m44 0h1m13 0h1m35 0h2m91 0h1m0 0h1m21 0h1m41 0h2m203 0h2m-493 1h3m120 0h1m93 0h1m3 0h4m15 0h1m34 0h2m37 0h11m34 0h2m112 0h2m-301 1h1m67 0h1m10 0h1m-182 1h1m73 0h1m31 0h1m46 0h2m62 0h1m54 0h2m11 0h2m26 0h1m-331 1h1m119 0h2m84 0h3m4 0h2m82 0h9m6 0h5m8 0h1m-373 1h1m108 0h2m0 0h1m79 0h2m33 0h1m105 0h1m-337 1h1m18 0h1m2 0h1m69 0h1m107 0h2m36 0h1m11 0h1m-253 1h2m140 0h1m87 0h1m87 0h7m41 0h2m-274 1h1m71 0h1m220 0h1m173 0h1m-418 1h1m14 0h1m31 0h2m72 0h1m-259 1h1m87 0h2m134 0h1m9 0h1m2 0h1m134 0h11m0 0h1m1 0h1m-384 1h2m87 0h1m23 0h2m740 0h2m-841 1h1m22 0h1m25 0h1m30 0h2m85 0h2m71 0h1m24 0h1m41 0h2m-320 1h2m41 0h1m60 0h1m39 0h1m22 0h1m13 0h1m83 0h1m8 0h1m-288 1h1m43 0h1m84 0h1m-122 1h1m26 0h2m21 0h2m21 0h1m161 0h1m31 0h1m3 0h2m-236 1h1m71 0h2m3 0h1m66 1h1m43 0h1m237 0h2m-395 1h1m20 0h1m11 1h1m108 0h1m25 0h1m-167 1h2m19 0h2m21 0h2m320 0h1m-448 1h1m144 0h1m327 0h1m-327 1h1m25 0h2m43 0h1m110 0h2m-191 1h1m16 0h1m76 0h1m26 1h1m136 1h1m-251 1h1m-75 1h1m35 0h2m645 0h1m-678 1h1m66 0h1m40 0h2m45 0h1m43 0h1m6 0h1m-198 1h1m275 0h1m-337 1h2m32 0h2m103 0h1m91 0h1m72 0h1m178 0h1m-331 1h2m28 0h2m89 0h1m-19 1h1m-208 1h2m7 0h1m7 0h1m462 1h2m-456 1h1m87 0h2m532 0h1m-366 1h1m-325 1h2m121 0h1m41 0h1m64 0h2m-113 1h1m-150 1h1m169 0h1m27 0h2m50 0h1m-24 1h2m6 0h1m5 0h1m11 0h1m-210 1h2m25 0h1m165 0h1m-202 1h2m77 0h1m50 0h1m17 0h1m12 0h1m1 0h2m-144 1h1m16 0h2m124 0h2m-172 2h1m69 0h1m128 0h1m113 0h1m-99 1h1m175 0h1m-395 1h2m46 0h2m22 0h1m34 0h2m17 0h1m-98 1h1m446 0h1m-359 1h2m9 0h1m300 0h2m-437 1h2m137 0h1m106 0h1m122 0h1m-387 1h1m546 0h1m192 0h1m-750 1h1m28 0h1m77 0h2m21 0h2m154 0h1m-255 1h1m230 0h2m3 0h1m118 0h2m-274 1h1m-118 1h2m61 0h1m70 0h1m42 0h1m158 0h1m33 0h1m-318 1h1m292 0h1m-187 1h1m-97 1h2m15 0h1m97 0h1m84 0h1m-199 1h2m148 0h2m50 0h1m-242 1h1m55 0h1m383 0h1m41 0h1m-360 1h1m-152 1h1m163 0h1m9 0h2m55 0h1m-232 1h2m63 0h2m286 0h1m-241 1h1m86 0h2m102 0h1m-223 1h1m52 0h2m95 0h2m94 0h2m-276 1h1m183 0h1m-196 1h1m43 0h1m17 0h2m99 0h1m15 0h1m18 0h1m51 0h1m-278 1h2m101 0h1m22 0h1m33 0h2m-168 1h1m108 0h1m8 1h2m125 0h1m53 0h1m-121 1h1m146 0h1m-111 1h1m236 0h1m-432 1h1m34 0h2m48 0h2m128 0h2m315 0h1m-537 1h1m99 0h2m68 0h1m41 0h2m46 0h1m140 0h1m240 0h1m-648 1h1m147 0h1m75 0h1m28 0h2m74 0h2m-287 1h2m124 0h1m305 0h2m-492 1h1m76 0h1m144 1h1m197 0h1m-419 1h2m167 0h1m136 0h1m-224 1h1m128 0h2m-99 1h2m89 0h2m-140 1h1m227 0h1m441 0h1m-660 1h2m150 0h1m-201 1h1m8 0h1m713 0h1m-645 1h1m225 0h1m18 0h2m-174 1h2m36 0h2m11 0h1m16 0h1m161 0h1m-411 1h2m23 0h2m28 0h2m118 0h2m157 0h1m-300 1h1m119 0h2m152 0h1m35 0h1m7 0h1m18 0h1m-60 1h1m282 0h1m-465 1h1m131 0h1m123 0h1m-399 1h1m65 0h2m13 0h1m-76 1h1m17 0h2m61 0h1m7 0h1m95 0h1m-115 1h1m35 0h1m12 0h2m84 0h2m35 1h1m-157 1h1m58 0h2m-89 1h2m100 0h2m107 0h1m-269 1h1m162 0h1m2 0h1m36 0h2m160 0h1m-197 1h1m27 0h1m-149 1h2m10 0h2m76 0h1m144 0h1m-105 1h2m50 0h1m29 0h1m-141 1h1m134 1h1m-263 1h1m251 0h1m55 0h1m-294 1h2m24 0h1m96 0h1m12 0h1m41 0h1m56 0h1m302 0h1m-521 1h1m151 0h1m45 0h1m33 0h1m11 0h1m-284 1h1m5 0h1m27 0h1m75 1h1m3 0h1m65 0h2m18 0h2m49 0h2m-200 1h1m2 0h1m35 0h1m24 0h1m43 0h2m43 0h1m31 0h1m29 0h1m-190 1h2m14 0h1m139 0h1m20 0h2m24 0h1m-126 1h2m57 0h1m14 0h1m-127 1h1m30 0h1m31 0h1m181 0h2m-279 1h1m16 0h1m244 0h1m75 0h2m95 0h1m-429 1h1m4 0h1m102 0h1m26 0h1m36 0h1m-215 1h1m168 0h1m53 0h2m57 0h1m91 0h1m-409 1h2m110 0h1m120 0h2m26 0h1m19 0h2m-210 1h1m58 0h2m13 0h1m72 0h1m7 0h1m469 0h2m-683 1h1m103 0h1m62 0h2m0 0h1m271 0h1m-427 1h1m9 0h1m189 0h1m99 2h1m-252 1h2m2 0h1m143 0h1m26 0h1m5 0h1m54 0h2m-223 1h1m63 0h1m56 0h1m29 0h1m55 0h1m-152 1h1m17 0h1m22 0h1m5 0h1m44 0h2m-214 1h1m63 0h1m242 0h2m-251 1h1m89 0h1m0 0h1m97 0h1m-282 1h2m80 0h1m-10 1h1m121 0h1m30 0h1m-172 1h1m14 0h1m50 0h2m26 0h1m91 0h1m29 0h1m22 0h1m18 0h1m-259 1h1m19 0h1m38 0h1m42 0h2m19 0h1m97 0h2m-162 1h1m-120 2h1m59 0h2m110 0h1m109 0h1m114 0h1m-326 1h1m142 0h1m19 0h2m81 0h1m-131 1h1m-81 1h1m38 0h1m-139 1h1m112 0h1m26 0h2m48 1h2m27 0h2m110 0h1m-257 1h1m36 0h1m30 0h1m42 0h1m20 0h2m32 1h1m-217 1h1m8 0h2m64 0h2m118 0h1m-213 1h1m24 0h2m187 2h1m4 3h1m21 1h1m24 0h1m82 0h1m-228 1h1m88 0h2m-105 1h1m231 0h2m-154 1h1m34 0h1m120 0h1m112 0h1m-399 1h1m254 1h1m-128 1h1m-145 2h1m96 0h1m65 1h2m-132 1h1m211 2h1m-264 2h1m148 3h2m-165 6h1m-2 1h1m327 1h2m-224 2h1m-96 1h1m128 0h1m-166 3h1m330 1h1m-324 3h2m18 0h1m-10 1h2m169 2h2m-96 1h1m218 0h2m63 3h1m25 3h1m-311 4h2m-1 0h1m55 3h2m-9 8h1m38 3h2m15 1h1m-145 11h1" stroke="#4a5cf2" stroke-opacity="0.12" stroke-width="2" fill="none"/><path d="m281 108h2m108 0h2m42 0h1m30 0h2m36 0h1m109 0h2m15 0h1m-260 1h1m11 0h1m15 0h2m17 0h1m75 0h1m127 0h1m163 0h1m38 0h1m-515 1h1m18 0h1m12 0h1m44 0h1m39 0h1m34 0h2m34 0h2m6 0h2m29 0h1m-260 1h1m105 0h2m3 0h2m39 0h2m24 0h1m56 0h2m126 0h1m-339 1h1m52 0h1m25 0h2m88 0h1m16 0h1m12 0h2m46 0h2m2 0h1m-201 1h2m1 0h1m13 0h2m6 0h1m4 0h1m9 0h1m3 0h1m7 0h2m111 0h2m0 0h1m43 0h1m-261 1h2m88 0h1m68 0h2m12 0h1m13 0h2m36 0h1m36 0h2m9 0h1m-213 1h1m31 0h1m33 0h2m1 1h1m23 0h1m14 0h1m5 0h1m7 0h1m4 0h2m32 0h2m20 0h1m89 0h1m-344 1h1m29 0h1m25 0h2m18 0h2m6 0h1m51 0h1m166 0h2m41 0h1m-337 1h2m112 0h2m57 0h1m30 0h1m6 0h1m42 0h1m29 0h1m-224 1h1m64 0h1m22 0h1m26 0h1m56 0h1m1 0h1m16 0h1m7 0h2m0 0h1m4 0h1m100 0h2m110 0h2m-511 1h1m56 0h1m15 0h1m29 0h1m13 0h1m5 0h1m61 0h1m51 0h1m41 0h2m51 0h1m26 0h1m-339 1h2m-1 0h1m57 0h1m62 0h2m9 0h2m16 0h1m48 0h1m18 0h1m22 0h1m30 0h2m14 0h2m67 0h1m112 0h1m-414 1h2m64 0h1m32 0h1m25 0h1m27 0h1m7 0h2m69 0h1m-1 0h1m67 0h1m-377 1h1m49 0h1m0 0h1m9 0h1m82 0h2m2 0h1m40 0h1m68 0h2m1 0h1m26 0h1m36 0h2m17 0h1m7 0h2m-324 1h1m16 0h1m10 0h1m34 0h1m15 0h2m3 0h1m69 0h1m28 0h1m29 0h1m30 0h1m10 0h1m100 0h1m93 0h1m-460 1h2m27 0h1m103 0h1m24 0h1m1 0h1m74 0h1m31 0h1m52 0h1m-327 1h2m63 0h1m10 0h1m64 0h2m119 0h1m4 0h1m85 0h1m12 0h1m15 0h1m154 0h1m-532 1h2m12 0h1m8 0h1m21 0h2m19 0h1m2 0h2m38 0h2m6 0h2m17 0h1m50 0h1m11 0h2m52 0h1m35 0h1m41 0h1m7 0h1m-343 1h2m1 0h1m57 0h1m1 0h1m33 0h2m13 0h1m16 0h1m6 0h1m7 0h2m0 0h1m25 0h2m29 0h1m13 0h1m56 0h2m1 0h1m38 0h1m7 0h2m22 0h1m34 0h1m-374 1h1m13 0h2m64 0h1m23 0h1m22 0h2m48 0h2m22 0h1m0 0h1m1 0h2m16 0h2m21 0h1m95 0h1m162 0h1m-501 1h2m-1 0h1m31 0h1m11 0h2m8 0h1m209 0h1m-1 0h1m33 0h2m10 0h1m17 0h1m4 0h2m16 0h1m1 0h1m13 0h1m-378 1h1m13 0h1m2 0h2m20 0h1m9 0h1m19 0h2m0 0h1m27 0h1m0 0h2m26 0h1m9 0h1m3 0h1m9 0h1m16 0h1m15 0h1m1 0h2m54 0h2m59 0h1m14 0h2m-303 1h2m0 0h1m20 0h1m42 0h1m13 0h1m20 0h1m17 0h1m75 0h2m85 0h1m-316 1h2m39 0h2m3 0h1m34 0h1m10 0h1m19 0h2m28 0h1m25 0h1m19 0h1m50 0h1m63 0h1m23 0h2m90 0h2m153 0h1m-582 1h1m6 0h1m40 0h1m46 0h1m15 0h2m-1 0h1m20 0h2m56 0h1m37 0h1m16 0h1m43 0h1m28 0h2m87 0h3m-372 1h1m99 0h2m4 0h1m22 0h1m2 0h1m11 0h1m1 0h1m72 0h2m9 0h1m8 0h1m10 0h2m3 0h2m53 0h1m46 0h2m91 0h1m-485 1h2m0 0h1m5 0h2m96 0h2m3 0h1m12 0h1m5 0h1m13 0h1m33 0h1m40 0h2m50 0h1m72 0h1m36 0h1m62 0h2m-448 1h1m40 0h1m8 0h1m65 0h1m17 0h1m12 0h1m43 0h1m3 0h1m4 0h1m16 0h1m5 0h2m38 0h2m60 0h2m1 0h1m8 0h1m21 0h1m8 0h2m0 0h1m29 0h1m-395 1h1m3 0h2m19 0h2m0 0h2m10 0h2m2 0h1m9 0h1m33 0h1m10 0h2m171 0h1m22 0h2m-1 0h1m22 0h1m36 0h1m-360 1h1m8 0h6m3 0h1m27 0h2m27 0h2m2 0h1m11 0h1m1 0h1m42 0h1m6 0h5m9 0h4m11 0h1m5 0h1m19 0h1m10 0h2m32 0h4m0 0h1m34 0h2m22 0h1m13 0h1m15 0h1m-328 1h2m28 0h2m1 0h1m2 0h1m31 0h1m5 0h1m1 0h1m34 0h1m54 0h2m6 0h1m7 0h2m0 0h1m86 0h2m36 0h1m179 0h1m142 0h1m-650 1h1m3 0h1m15 0h1m37 0h1m25 0h2m47 0h2m8 0h2m22 0h1m1 0h2m1 0h1m13 0h2m63 0h2m2 0h1m5 0h1m29 0h2m7 0h1m50 0h2m9 0h1m23 0h2m75 0h1m8 0h1m38 0h2m-515 1h1m40 0h1m26 0h1m7 0h1m6 0h2m15 0h6m1 0h2m28 0h1m10 0h1m0 0h7m-4 0h1m1 0h1m2 0h1m2 0h1m5 0h1m0 0h9m3 0h2m22 0h1m17 0h1m37 0h1m27 0h1m16 0h1m67 0h1m22 0h1m-363 1h2m12 0h1m127 0h2m22 0h1m7 0h2m11 0h1m7 0h2m26 0h1m14 0h2m50 0h1m8 0h2m8 0h1m241 0h1m-570 1h1m20 0h1m44 0h1m15 0h2m4 0h1m30 0h2m54 0h1m2 0h1m18 0h1m7 0h1m58 0h2m21 0h1m14 0h1m5 0h1m2 0h1m3 0h1m64 0h1m9 0h1m291 0h1m-699 1h1m1 0h1m11 0h2m6 0h1m18 0h1m115 0h1m5 0h1m30 0h11m3 0h1m6 0h1m3 0h8m12 0h1m4 0h1m16 0h2m15 0h1m22 0h8m23 0h8m12 0h1m21 0h5m-340 1h2m52 0h2m52 0h2m12 0h1m24 0h2m6 0h1m49 0h2m111 0h2m216 0h1m-511 1h2m8 0h2m18 0h1m11 0h2m32 0h1m39 0h1m18 0h1m31 0h2m24 0h1m56 0h2m-1 0h1m9 0h1m40 0h1m2 0h2m16 0h1m-371 1h1m30 0h1m20 0h1m6 0h2m5 0h1m24 0h10m15 0h5m-4 0h2m20 0h1m4 0h2m29 0h1m33 0h2m28 0h1m30 0h1m16 0h1m41 0h2m18 0h7m16 0h2m0 0h2m6 0h1m1 0h1m-388 1h1m28 0h2m17 0h1m5 0h1m41 0h1m9 0h2m24 0h2m-1 0h1m45 0h1m9 0h1m5 0h1m6 0h2m1 0h1m14 0h1m163 0h1m58 0h3m-457 1h1m11 0h1m9 0h1m43 0h2m11 0h1m23 0h2m44 0h2m12 0h1m19 0h1m38 0h1m29 0h2m17 0h1m4 0h1m6 0h1m57 0h1m11 0h2m14 0h1m-374 1h4m16 0h3m-2 0h2m20 0h11m3 0h7m0 0h1m7 0h1m41 0h2m3 0h1m30 0h1m1 0h5m2 0h1m8 0h7m1 0h1m10 0h7m7 0h1m35 0h6m29 0h1m24 0h11m2 0h1m22 0h1m14 0h1m11 0h2m107 0h1m-469 1h2m92 0h1m47 0h2m26 0h1m36 0h2m3 0h1m2 0h2m2 0h1m33 0h2m38 0h1m2 0h2m18 0h1m39 0h2m35 0h2m-349 1h1m18 0h1m42 0h2m88 0h1m11 0h1m25 0h1m146 0h1m14 0h1m105 0h2m153 0h1m-643 1h1m32 0h2m26 0h2m3 0h1m32 0h2m21 0h2m9 0h1m5 0h2m30 0h1m43 0h1m6 0h2m16 0h1m29 0h1m36 0h4m52 0h1m20 0h2m-364 1h1m9 0h1m108 0h2m25 0h2m2 0h1m39 0h1m21 0h1m3 0h1m111 0h1m14 0h1m363 0h1m-748 1h1m8 0h1m11 0h2m6 0h1m37 0h1m9 0h1m11 0h1m24 0h1m1 0h1m24 0h1m84 0h1m41 0h2m5 0h1m-274 1h1m65 0h1m119 0h1m16 0h1m8 0h2m16 0h1m1 0h2m15 0h2m20 0h1m21 0h1m-290 1h2m68 0h2m1 0h1m8 0h1m6 0h1m55 0h1m3 0h2m13 0h1m29 0h1m148 0h1m-286 1h2m16 0h2m9 0h1m33 0h1m91 0h1m38 0h1m5 0h1m3 0h1m-239 1h2m127 0h1m31 0h1m213 0h1m-391 1h1m56 0h1m45 0h2m38 0h1m44 0h2m24 0h1m6 0h1m23 0h1m24 0h1m1 0h1m71 0h1m-349 1h1m10 0h1m3 0h1m7 0h1m92 0h1m9 0h2m67 0h1m9 0h2m61 0h1m-271 1h1m27 0h1m31 0h2m2 0h1m4 0h2m53 0h1m42 0h1m31 0h1m3 0h2m20 0h1m26 0h2m3 0h1m10 0h2m100 0h1m166 0h1m118 0h1m-617 1h1m26 0h1m3 0h2m66 0h1m20 0h2m9 0h2m6 0h1m41 0h1m23 0h1m25 0h2m34 0h1m26 0h2m-330 1h1m258 0h2m116 0h2m358 0h1m-699 1h1m83 0h1m74 0h1m0 0h1m6 0h1m73 0h1m-220 1h1m23 0h1m41 0h1m84 0h1m8 0h1m-190 1h1m36 0h2m45 0h1m2 0h1m66 0h1m28 0h2m13 0h2m9 0h1m-216 1h1m9 0h2m135 0h1m-141 1h1m52 0h2m7 0h1m8 0h1m7 0h2m1 0h2m4 0h2m70 0h1m30 0h1m60 0h1m104 0h1m-355 1h2m32 0h1m57 0h1m18 0h1m3 0h1m11 0h2m-1 0h2m12 0h1m7 0h1m97 0h1m199 0h1m226 0h2m-635 1h2m55 0h1m19 0h2m14 0h1m1 0h1m27 0h1m17 0h2m115 0h1m-289 1h1m12 0h1m46 0h1m15 0h1m-1 0h1m81 0h1m32 0h1m207 0h1m-444 1h2m14 0h2m11 0h2m32 0h1m28 0h1m15 0h2m25 0h1m35 0h1m55 0h1m15 0h1m-192 1h1m4 0h1m51 0h1m113 0h1m51 0h1m44 0h2m188 0h1m-465 1h2m33 0h1m45 0h1m10 0h1m3 0h1m29 0h2m112 0h2m64 0h1m190 0h1m-507 1h1m1 0h1m72 0h1m110 0h1m5 0h1m64 0h2m58 0h1m135 0h1m-477 1h1m102 0h2m0 0h1m8 0h1m17 0h2m49 0h1m6 0h1m10 0h1m8 0h1m9 0h2m10 0h2m50 0h1m257 0h1m-575 1h2m42 0h1m85 0h2m6 0h1m57 0h1m57 0h2m5 0h1m48 0h2m31 0h1m24 0h1m15 0h2m-372 1h1m23 0h2m7 0h1m8 0h2m45 0h1m53 0h1m76 0h2m10 0h1m36 0h2m37 0h1m-311 1h1m3 0h2m34 0h2m30 0h1m29 0h1m2 0h1m66 0h1m14 0h2m22 0h2m78 0h2m37 0h2m19 0h2m262 0h1m-607 1h1m19 0h1m24 0h1m8 0h1m32 0h1m159 0h2m36 0h2m58 0h2m-275 1h2m3 0h2m14 0h2m48 0h2m59 0h1m30 0h2m66 0h1m50 0h1m-273 1h1m41 0h1m20 0h1m22 0h1m2 0h1m18 0h1m350 0h1m99 0h1m-623 1h1m18 0h2m36 0h2m27 0h2m10 0h2m0 0h2m7 0h1m9 0h1m28 0h1m28 0h1m10 0h2m88 0h2m1 0h2m158 0h1m-438 1h2m8 0h1m2 0h1m89 0h1m19 0h2m11 0h1m25 0h1m32 0h1m16 0h2m27 0h2m5 0h1m0 0h1m40 0h1m329 0h1m-659 1h1m34 0h2m18 0h2m76 0h2m6 0h2m45 0h2m24 0h1m46 0h1m24 0h1m53 0h1m-248 1h1m51 0h1m2 0h1m16 0h1m5 0h1m10 0h1m40 0h2m60 0h1m22 0h1m174 0h1m-475 1h2m1 0h2m9 0h1m40 0h2m2 0h2m10 0h2m49 0h2m67 0h2m-174 1h1m61 0h1m29 0h1m9 0h1m9 0h1m51 0h2m27 0h2m37 0h1m123 0h1m-376 1h1m16 0h1m15 0h2m9 0h1m15 0h1m4 0h1m31 0h1m78 0h2m38 0h1m40 0h2m-234 1h1m51 0h2m42 0h1m50 0h2m44 0h2m7 0h1m17 0h1m6 0h1m12 0h1m-188 1h1m8 0h1m14 0h2m32 0h1m77 0h2m135 0h1m22 0h1m20 0h1m75 0h1m247 0h1m-688 1h1m32 0h1m28 0h1m63 0h1m33 0h1m16 0h2m11 0h2m3 0h1m19 0h1m73 0h2m6 0h1m61 0h1m-408 1h1m2 0h2m29 0h2m49 0h1m2 0h2m2 0h2m66 0h1m15 0h1m1 0h1m10 0h1m7 0h2m4 0h2m-1 0h2m13 0h1m348 0h1m-564 1h1m98 0h2m5 0h2m40 0h1m33 0h1m16 0h1m34 0h1m15 0h1m389 0h1m-608 1h2m25 0h2m5 0h2m162 0h1m43 0h2m5 0h1m53 0h1m64 0h1m-350 1h2m9 0h1m64 0h2m32 0h1m2 0h1m46 0h1m19 0h1m2 0h2m436 0h1m-678 1h1m13 0h2m133 0h2m101 0h1m73 0h1m238 0h1m-550 1h2m18 0h2m49 0h2m63 0h2m0 0h1m13 0h1m19 0h1m22 0h1m45 0h1m12 0h2m9 0h1m44 0h1m27 0h1m28 0h1m-315 1h2m54 0h2m27 0h1m24 0h2m46 0h1m1 0h1m48 0h1m63 0h1m218 0h1m-502 1h2m43 0h1m8 0h2m47 0h1m10 0h2m122 0h2m252 0h1m-545 1h1m2 0h1m15 0h1m3 0h2m50 0h2m4 0h1m8 0h2m2 0h1m0 0h1m157 0h1m-188 1h1m82 0h1m25 0h1m55 0h1m5 0h1m49 0h2m101 0h1m-351 1h1m41 0h1m20 0h1m58 0h1m76 0h1m12 0h2m17 0h2m16 0h1m-279 1h1m40 0h1m8 0h2m50 0h1m85 0h1m69 0h1m251 0h2m-489 1h2m74 0h1m50 0h2m18 0h2m14 0h1m56 0h1m139 0h2m48 0h1m-399 1h1m39 0h1m77 0h1m37 0h1m29 0h1m5 0h2m47 0h2m74 0h2m256 0h1m-606 1h1m39 0h2m23 0h1m128 0h1m0 0h2m6 0h2m43 0h1m2 0h1m50 0h1m293 0h1m-592 1h1m17 0h2m16 0h1m36 0h2m117 0h1m108 0h2m97 0h1m-427 1h1m102 0h2m0 0h2m81 0h2m19 0h2m3 0h1m123 0h2m15 0h2m63 0h1m-407 1h1m8 0h2m21 0h2m11 0h1m43 0h1m35 0h2m59 0h1m1 0h1m467 0h1m-668 1h2m55 0h1m10 0h1m40 0h1m15 0h2m13 0h2m50 0h1m183 0h2m-345 1h1m5 0h2m33 0h1m21 0h1m21 0h2m5 0h1m40 0h1m153 0h1m0 0h2m6 0h2m-306 1h2m4 0h2m39 0h2m9 0h1m162 0h2m12 0h1m74 0h1m197 0h1m115 0h2m-627 1h1m40 0h1m0 0h1m35 0h1m64 0h2m48 0h1m126 0h2m83 0h1m-435 1h1m54 0h1m33 0h1m216 0h2m254 0h2m-523 1h1m42 0h1m82 0h1m54 0h1m10 0h1m43 0h1m64 0h1m-340 1h1m16 0h1m4 0h1m44 0h2m41 0h1m7 0h1m3 0h1m31 0h1m21 0h1m44 0h2m35 0h1m2 0h2m18 0h2m17 0h1m9 0h1m65 0h1m-345 1h2m33 0h1m11 0h2m43 0h1m96 0h1m6 0h1m35 0h1m81 0h1m349 0h1m-698 1h1m63 0h1m12 0h1m103 0h1m23 0h1m50 0h2m13 0h1m39 0h1m131 0h1m-439 1h1m79 0h1m45 0h1m36 0h1m6 0h2m11 0h1m123 0h2m266 0h1m-420 1h1m23 0h2m16 0h2m21 0h2m38 0h1m16 0h1m85 0h1m1 0h1m18 0h1m221 0h1m-605 1h2m63 0h2m3 0h1m56 0h2m98 0h1m0 0h1m14 0h1m77 0h1m-330 1h1m56 0h1m4 0h2m4 0h1m23 0h1m28 0h1m35 0h1m64 0h1m113 0h2m19 0h2m148 0h2m210 0h1m-620 1h1m74 0h1m16 0h1m15 0h1m10 0h1m29 0h1m4 0h1m118 0h2m7 0h1m15 0h1m-398 1h1m50 0h2m51 0h2m51 0h1m1 0h2m33 0h1m7 0h1m91 0h1m351 0h1m-643 1h1m10 0h2m23 0h2m27 0h1m7 0h1m67 0h2m6 0h1m36 0h1m4 0h1m3 0h2m7 0h1m1 0h1m9 0h2m35 0h2m180 0h1m-415 1h1m11 0h2m75 0h1m8 0h2m2 0h1m6 0h1m78 0h1m13 0h1m40 0h1m283 0h2m43 0h2m-565 1h2m34 0h1m33 0h1m136 0h1m25 0h1m26 0h1m259 0h1m-548 1h2m18 0h2m60 0h2m0 0h2m12 0h1m21 0h1m54 0h1m9 0h1m29 0h1m20 0h2m18 0h2m175 0h1m-410 1h1m14 0h1m57 0h2m11 0h2m104 0h1m113 0h1m266 0h1m-567 1h2m91 0h1m4 0h2m0 0h1m28 0h1m22 0h1m12 0h2m0 0h2m0 0h1m26 0h2m51 0h1m65 0h2m53 0h1m-405 1h1m92 0h2m69 0h1m49 0h1m32 0h1m168 0h1m-351 1h1m18 0h2m38 0h2m54 0h2m22 0h2m35 0h2m195 0h2m-433 1h2m8 0h1m15 0h1m18 0h1m29 0h2m36 0h2m85 0h1m3 0h1m42 0h2m99 0h1m20 0h1m126 0h1m-514 1h1m8 0h1m40 0h1m33 0h1m4 0h1m49 0h1m45 0h1m0 0h1m111 0h1m35 0h2m85 0h1m319 0h1m-665 1h1m95 0h2m21 0h2m15 0h1m255 0h1m-359 1h1m77 0h1m-100 1h1m19 0h1m93 0h1m16 0h1m136 0h2m198 0h2m-545 1h1m10 0h1m127 0h2m35 0h1m65 0h2m50 0h2m41 0h1m5 0h1m123 0h1m-472 1h1m163 0h1m-13 1h1m39 0h1m15 0h1m8 0h1m4 0h1m24 0h1m92 0h2m275 0h1m59 0h1m-684 1h2m82 0h2m6 0h1m12 0h2m53 0h1m30 0h1m6 0h1m149 0h1m16 0h2m235 0h1m-577 1h1m24 0h2m10 0h1m50 0h1m35 0h2m6 0h2m4 0h2m23 0h1m52 0h1m22 0h2m33 0h1m112 0h1m-377 1h1m10 0h1m4 0h1m3 0h1m61 0h1m10 0h1m11 0h2m3 0h2m1 0h1m3 0h2m28 0h1m20 0h1m47 0h1m18 0h1m3 0h1m-225 1h2m67 0h1m57 0h2m7 0h1m16 0h1m8 0h1m75 0h1m103 0h1m-380 1h2m40 0h2m18 0h1m50 0h1m6 0h1m12 0h1m43 0h1m112 0h2m30 0h2m70 0h2m21 0h1m-389 1h2m9 0h1m12 0h1m3 0h1m0 0h1m17 0h1m6 0h2m0 0h1m39 0h1m38 0h1m4 0h1m3 0h2m16 0h1m9 0h2m-2 0h1m85 0h1m12 0h1m325 0h1m-601 1h2m10 0h1m20 0h1m13 0h2m94 0h1m9 0h1m24 0h1m4 0h1m23 0h2m414 0h1m-652 1h1m82 0h2m25 0h1m27 0h1m6 0h1m18 0h1m111 0h1m21 0h2m67 0h2m-360 1h1m30 0h2m21 0h1m6 0h1m23 0h2m5 0h2m-1 0h2m7 0h1m79 0h1m29 0h1m140 0h2m-374 1h2m12 0h1m19 0h1m41 0h1m5 0h1m3 0h1m27 0h1m14 0h1m3 0h1m19 0h1m13 0h1m4 0h1m19 0h1m33 0h2m25 0h1m23 0h1m22 0h1m53 0h1m114 0h1m-435 1h1m12 0h1m1 0h1m23 0h1m4 0h2m35 0h1m31 0h2m20 0h1m-163 1h2m36 0h1m26 0h1m59 0h2m2 0h1m20 0h1m14 0h1m44 0h1m3 0h1m32 0h2m-2 0h1m21 0h2m75 0h1m-309 1h2m10 0h1m54 0h1m7 0h2m75 0h1m8 0h2m41 0h2m14 0h1m-260 1h2m126 0h1m35 0h2m1 0h1m52 0h1m57 0h1m70 0h2m317 0h1m-678 1h2m27 0h1m35 0h1m2 0h2m14 0h1m0 0h1m1 0h2m20 0h1m2 0h1m2 0h1m0 0h2m9 0h1m43 0h1m4 0h2m43 0h1m-225 1h1m26 0h1m24 0h1m4 0h1m6 0h1m10 0h2m16 0h1m50 0h1m39 0h2m22 0h1m10 0h1m5 0h1m5 0h1m5 0h1m-233 1h2m75 0h2m26 0h1m13 0h2m35 0h2m1 0h1m12 0h2m1 0h1m6 0h2m11 0h1m8 0h1m25 0h2m-225 1h1m6 0h1m14 0h1m0 0h1m18 0h1m59 0h1m22 0h1m90 0h1m54 0h1m38 0h1m67 0h1m-353 1h2m11 0h1m24 0h1m17 0h1m15 0h2m8 0h1m124 0h2m15 0h1m192 0h1m-402 1h1m19 0h1m23 0h2m21 0h1m28 0h2m13 0h1m46 0h2m97 0h1m-285 1h1m27 0h1m9 0h2m4 0h1m7 0h1m23 0h1m13 0h2m10 0h1m53 0h2m2 0h1m5 0h2m0 0h1m3 0h1m10 0h1m4 0h2m18 0h2m5 0h2m14 0h1m0 0h1m5 0h2m141 0h2m-380 1h2m64 0h1m53 0h2m1 0h1m17 0h1m13 0h2m27 0h1m17 0h1m4 0h1m51 0h2m36 0h2m280 0h1m-501 1h1m15 0h2m25 0h1m37 0h1m13 0h1m4 0h2m51 0h1m30 0h2m131 0h1m-347 1h1m8 0h2m14 0h1m14 0h1m33 0h1m16 0h1m24 0h1m0 0h1m34 0h2m30 0h1m2 0h1m12 0h2m394 0h2m-660 1h1m4 0h1m24 0h1m62 0h2m81 0h1m20 0h2m62 0h1m52 0h1m-288 1h1m89 0h2m4 0h1m22 0h2m21 0h1m40 0h1m-221 1h1m2 0h1m7 0h1m24 0h1m41 0h2m130 0h1m46 0h1m426 0h1m-661 1h1m60 0h1m42 0h2m15 0h1m109 0h2m46 0h2m34 0h1m-341 1h2m22 0h2m34 0h1m17 0h2m4 0h1m3 0h1m46 0h1m51 0h1m0 0h1m18 0h2m25 0h1m27 0h2m28 0h2m290 0h1m-518 1h1m2 0h1m15 0h1m27 0h2m3 0h1m6 0h2m10 0h1m25 0h1m7 0h2m51 0h1m70 0h2m-222 1h1m78 0h1m8 0h1m106 0h2m112 0h1m-354 1h1m11 0h1m50 0h1m70 0h2m86 0h2m2 0h2m-249 1h2m19 0h1m99 0h2m53 0h2m204 0h1m-366 1h1m97 0h2m45 0h1m-167 1h1m78 0h1m47 0h1m11 0h1m-87 1h1m22 0h2m8 0h2m-84 1h1m46 0h1m67 0h1m45 0h1m3 0h1m88 0h1m8 0h1m117 0h2m-321 1h1m13 0h2m170 0h2m58 0h2m358 0h2m-680 1h2m8 0h1m21 0h1m3 0h1m135 0h1m374 0h2m-530 1h1m19 0h1m14 0h1m64 0h2m647 0h1m-737 1h2m-2 0h1m19 0h2m174 0h2m90 0h2m-210 1h1m75 0h1m70 0h1m31 0h1m16 0h2m-206 1h2m49 0h1m-102 1h2m0 0h1m-1 0h1m14 0h1m320 0h2m-328 1h1m16 0h1m18 0h2m59 0h1m43 0h1m40 0h1m41 0h1m68 0h1m24 0h2m90 0h1m-262 1h1m247 0h2m-451 1h2m186 0h2m7 0h1m43 0h2m1 0h2m13 0h1m-243 1h1m96 0h1m124 0h2m-248 1h2m44 0h1m10 0h1m30 0h2m20 0h1m96 0h1m20 0h1m31 0h1m84 0h1m-354 1h2m214 0h1m80 0h1m89 0h2m-365 1h1m4 0h2m158 0h2m15 0h1m126 0h1m9 0h1m-353 2h2m292 0h2m-184 1h2m7 0h2m75 0h1m151 0h1m-300 1h2m72 1h1m166 1h1m-258 1h1m40 0h1m51 0h1m261 0h2m-374 1h2m39 0h1m121 0h2m343 0h1m-392 1h1m2 0h1m3 0h2m76 0h1m-149 1h2m13 0h2m71 0h1m44 0h1m96 0h1m84 0h1m-190 1h2m30 0h1m91 1h1m98 3h1m-416 1h2m47 0h2m21 0h2m7 0h1m2 0h1m18 0h1m29 0h2m3 0h2m23 0h2m-154 2h2m6 0h1m295 0h2m-101 1h2m-158 1h1m5 0h1m20 1h1m86 0h1m227 0h2m-309 2h2m97 0h1m60 0h1m-145 1h2m28 0h1m63 0h2m-28 1h1m31 0h1m147 1h2m-284 1h1m11 0h1m89 0h2m-144 2h2m-8 1h1m203 1h1m-168 1h1m86 0h2m144 1h1m140 1h1m-239 1h1m21 0h2m39 0h1m-274 2h1m61 1h1m228 0h1m49 0h1m-308 1h1m89 0h2m-127 5h1m175 2h1m-62 1h1m83 1h1m-90 3h1m5 4h1m31 0h1m-98 1h1m119 0h1m-85 3h2m209 0h1m-174 4h1m9 2h2m-73 2h1m121 3h1m-147 1h1m13 4h2m78 3h1m101 1h2m-11 2h1m11 3h2m-150 2h1m41 5h1" stroke="#4a5cf2" stroke-opacity="0.28" stroke-width="2" fill="none"/><path d="m297 108h1m66 0h1m40 0h1m7 0h2m73 0h1m3 0h1m0 0h1m31 0h1m1 0h2m-104 1h2m12 0h1m24 0h1m37 0h2m3 0h2m21 0h1m64 0h1m29 0h1m12 0h1m-353 1h1m61 0h1m1 0h2m5 0h1m66 0h2m86 0h1m29 0h2m1 0h2m29 0h1m18 0h1m12 0h1m0 0h2m14 0h1m-349 1h1m13 0h2m43 0h1m78 0h2m23 0h1m162 0h1m32 0h1m-338 1h1m12 0h2m109 0h1m58 0h1m26 0h1m16 0h1m50 0h2m-293 1h1m42 0h1m31 0h2m68 0h2m8 0h1m12 0h1m2 0h1m131 0h2m39 0h1m-289 1h2m113 0h1m4 0h1m46 0h1m13 0h1m54 0h2m33 0h1m41 0h2m19 0h1m-390 1h1m8 0h1m26 0h1m0 0h1m119 0h1m1 0h1m30 0h1m23 0h2m-213 1h1m10 0h2m39 0h1m75 0h1m85 0h1m34 0h1m19 0h1m12 0h1m53 0h1m-218 1h2m30 0h2m28 0h2m76 0h1m63 0h2m6 0h1m46 0h1m-383 1h1m7 0h1m77 0h1m48 0h1m44 0h2m2 0h2m118 0h1m-240 1h2m55 0h1m15 0h2m11 0h2m15 0h1m45 0h1m4 0h2m119 0h1m-336 1h2m14 0h2m0 0h2m27 0h2m10 0h2m5 0h1m19 0h1m2 0h2m15 0h2m14 0h1m9 0h2m65 0h1m53 0h1m24 0h2m95 0h2m-381 1h1m9 0h2m5 0h1m8 0h2m56 0h2m38 0h1m27 0h1m2 0h1m4 0h2m10 0h1m14 0h2m18 0h2m21 0h1m21 0h1m35 0h2m9 0h1m28 0h1m8 0h2m-333 1h2m11 0h1m13 0h2m4 0h1m3 0h1m35 0h1m11 0h1m8 0h2m22 0h1m5 0h1m31 0h1m13 0h2m21 0h2m22 0h1m26 0h1m34 0h2m3 0h1m3 0h1m40 0h1m16 0h2m-349 1h2m1 0h1m1 0h1m24 0h2m36 0h1m23 0h2m7 0h2m128 0h2m48 0h1m44 0h2m36 0h1m-300 1h2m4 0h1m8 0h1m156 0h2m77 0h1m-286 1h2m23 0h1m5 0h1m22 0h2m4 0h1m15 0h1m3 0h1m1 0h2m10 0h1m34 0h2m18 0h2m17 0h2m11 0h1m7 0h1m45 0h2m42 0h1m11 0h1m-283 1h1m32 0h2m55 0h1m27 0h1m23 0h1m4 0h2m3 0h2m7 0h1m13 0h2m26 0h1m105 0h2m-342 1h1m56 0h1m8 0h1m34 0h1m45 0h1m42 0h1m25 0h1m101 0h1m36 0h1m16 0h1m8 0h1m-402 1h1m24 0h1m23 0h1m2 0h1m2 0h1m2 0h2m25 0h1m6 0h2m6 0h1m11 0h2m5 0h2m3 0h1m4 0h1m151 0h1m20 0h2m-308 1h1m6 0h2m-1 0h1m34 0h1m54 0h2m3 0h1m6 0h1m37 0h1m28 0h2m4 0h1m131 0h1m19 0h2m30 0h1m115 0h2m9 0h1m-442 1h2m12 0h1m27 0h1m35 0h2m4 0h1m93 0h2m-1 0h1m10 0h2m56 0h1m19 0h1m77 0h2m-322 1h1m32 0h1m51 0h2m37 0h2m43 0h2m60 0h1m2 0h1m-308 1h1m15 0h1m100 0h1m133 0h2m12 0h2m6 0h2m30 0h1m34 0h1m-317 1h1m20 0h2m4 0h1m70 0h1m15 0h1m70 0h1m17 0h1m46 0h1m16 0h1m23 0h1m11 0h1m-298 1h1m12 0h1m11 0h1m13 0h1m15 0h1m4 0h2m135 0h2m15 0h1m10 0h1m84 0h2m9 0h1m16 0h2m35 0h2m9 0h1m21 0h2m20 0h3m28 0h1m-404 1h1m32 0h1m25 0h1m11 0h1m18 0h1m3 0h2m27 0h1m48 0h1m53 0h2m10 0h1m27 0h1m28 0h1m-384 1h2m71 0h1m79 0h1m1 0h2m10 0h1m0 0h2m18 0h1m11 0h1m9 0h2m30 0h1m4 0h2m4 0h1m58 0h1m13 0h1m-318 1h1m1 0h1m3 0h1m55 0h2m4 0h1m23 0h1m3 0h2m5 0h1m51 0h1m57 0h1m15 0h1m11 0h2m18 0h1m1 0h1m24 0h2m1 0h1m16 0h2m60 0h2m34 0h1m-341 1h2m10 0h1m27 0h2m2 0h1m52 0h2m126 0h2m17 0h2m37 0h1m37 0h1m-403 1h8m25 0h1m9 0h2m4 0h2m9 0h1m18 0h8m41 0h1m6 0h1m-1 0h1m19 0h1m40 0h2m0 0h1m84 0h1m4 0h2m56 0h2m121 0h1m-427 1h1m61 0h1m10 0h1m6 0h1m14 0h2m36 0h1m3 0h2m61 0h2m4 0h2m27 0h1m33 0h2m155 0h1m-444 1h1m36 0h2m50 0h1m36 0h2m28 0h2m15 0h1m11 0h1m39 0h1m1 0h1m26 0h1m45 0h1m73 0h1m1 0h1m25 0h3m8 0h2m-1 0h1m30 0h1m31 0h3m0 0h1m-504 1h2m12 0h1m14 0h1m5 0h1m5 0h1m9 0h1m1 0h1m7 0h1m21 0h3m21 0h3m3 0h1m62 0h6m9 0h2m7 0h1m61 0h2m1 0h4m18 0h1m2 0h1m12 0h1m-1 0h1m1 0h1m35 0h7m1 0h9m9 0h1m13 0h2m9 0h1m-387 1h2m14 0h2m45 0h2m14 0h1m5 0h1m32 0h1m3 0h1m16 0h1m13 0h1m16 0h1m26 0h1m1 0h2m29 0h1m57 0h2m11 0h1m7 0h1m26 0h1m54 0h2m-392 1h1m31 0h2m5 0h1m31 0h2m4 0h2m20 0h2m41 0h1m2 0h2m24 0h1m47 0h2m41 0h1m11 0h1m44 0h1m321 0h1m-652 1h5m22 0h7m-2 0h2m11 0h1m19 0h1m0 0h1m1 0h1m62 0h1m16 0h2m19 0h2m5 0h2m41 0h1m25 0h8m-7 0h1m28 0h7m25 0h1m13 0h2m0 0h1m249 0h1m-505 1h1m73 0h1m84 0h1m9 0h1m36 0h1m24 0h2m13 0h1m6 0h2m-323 1h1m2 0h1m65 0h2m27 0h1m14 0h1m13 0h2m6 0h1m26 0h1m12 0h1m1 0h1m24 0h1m4 0h1m69 0h1m1 0h2m0 0h2m52 0h2m30 0h1m28 0h1m-355 1h1m22 0h6m49 0h11m-6 0h1m38 0h2m3 0h7m-3 0h1m9 0h1m3 0h1m27 0h10m64 0h1m18 0h4m18 0h2m6 0h1m11 0h1m59 0h1m62 0h1m-392 1h1m5 0h2m3 0h1m11 0h1m25 0h1m50 0h1m12 0h1m25 0h1m36 0h1m6 0h1m167 0h3m13 0h2m17 0h1m-445 1h1m9 0h1m22 0h1m2 0h1m13 0h1m55 0h2m14 0h1m21 0h1m4 0h1m15 0h1m22 0h1m9 0h1m11 0h1m48 0h2m13 0h2m7 0h1m-294 1h1m6 0h1m25 0h2m4 0h1m19 0h1m14 0h1m51 0h4m6 0h1m30 0h2m15 0h3m7 0h2m25 0h2m15 0h2m-1 0h1m13 0h1m49 0h2m78 0h3m157 0h1m-557 1h2m11 0h2m17 0h2m3 0h2m37 0h1m54 0h1m135 0h2m10 0h1m29 0h2m-272 1h1m18 0h2m11 0h2m11 0h1m39 0h1m10 0h1m12 0h2m49 0h1m29 0h2m12 0h1m18 0h1m8 0h2m8 0h2m5 0h2m224 0h1m-509 1h1m1 0h1m7 0h3m4 0h1m3 0h1m6 0h9m7 0h1m32 0h7m36 0h1m26 0h1m28 0h1m28 0h7m33 0h1m3 0h6m1 0h1m18 0h4m-282 1h2m13 0h1m23 0h1m4 0h2m6 0h2m14 0h1m33 0h1m55 0h1m-1 0h2m5 0h1m66 0h1m67 0h1m27 0h2m-303 1h2m44 0h1m22 0h1m8 0h1m16 0h2m16 0h2m14 0h2m18 0h1m14 0h1m1 0h1m44 0h1m121 0h1m33 0h2m-302 1h1m9 0h1m84 0h1m47 0h1m23 0h1m18 0h1m37 0h1m44 0h2m-336 1h2m0 0h2m10 0h1m2 0h1m53 0h1m27 0h2m12 0h2m13 0h1m14 0h2m4 0h1m0 0h1m48 0h2m-212 1h2m33 0h2m12 0h1m13 0h1m13 0h2m54 0h1m4 0h2m11 0h2m23 0h2m70 0h1m9 0h1m43 0h1m-319 1h1m45 0h1m1 0h1m22 0h1m13 0h1m2 0h1m15 0h2m29 0h1m62 0h1m80 0h2m41 0h1m54 0h1m5 0h1m-386 1h2m19 0h2m95 0h2m5 0h1m71 0h2m7 0h1m71 0h2m37 0h2m392 0h2m-623 1h1m25 0h1m32 0h1m7 0h1m0 0h1m15 0h1m12 0h2m5 0h2m30 0h2m12 0h1m88 0h1m59 0h2m-358 1h2m36 0h2m15 0h1m10 0h1m14 0h1m24 0h1m49 0h2m34 0h1m59 0h1m19 0h1m62 0h2m-348 1h1m35 0h1m30 0h1m35 0h1m0 0h2m79 0h1m22 0h1m7 0h2m84 0h2m6 0h2m40 0h1m-361 1h2m16 0h1m30 0h1m45 0h1m1 0h1m89 0h1m4 0h2m9 0h1m46 0h1m11 0h1m24 0h2m11 0h1m55 0h1m6 0h1m12 0h1m3 0h1m94 0h1m8 0h2m38 0h2m-541 1h1m99 0h1m58 0h2m58 0h2m7 0h2m425 0h1m89 0h2m-731 1h1m19 0h1m3 0h1m65 0h1m17 0h1m4 0h1m18 0h1m1 0h1m34 0h2m17 0h2m1 0h2m21 0h1m18 0h1m367 0h1m-593 1h1m4 0h1m66 0h1m7 0h1m1 0h1m1 0h2m27 0h2m1 0h1m112 0h1m4 0h1m-253 1h2m0 0h2m39 0h2m59 0h2m-2 0h1m11 0h1m24 0h1m32 0h2m0 0h2m39 0h1m57 0h1m13 0h1m13 0h2m39 0h2m277 0h1m7 0h2m-630 1h1m28 0h2m120 0h2m24 0h1m31 0h1m11 0h1m12 0h1m71 0h1m-303 1h1m47 0h1m9 0h1m20 0h1m54 0h2m14 0h1m4 0h1m9 0h1m3 0h2m-1 0h1m143 0h1m-307 1h1m79 0h1m33 0h1m78 0h1m69 0h1m44 0h1m-332 1h2m50 0h1m25 0h1m10 0h2m53 0h2m51 0h1m25 0h1m71 0h1m144 0h1m17 0h2m-450 1h1m2 0h2m209 0h1m4 0h2m3 0h1m136 0h1m235 0h1m-606 1h1m30 0h2m19 0h1m37 0h2m3 0h2m188 0h1m66 0h1m21 0h2m9 0h1m-348 1h1m64 0h1m101 0h1m36 0h1m13 0h1m67 0h2m104 0h1m-422 1h1m132 0h2m14 0h1m4 0h1m44 0h1m11 0h1m7 0h1m4 0h1m20 0h2m86 0h1m8 0h2m-300 1h1m43 0h1m32 0h1m38 0h1m7 0h1m154 0h1m107 0h1m79 0h1m-505 1h1m61 0h1m40 0h2m15 0h1m76 0h2m14 0h1m94 0h2m-242 1h1m13 0h2m39 0h1m6 0h2m19 0h2m132 0h2m-282 1h2m3 0h2m169 0h1m7 0h2m60 0h1m13 0h1m64 0h1m116 0h2m188 0h1m-648 1h1m35 0h1m2 0h1m92 0h1m25 0h1m10 0h2m12 0h2m9 0h1m9 0h1m32 0h1m9 0h1m8 0h1m24 0h1m48 0h1m-304 1h1m2 0h1m20 0h1m42 0h1m11 0h1m16 0h2m47 0h1m5 0h1m43 0h1m49 0h1m52 0h1m74 0h2m52 0h1m-464 1h1m60 0h2m3 0h1m43 0h1m5 0h2m1 0h1m35 0h2m24 0h2m7 0h1m92 0h2m20 0h1m76 0h1m-366 1h1m22 0h2m2 0h1m46 0h1m4 0h1m17 0h2m80 0h1m39 0h2m7 0h1m1 0h2m51 0h1m268 0h2m-553 1h2m5 0h1m7 0h1m68 0h1m32 0h1m4 0h1m29 0h1m18 0h1m73 0h1m11 0h1m338 0h1m-617 1h1m28 0h2m30 0h2m21 0h1m12 0h1m8 0h1m72 0h2m8 0h1m8 0h2m26 0h2m5 0h1m31 0h1m19 0h1m133 0h1m187 0h1m-525 1h2m13 0h1m4 0h2m8 0h1m54 0h2m38 0h1m6 0h2m22 0h1m24 0h1m204 0h1m-432 1h1m8 0h2m41 0h1m44 0h1m9 0h1m19 0h1m1 0h1m3 0h2m11 0h1m10 0h1m47 0h2m77 0h1m-277 1h1m36 0h2m44 0h1m13 0h1m137 0h2m25 0h1m325 0h2m-585 1h2m4 0h1m21 0h1m35 0h2m18 0h2m28 0h1m38 0h1m6 0h1m1 0h1m34 0h1m9 0h1m-230 1h2m2 0h1m14 0h1m36 0h2m2 0h1m37 0h1m27 0h2m101 0h1m71 0h1m45 0h2m-321 1h1m4 0h1m10 0h2m47 0h2m11 0h1m44 0h1m4 0h1m1 0h1m35 0h1m27 0h1m0 0h1m31 0h1m35 0h1m57 0h1m22 0h1m-397 1h2m16 0h1m35 0h1m3 0h2m76 0h2m14 0h1m0 0h1m21 0h1m14 0h1m51 0h1m62 0h1m41 0h1m42 0h2m-376 1h1m60 0h2m2 0h1m19 0h1m11 0h2m114 0h1m13 0h2m80 0h1m67 0h1m-317 1h1m59 0h1m7 0h1m43 0h2m26 0h1m6 0h1m3 0h1m25 0h1m1 0h1m13 0h1m14 0h1m-259 1h1m12 0h2m8 0h1m12 0h1m37 0h2m4 0h1m19 0h2m113 0h2m30 0h1m36 0h1m14 0h1m-315 1h1m13 0h1m32 0h2m29 0h1m56 0h1m3 0h1m50 0h1m6 0h1m102 0h2m15 0h1m34 0h1m-318 1h1m127 0h2m26 0h2m44 0h1m27 0h2m1 0h2m-1 0h2m18 0h1m-200 1h1m25 0h1m6 0h1m5 0h1m1 0h1m50 0h1m10 0h2m5 0h1m-210 1h1m67 0h1m1 0h2m10 0h2m94 0h2m64 0h1m33 0h2m-236 1h2m3 0h1m34 0h1m29 0h1m6 0h1m26 0h1m33 0h2m180 0h1m-357 1h1m1 0h1m1 0h1m23 0h1m56 0h1m10 0h2m76 0h1m9 0h1m5 0h1m10 0h1m26 0h1m7 0h1m147 0h2m10 0h1m-397 1h1m56 0h1m49 0h2m59 0h2m0 0h2m8 0h1m13 0h1m44 0h1m56 0h2m284 0h1m-588 1h2m40 0h1m1 0h1m54 0h1m7 0h1m95 0h2m125 0h1m7 0h1m-317 1h2m4 0h2m28 0h1m6 0h1m17 0h1m51 0h2m4 0h1m28 0h2m93 0h1m142 0h1m190 0h2m-608 1h2m108 0h2m98 0h1m9 0h2m-2 0h2m149 0h1m10 0h1m54 0h1m-369 1h1m42 0h1m51 0h2m23 0h2m28 0h2m42 0h1m461 0h1m-696 1h1m23 0h2m53 0h2m50 0h1m-143 1h2m1 0h1m24 0h1m60 0h2m24 0h1m29 0h1m18 0h1m16 0h1m11 0h2m51 0h1m22 0h1m41 0h2m36 0h2m129 0h2m81 0h1m26 0h1m-566 1h2m55 0h2m154 0h1m82 0h2m8 0h2m118 0h1m78 0h1m-554 1h1m72 0h1m15 0h1m25 0h2m50 0h2m4 0h1m18 0h1m1 0h1m81 0h1m63 0h2m28 0h1m33 0h2m-361 1h1m6 0h1m7 0h1m80 0h2m0 0h1m25 0h1m6 0h2m44 0h1m15 0h2m25 0h1m7 0h1m5 0h2m18 0h2m32 0h2m27 0h1m-350 1h1m49 0h2m19 0h2m2 0h1m20 0h2m5 0h1m138 0h1m131 0h1m336 0h1m-688 1h2m26 0h2m-1 0h1m55 0h1m41 0h1m111 0h2m88 0h2m-361 1h2m79 0h2m4 0h1m9 0h1m91 0h1m2 0h1m0 0h2m8 0h1m99 0h1m15 0h1m67 0h1m-362 1h1m18 0h1m37 0h1m15 0h2m138 0h1m4 0h2m22 0h1m16 0h1m217 0h1m-511 1h1m14 0h1m49 0h1m27 0h1m91 0h1m44 0h2m-124 1h2m25 0h1m19 0h1m8 0h2m29 0h1m35 0h2m40 0h1m43 0h2m35 0h2m6 0h1m131 0h2m-472 1h1m13 0h1m24 0h2m1 0h2m26 0h1m19 0h1m22 0h2m10 0h2m0 0h1m18 0h2m50 0h1m423 0h1m6 0h1m-602 1h1m19 0h1m158 0h1m18 0h2m6 0h1m7 0h1m29 0h1m-114 1h1m57 0h1m567 0h1m-793 1h1m10 0h1m84 0h2m1 0h2m6 0h2m26 0h2m27 0h2m20 0h1m46 0h2m93 0h1m53 0h1m-346 1h2m6 0h1m32 0h2m59 0h1m20 0h1m86 0h2m61 0h2m-318 1h1m119 0h1m3 0h2m17 0h1m12 0h1m28 0h2m54 0h1m-243 1h1m44 0h1m20 0h2m85 0h1m38 0h1m13 0h2m38 0h2m29 0h1m104 0h2m-329 1h1m30 0h1m34 0h1m7 0h1m37 0h1m5 0h1m22 0h2m3 0h1m17 0h1m-202 1h2m0 0h1m50 0h1m2 0h1m18 0h1m60 0h2m2 0h1m11 0h1m1 0h2m63 0h2m40 0h1m-255 1h1m65 0h1m31 0h1m13 0h1m134 0h1m2 0h1m-268 1h1m1 0h1m59 0h1m39 0h1m61 0h1m95 0h1m8 0h1m95 0h1m-361 1h1m19 0h2m13 0h2m55 0h1m21 0h2m24 0h1m16 0h2m19 0h1m197 0h1m122 0h1m12 0h2m-504 1h1m22 0h1m89 0h1m12 0h1m102 0h1m65 0h1m-324 1h1m23 0h1m16 0h2m19 0h1m51 0h1m54 0h1m6 0h1m34 0h1m27 0h1m-239 1h2m2 0h1m1 0h2m32 0h1m91 0h1m128 0h2m96 0h1m-306 1h2m0 0h1m101 0h2m54 0h1m14 0h2m1 0h1m33 0h2m24 0h1m285 0h2m199 0h1m-779 1h1m28 0h1m96 0h1m68 0h1m5 0h2m5 0h1m70 0h1m5 0h1m-253 1h1m3 0h1m7 0h2m122 0h2m12 0h2m107 0h1m308 0h1m-582 1h2m8 0h1m61 0h1m11 0h2m16 0h1m127 0h2m-249 1h1m105 0h1m15 0h2m10 0h1m80 0h1m3 0h2m61 0h1m2 0h1m22 0h2m53 0h1m6 0h1m-371 1h1m29 0h1m7 0h1m70 0h2m23 0h1m7 0h1m12 0h1m10 0h2m15 0h1m12 0h1m50 0h1m11 0h1m1 0h1m-235 1h1m0 0h1m32 0h1m7 0h2m-1 0h1m12 0h1m27 0h1m44 0h1m6 0h2m34 0h1m148 0h1m197 0h1m-535 1h1m29 0h2m22 0h2m7 0h1m36 0h1m12 0h2m1 0h1m10 0h2m18 0h1m2 0h2m11 0h1m19 0h1m75 0h2m4 0h1m0 0h2m-235 1h1m2 0h2m69 0h2m28 0h1m21 0h2m57 0h2m108 0h2m-350 1h2m66 0h1m5 0h2m67 0h2m69 0h1m95 0h2m7 0h1m14 0h1m88 0h1m-394 1h1m52 0h1m20 0h1m35 0h1m65 0h1m35 0h1m41 0h2m323 0h2m73 0h1m-594 1h2m7 0h1m127 0h1m29 0h1m4 0h1m27 0h1m359 0h2m-609 1h1m33 0h1m28 0h1m11 0h1m23 0h2m1 0h1m20 0h1m4 0h2m11 0h1m10 0h1m4 0h1m62 0h1m16 0h1m10 0h1m27 0h1m0 0h1m90 0h1m-402 1h1m22 0h1m4 0h2m0 0h2m10 0h2m33 0h2m58 0h1m116 0h2m5 0h1m52 0h1m12 0h1m-332 1h1m22 0h1m76 0h1m32 0h2m5 0h1m21 0h2m55 0h1m29 0h1m29 0h1m5 0h1m-283 1h1m18 0h1m58 0h2m45 0h1m2 0h1m27 0h2m11 0h1m18 0h2m20 0h1m19 0h2m105 0h1m47 0h2m318 0h1m-707 1h1m39 0h1m24 0h1m10 0h2m24 0h1m93 0h1m41 0h1m-229 1h2m21 0h1m24 0h1m2 0h2m22 0h2m7 0h1m39 0h1m6 0h1m2 0h2m8 0h2m34 0h2m19 0h2m50 0h1m43 0h2m-257 1h1m47 0h1m50 0h1m26 0h1m6 0h2m27 0h2m42 0h2m7 0h1m-194 1h1m4 0h2m2 0h1m44 0h1m2 0h1m41 0h2m18 0h2m3 0h1m111 0h1m13 0h1m221 0h1m-491 1h1m8 0h1m22 0h1m12 0h1m6 0h2m27 0h2m11 0h1m3 0h1m27 0h1m38 0h1m46 0h1m1 0h1m33 0h1m97 0h1m-413 1h1m15 0h1m15 0h2m2 0h1m14 0h1m36 0h1m6 0h1m20 0h2m6 0h1m51 0h1m27 0h1m209 0h1m-407 1h1m19 0h2m13 0h2m18 0h1m26 0h1m30 0h2m12 0h2m74 0h1m16 0h1m42 0h1m355 0h1m-618 1h2m14 0h1m29 0h1m15 0h1m31 0h1m0 0h2m19 0h1m13 0h1m13 0h1m5 0h1m82 0h1m8 0h1m27 0h2m3 0h2m-267 1h2m35 0h2m9 0h2m25 0h2m31 0h2m26 0h1m200 0h2m-328 1h2m13 0h1m2 0h2m3 0h1m9 0h1m6 0h1m4 0h2m4 0h1m2 0h1m1 0h1m5 0h2m0 0h2m9 0h1m0 0h2m36 0h1m26 0h2m24 0h1m71 0h1m12 0h1m32 0h1m-288 1h1m32 0h1m12 0h1m16 0h1m2 0h1m13 0h1m59 0h2m7 0h2m-99 1h1m61 0h2m1 0h1m60 0h1m1 0h1m15 0h1m-161 1h2m1 0h1m11 0h1m38 0h2m15 0h1m37 0h1m0 0h1m26 0h2m45 0h1m445 0h2m-622 1h2m23 0h1m17 0h2m47 0h2m9 0h1m54 0h1m29 0h1m25 0h1m16 0h1m8 0h2m-317 1h1m5 0h1m58 0h1m25 0h1m18 0h1m3 0h1m9 0h1m16 0h1m42 0h1m10 0h1m27 0h1m5 0h1m24 0h1m144 0h2m-342 1h2m26 0h1m1 0h1m23 0h1m10 0h1m0 0h1m58 0h2m10 0h2m6 0h2m13 0h1m2 0h1m35 0h1m-201 1h1m38 0h1m7 0h2m42 0h1m17 0h1m10 0h1m31 0h2m61 0h1m24 0h1m-275 1h1m11 0h1m9 0h1m6 0h1m3 0h1m3 0h1m9 0h2m13 0h2m45 0h2m123 0h1m201 0h1m-418 1h2m66 0h1m7 0h1m25 0h2m4 0h1m9 0h1m5 0h1m39 0h1m3 0h1m22 0h1m20 0h1m-204 1h1m15 0h1m89 0h2m26 0h1m151 0h1m45 0h1m3 0h2m-372 1h1m37 0h1m97 0h1m33 0h1m49 0h2m77 0h1m-290 1h1m63 0h1m20 0h1m17 0h1m17 0h2m0 0h1m40 0h1m25 0h1m19 0h2m78 0h1m-264 1h1m26 0h2m24 0h2m46 0h2m32 0h1m135 0h1m-258 1h1m12 0h2m63 0h2m37 0h1m1 0h1m134 0h2m-311 1h1m52 0h1m11 0h1m18 0h1m26 0h2m15 0h2m165 0h2m-232 1h1m60 0h2m9 0h1m50 0h2m0 0h1m194 0h2m108 0h2m-380 1h1m170 0h1m-243 1h1m27 0h2m143 0h1m34 0h1m15 0h1m0 0h1m-129 1h2m56 0h2m132 0h1m82 0h2m163 0h1m-523 1h1m31 0h1m132 0h1m41 0h1m5 0h1m-266 1h1m2 0h1m24 0h1m19 0h1m100 0h1m42 0h2m-193 1h2m28 0h2m29 0h1m204 0h2m100 0h1m-394 1h1m55 0h1m28 0h2m94 0h1m31 0h2m25 0h1m-192 1h2m112 0h2m-147 1h2m113 0h2m10 0h1m4 0h1m41 0h2m61 0h1m-154 1h2m34 0h1m10 0h2m85 0h2m243 0h2m-465 1h1m74 0h1m81 0h2m27 0h1m23 0h1m13 0h1m-199 2h2m231 0h1m-228 1h1m-24 1h2m79 0h1m48 0h1m-57 1h1m-29 1h1m24 0h2m130 0h1m68 0h2m-270 1h1m101 0h1m106 0h1m90 0h1m-189 1h1m38 0h1m338 0h1m63 0h2m-559 1h2m39 0h1m193 0h1m-213 1h1m26 0h1m62 0h1m15 0h1m8 0h1m46 0h1m105 0h2m31 0h1m-333 1h1m79 0h1m5 0h1m84 0h1m-182 1h1m126 0h1m-11 1h1m-86 1h2m121 0h1m-125 2h1m25 1h1m47 1h2m-32 1h2m33 0h1m13 0h2m-8 1h1m37 0h1m377 0h1m-321 1h1m-164 1h2m198 0h1m11 0h1m49 2h1m-267 1h1m56 0h1m98 0h1m-202 1h2m126 0h1m40 0h1m4 0h1m67 0h1m-169 1h1m57 0h1m-19 1h1m102 0h2m98 0h1m-271 1h2m33 0h1m5 0h1m13 1h1m9 0h1m127 1h2m-165 1h2m315 1h1m-9 2h2m-185 2h1m33 1h1m80 0h2m-90 2h2m-208 1h2m63 0h2m21 1h1m18 0h1m2 1h2m11 0h2m-81 3h1m-3 2h1m52 1h1m-124 2h2m103 3h1m119 0h1m4 0h2m6 0h1m-98 1h1m-92 2h2m66 4h2m-31 5h1m70 2h1m82 0h1m5 0h1m43 2h1m-203 4h1m-97 5h1m7 0h2m143 0h1m46 1h1m92 1h2m-68 8h1m-25 2h1m-131 1h2m111 1h1m13 0h1m-110 1h2m43 11h1" stroke="#4a5cf2" stroke-opacity="0.45" stroke-width="2" fill="none"/><path d="m296 109h2m121 0h2m29 0h2m31 2h1m19 0h2m-112 1h2m-60 3h2m148 7h2m-159 3h2m-51 4h2m277 0h1m38 5h3m0 0h1m52 0h1m-333 1h1m404 6h2m6 0h1m-295 2h1m73 1h2m-174 1h2m168 1h2m136 0h1m-49 1h1m-261 2h1m226 0h2m138 0h2m20 0h1m-334 2h2m56 1h2m49 3h2m154 1h1m313 2h1m-662 1h2m-5 1h2m117 0h2m117 1h1m-130 2h2m-12 1h2m97 0h2m146 0h2m-302 4h2m180 1h2m-170 2h2m83 0h2m278 0h2m-289 1h2m0 1h1m63 0h1m79 0h1m-268 1h1m105 1h2m0 0h2m-28 4h2m1 0h1m162 0h1m-179 2h1m86 0h2m-190 1h2m175 0h2m91 0h2m-169 1h1m49 0h2m19 0h2m84 0h2m-97 1h2m3 0h1m-36 1h1m38 0h2m81 1h1m-212 1h2m38 0h1m122 0h2m37 1h2m-12 3h2m93 0h2m0 1h2m-232 1h2m11 0h2m-98 1h2m61 0h1m224 0h1m-74 1h2m83 0h2m-202 1h2m196 0h2m-332 1h2m124 0h1m-106 1h2m184 0h1m-3 1h2m-164 1h2m257 0h2m-98 1h1m99 0h2m-144 1h2m5 0h2m14 1h1m206 0h1m-308 1h2m59 0h1m-64 1h2m189 0h1m107 0h2m-353 1h1m136 0h2m-126 1h1m106 0h1m21 0h2m92 0h2m99 0h1m-259 1h1m34 0h2m22 1h2m163 0h1m-237 1h2m246 0h2m-302 1h2m111 0h1m88 0h1m-159 2h2m55 0h2m151 1h1m-47 1h1m34 0h2m-176 1h2m109 0h1m-13 1h2m62 1h2m-117 2h2m10 0h2m328 1h2m-402 2h2m92 0h2m31 0h2m-217 5h2m147 0h2m-23 1h1m2 2h2m-43 1h2m-88 3h2m164 1h1m14 0h1m-26 1h2m-22 1h1m7 0h2m13 0h2m48 2h1m-114 3h1m99 1h2m107 1h1m-136 2h1m-79 1h1m100 0h1m-42 1h1m48 0h2m680 0h1m-739 1h2m39 1h1m-72 1h1m136 0h1m-219 1h1m209 0h1m-90 1h1m-74 1h1m11 0h1m50 0h1m-45 1h1m115 0h1m-140 2h1m-6 1h1m15 0h2m-79 1h1m40 2h1m82 3h2m3 0h2m9 1h1m-103 1h1m-85 1h2m218 12h1m-146 13h2m197 4h1m-224 6h2m28 4h1m-32 25h1m-23 23h2" stroke="#4a5cf2" stroke-opacity="0.68" stroke-width="2" fill="none"/><path d="m518 110h2m233 2h1m-280 1h1m-100 2h2m-84 1h2m-5 5h2m0 0h2m227 0h2m35 1h2m-178 1h2m-25 4h1m130 4h2m-68 1h1m283 1h2m-356 1h2m290 0h1m-66 5h2m-301 1h2m210 0h1m-62 1h2m11 2h2m347 1h2m-352 1h2m78 1h2m65 0h2m-221 9h1m24 0h2m-81 6h2m94 4h1m11 0h1m-24 1h1m5 0h2m-15 3h1m41 4h2m81 0h1m-91 2h2m-101 4h1m69 0h2m27 0h2m135 0h2m-81 1h1m90 0h2m-266 4h2m52 1h1m46 0h1m135 1h1m365 0h2m-550 1h1m61 2h2m-74 1h1m-7 1h2m76 0h2m95 0h1m-95 1h1m46 1h1m-55 1h1m-91 1h1m162 0h1m17 0h2m79 3h2m-1 0h2m-203 1h2m-9 2h1m300 1h2m-292 2h2m36 2h2m171 0h2m-211 1h1m-22 1h2m-30 1h2m254 3h1m37 0h2m-263 2h2m179 2h2m-74 1h2m-12 2h2m-119 2h1m154 1h2m-104 2h1m91 0h2m-88 2h2m69 1h2m-43 1h2m11 1h1m-44 2h1m-6 2h1m617 5h2m-521 3h1m-127 2h2m14 0h1m87 1h2m-179 1h2m146 3h2m-41 4h2m115 1h2m43 3h1m-187 2h2m529 0h1m-591 5h1m95 3h1m-10 1h1m-82 8h1m79 3h2m-132 9h1m402 49h2m-411 7h1" stroke="#4a5cf2" stroke-opacity="0.9" stroke-width="2" fill="none"/><path d="m1029 191.5h1m-579 52h1m63 3h1m3 0h1m-179 5h1m61 6h1m107 4h1m-134 17h1m213 15h1m-107 11h1m-33 51h1m168 31h1" stroke="#4a5cf2" stroke-opacity="0.12" stroke-width="3" fill="none"/><path d="m447 117.5h2m6 2h2m-68 3h2m472 18h1m-132 2h1m-271 7h1m-23 14h2m-17 4h1m-8 4h1m29 0h2m76 1h2m-23 3h1m-70 1h2m130 8h1m-141 2h2m25 0h2m110 1h1m-152 2h2m170 0h2m175 0h1m-354 2h1m122 1h2m70 5h1m73 0h2m-204 3h2m-5 2h1m268 0h1m-304 2h1m120 1h2m-15 3h2m-8 1h1m102 0h2m-213 3h2m163 1h2m-20 4h1m122 1h1m-247 3h2m389 12h1m-360 3h2m-78 2h1m79 2h1m54 0h1m81 0h1m-96 1h1m-253 1h1m191 2h2m54 1h1m28 0h1m-95 1h1m135 0h1m-9 1h2m-103 2h1m-204 2h1m256 1h1m-193 1h1m91 0h1m24 0h1m-73 1h2m38 1h1m154 0h1m-177 2h2m86 0h1m-73 1h1m19 1h1m-98 1h2m118 0h2m77 1h1m-183 2h1m161 0h1m-49 2h1m-41 1h1m-100 3h1m94 0h1m-154 2h1m146 1h1m6 0h1m145 1h1m-167 5h1m-111 2h1m152 0h1m-148 3h1m167 5h2m-142 5h1m283 0h1m-328 5h1m79 4h1m-26 11h1m244 6h1m-169 3h1m-67 15h1m73 9h1" stroke="#4a5cf2" stroke-opacity="0.28" stroke-width="3" fill="none"/><path d="m303 113.5h2m169 3h2m3 1h2m-87 1h1m86 4h1m-109 2h2m30 0h1m147 0h1m78 3h1m-226 2h1m169 0h2m-148 1h1m392 1h1m-544 3h2m46 0h2m266 0h2m-150 2h2m-74 1h1m40 0h2m119 3h1m-7 1h2m-111 1h2m180 1h2m-170 1h1m57 0h2m65 4h2m110 0h2m-339 1h2m7 1h1m77 1h2m-40 1h1m58 0h1m488 0h2m114 0h1m-727 2h2m200 1h2m-54 3h2m66 1h2m-117 3h1m23 1h1m368 0h1m118 0h1m-540 2h1m-27 1h2m124 0h2m-84 1h1m-43 2h2m13 0h2m-71 1h2m143 1h2m-56 2h1m109 0h2m-76 1h1m-23 1h2m2 0h1m-133 1h2m215 0h2m106 0h2m-29 1h1m49 0h2m134 0h1m-372 1h2m79 1h2m424 0h1m17 4h2m-515 1h2m40 0h2m369 0h2m-451 1h1m65 0h1m5 0h2m101 0h1m-3 1h2m-134 1h2m9 0h2m125 0h2m52 0h1m-186 3h2m-30 2h1m224 0h1m127 1h1m-242 1h1m-33 3h2m-116 1h2m-5 1h1m23 0h1m73 1h1m8 0h2m-51 1h2m40 0h2m18 0h2m197 2h1m2 0h2m-312 1h1m44 0h2m2 0h1m-37 1h1m175 0h2m-155 1h2m146 0h1m92 1h1m-214 1h2m98 0h1m347 0h2m-465 1h2m167 0h2m-175 1h2m203 0h2m69 0h1m-23 1h1m15 0h1m-259 1h2m89 0h2m79 0h1m-201 2h2m400 0h1m-383 1h2m-87 1h2m269 1h2m-31 2h1m-187 1h2m90 0h1m62 0h1m416 0h2m-574 1h1m87 0h2m42 0h2m2 0h1m-53 2h2m-19 2h2m-12 1h1m16 0h2m-175 3h1m136 0h1m37 0h1m-170 2h1m99 2h1m86 0h2m-56 3h2m250 0h1m-372 1h2m153 0h2m91 0h2m-113 1h2m552 0h1m-572 2h1m-22 1h1m-12 1h1m-20 2h2m-79 1h1m160 1h2m5 0h1m2 0h1m-74 2h1m166 1h2m-251 1h1m108 2h2m38 0h2m59 0h1m-165 1h1m203 0h1m168 0h2m-241 3h2m5 0h2m0 0h1m-95 1h1m79 0h1m-143 1h1m22 0h2m-86 1h1m179 0h1m16 0h1m-24 2h1m-16 1h1m124 0h1m-244 1h2m-5 1h2m132 0h1m-124 1h1m74 1h1m6 0h1m69 2h1m50 0h1m-134 1h1m92 0h1m-145 3h1m-25 1h1m107 0h1m24 0h1m-103 1h1m116 1h1m-180 9h1m23 3h1m9 2h1m77 6h1m53 28h1m132 9h1m-172 17h1" stroke="#4a5cf2" stroke-opacity="0.45" stroke-width="3" fill="none"/><path d="m636 109.5h2m-317 6h1m122 0h2m138 0h1m-215 3h2m47 0h1m191 2h2m-105 1h1m79 1h2m-295 1h2m244 0h2m-109 1h2m230 0h1m-259 4h2m17 0h1m-70 9h2m336 0h2m-288 1h2m-84 1h2m136 3h2m29 0h2m82 0h2m-129 1h2m126 2h1m7 1h1m-242 5h1m-69 2h2m234 4h2m-172 1h1m13 1h2m76 0h2m218 0h2m-190 1h2m-9 1h1m-46 1h1m-103 2h2m24 1h2m88 0h1m70 0h1m-95 1h2m139 0h1m-154 1h2m6 0h2m488 0h2m-424 1h1m28 0h1m-110 2h1m200 0h2m-214 1h2m74 1h2m50 2h1m198 1h2m-335 3h1m38 0h2m6 0h2m111 0h1m56 0h2m-100 1h1m89 0h2m276 3h2m-487 1h1m377 2h2m-375 1h1m27 0h1m145 0h1m-121 1h1m101 0h1m13 0h1m-49 1h2m-82 1h1m156 0h1m82 0h2m-259 1h2m7 0h2m-129 1h2m247 0h2m94 0h1m-273 1h2m263 0h1m-108 1h1m119 0h1m-216 1h2m85 1h2m-95 1h1m-79 1h2m267 0h2m-231 1h1m98 0h1m-10 3h2m111 0h1m-209 1h1m15 0h1m52 0h2m5 1h2m228 0h1m-231 1h1m-17 1h2m111 0h2m-258 1h1m398 0h2m-141 1h1m-70 1h2m-88 1h1m52 0h1m-28 1h1m-4 1h2m496 1h2m-394 1h2m72 0h2m2 0h1m-190 1h1m-10 1h2m104 0h1m153 0h2m-248 1h1m-116 1h2m55 0h2m-20 3h2m50 0h2m89 0h2m7 0h1m48 0h2m-18 2h2m10 0h2m-211 2h2m101 2h2m26 0h1m18 1h1m15 1h1m-192 1h2m96 0h2m80 0h2m-47 1h1m351 1h2m-484 5h1m242 0h2m7 0h2m314 0h2m-331 2h2m-233 1h2m312 2h2m-123 1h2m364 0h1m-478 1h2m207 0h2m-30 4h1m-280 1h1m162 1h2m108 0h1m411 0h2m-426 2h2m-32 3h1m8 0h1m-130 1h2m41 0h1m64 0h2m-128 2h1m8 0h1m95 0h2m3 0h1m-114 1h1m-9 1h1m25 1h1m176 0h1m-244 4h1m159 0h2m27 5h1m-170 2h1m-34 7h1m612 0h1m-323 18h1m-122 8h1m-19 7h1" stroke="#4a5cf2" stroke-opacity="0.68" stroke-width="3" fill="none"/><path d="m601 110.5h2m-306 2h1m239 3h2m-240 11h2m379 0h1m-27 1h1m-376 1h2m61 2h2m112 1h1m-54 1h2m54 3h1m98 4h2m-7 1h2m90 1h2m-334 1h2m259 1h2m-297 4h2m177 0h2m183 0h1m-222 3h2m409 0h2m-44 3h2m-335 5h2m-25 2h2m17 1h2m-18 1h1m78 0h1m-37 3h1m13 0h1m161 0h2m-126 3h1m2 1h2m0 0h1m-151 1h2m131 1h2m84 0h2m-279 2h2m110 0h2m-156 1h2m232 2h1m277 2h1m-373 4h2m186 0h2m122 1h1m-373 1h2m88 1h2m3 0h2m-93 1h2m76 0h1m243 0h2m186 0h2m-335 1h1m-207 2h2m20 0h1m74 0h1m101 1h2m-145 3h1m276 0h2m-167 1h2m-119 2h1m72 4h2m50 2h1m63 1h1m-165 1h1m453 0h2m-486 6h1m154 0h2m-265 2h2m247 1h2m-135 1h1m41 1h2m127 2h2m-15 3h1m-155 1h2m113 1h1m-180 1h1m291 0h2m-158 1h2m4 0h2m-75 1h2m-50 1h1m-19 1h2m80 2h2m136 0h1m-8 1h1m-66 4h1m-35 5h1m95 0h2m-53 4h1m-4 2h1m86 4h2m-234 2h2m111 1h2m-30 2h1m-1 0h1m-98 3h2m41 2h2m-17 1h1m115 2h1m-94 2h1m47 2h2m-120 4h2m393 8h1m-341 20h1m43 16h2m-46 1h1m25 0h2m123 39h1" stroke="#4a5cf2" stroke-opacity="0.9" stroke-width="3" fill="none"/><path d="m734 133h4m-148 161h1m-139 62h1m168 31h1" stroke="#4a5cf2" stroke-opacity="0.12" stroke-width="4" fill="none"/><path d="m770 127h4m-44 16h1m296 49h1m-245 10h1m-335 43h1m111 0h2m-46 1h1m-5 2h1m-175 4h1m-3 1h1m-13 4h1m270 0h1m-196 1h1m106 0h1m0 4h1m-60 5h1m-30 1h1m192 0h1m-177 6h1m154 0h1m-218 4h1m165 1h1m-116 1h1m42 11h1m-120 2h1m3 13h1m128 0h1m-199 2h1m76 6h2m83 33h1" stroke="#4a5cf2" stroke-opacity="0.28" stroke-width="4" fill="none"/><path d="m743 186h2m-2 16h1m-49 10h1m8 8h1m108 4h2m-524 17h1m257 0h1m81 0h1m-265 2h1m95 2h1m68 0h1m-66 1h1m-16 1h1m77 0h1m-37 3h1m-53 3h1m-87 1h1m-34 3h1m234 5h2m-22 1h1m-163 1h2m37 0h1m-65 5h1m94 1h2m115 0h2m-118 3h1m-8 1h1m-40 1h1m74 1h1m-7 4h2m-165 1h1m9 0h1m136 1h1m-115 4h1m679 1h2m-630 3h1m242 4h1m-328 6h1m79 2h2m218 19h1m-169 1h1m176 5h1m-244 11h1m363 21h1m-322 31h2" stroke="#4a5cf2" stroke-opacity="0.45" stroke-width="4" fill="none"/><path d="m822 131h2m37 10h1m-99 48h1m49 26h1m35 19h2m163 4h1m-167 8h2m-402 8h1m-13 5h2m23 0h1m-6 1h2m-59 2h2m89 4h1m64 3h1m-41 1h2m-224 2h1m53 1h2m106 1h2m38 2h1m-65 5h1m-82 8h1m264 44h1m-230 38h1" stroke="#4a5cf2" stroke-opacity="0.68" stroke-width="4" fill="none"/><path d="m1049 152h1m-231 12h2m117 0h1m-21 16h2m-223 32h2m-216 35h2m-108 6h1m-14 6h2m111 3h2m-127 4h2m17 6h1m108 1h1m-103 2h1m81 9h1m-121 4h1m141 36h1" stroke="#4a5cf2" stroke-opacity="0.9" stroke-width="4" fill="none"/><path d="m408 244.5h2m37 1h1m29 6h1m-132 3h1m45 2h1m114 6h2m-186 16h1m144 12h1m119 5h1m-233 2h1m25 13h1m-86 35h1m152 11h1m168 31h1" stroke="#4a5cf2" stroke-opacity="0.28" stroke-width="5" fill="none"/><path d="m885 178.5h2m138 14h2m-657 51h1m144 3h2m-6 1h1m-175 5h1m-3 1h1m48 3h1m-62 1h1m75 1h2m27 1h1m10 1h2m-22 8h1m192 0h1m-297 1h1m119 5h1m-63 4h1m165 2h1m-29 5h1m-55 7h1m23 13h1m-199 3h1m161 39h2" stroke="#4a5cf2" stroke-opacity="0.45" stroke-width="5" fill="none"/><path d="m728 143.5h1m65 6h2m-55 53h1m39 0h2m-81 17h2m-243 26h2m67 0h1m-81 1h1m77 1h2m-90 6h1m153 3h1m-274 1h1m66 5h1m24 2h1m126 7h1m-103 2h1m35 3h2m-51 3h1m-77 14h1m3 13h1m382 52h2" stroke="#4a5cf2" stroke-opacity="0.68" stroke-width="5" fill="none"/><path d="m693 212.5h2m-406 29h1m339 0h1m-265 2h1m126 7h2m227 5h2m-187 8h1m-138 11h1m52 7h1m-115 4h1m51 4h2m45 1h1m-132 9h1m299 21h1m8 6h1m-244 12h2" stroke="#4a5cf2" stroke-opacity="0.9" stroke-width="5" fill="none"/><path d="m390 257h1m177 14h1m17 24h2m-234 3h2" stroke="#4a5cf2" stroke-opacity="0.28" stroke-width="6" fill="none"/><path d="m289 251h1m54 4h1m116 3h1m-141 21h2m143 12h1m-87 19h1m17 22h2m-105 14h1m152 11h2m167 30h1" stroke="#4a5cf2" stroke-opacity="0.45" stroke-width="6" fill="none"/><path d="m445 245h1m-59 2h1m87 5h2m-146 5h1m94 3h1m52 0h1m-166 9h2m101 0h1m-46 10h1m137 7h2m-230 23h1" stroke="#4a5cf2" stroke-opacity="0.68" stroke-width="6" fill="none"/><path d="m436 252h1m-102 1h1m46 4h2m-17 3h1m150 0h1m-85 14h2m102 6h1m-8 10h1m-76 2h1" stroke="#4a5cf2" stroke-opacity="0.9" stroke-width="6" fill="none"/><path d="m554 134h2" stroke="#4a5cf2" stroke-opacity="0.28" stroke-width="8" fill="none"/><path d="m538 137.5h2" stroke="#4a5cf2" stroke-opacity="0.28" stroke-width="9" fill="none"/><path d="m279 137h2m26 2h2" stroke="#4a5cf2" stroke-opacity="0.28" stroke-width="10" fill="none"/><path d="m297 140h3" stroke="#4a5cf2" stroke-opacity="0.45" stroke-width="10" fill="none"/><path d="m426 134.5h2" stroke="#4a5cf2" stroke-opacity="0.45" stroke-width="11" fill="none"/><path d="m290 136h2" stroke="#4a5cf2" stroke-opacity="0.28" stroke-width="12" fill="none"/><path d="m351 139.5h3" stroke="#4a5cf2" stroke-opacity="0.45" stroke-width="13" fill="none"/><path d="m436 142.5h2" stroke="#4a5cf2" stroke-opacity="0.28" stroke-width="15" fill="none"/><path d="m376 138.5h2" stroke="#4a5cf2" stroke-opacity="0.45" stroke-width="15" fill="none"/><path d="m456 140h2" stroke="#4a5cf2" stroke-opacity="0.28" stroke-width="16" fill="none"/><path d="m360 385h1m16 0h1m1 0h1m13 0h1m10 0h1m6 0h2m0 0h2m1 0h1m4 0h1m16 0h1m6 0h2m1 0h1m5 0h2m4 0h1m2 0h2m2 0h1m5 0h2m9 0h2m3 0h2m8 0h1m1 0h1m7 0h1m1 0h1m7 0h1m5 0h1m9 0h1" stroke="#4a5cf2" stroke-opacity="0.12" stroke-width="18" fill="none"/><path d="m382 144h2" stroke="#4a5cf2" stroke-opacity="0.28" stroke-width="18" fill="none"/><path d="m369 140h2" stroke="#4a5cf2" stroke-opacity="0.45" stroke-width="18" fill="none"/><path d="m416 145.5h3" stroke="#4a5cf2" stroke-opacity="0.28" stroke-width="19" fill="none"/><path d="m485 143.5h3" stroke="#4a5cf2" stroke-opacity="0.45" stroke-width="19" fill="none"/><path d="m488 140.5h1" stroke="#4a5cf2" stroke-opacity="0.12" stroke-width="21" fill="none"/><path d="m530 141.5h3" stroke="#4a5cf2" stroke-opacity="0.28" stroke-width="21" fill="none"/><path d="m771 118h3m-3 0h1m-435 19h1m26 48h1" stroke="#4a5cf2" stroke-opacity="0.12" stroke-width="22" fill="none"/><path d="m492 245.5h1" stroke="#4a5cf2" stroke-opacity="0.12" stroke-width="23" fill="none"/><path d="m431 137h1m18 35h1m-68 46h1" stroke="#4a5cf2" stroke-opacity="0.12" stroke-width="24" fill="none"/><path d="m344 143h3m102 2h2" stroke="#4a5cf2" stroke-opacity="0.45" stroke-width="24" fill="none"/><path d="m734 120.5h3m-3 0h1m-207 102h1" stroke="#4a5cf2" stroke-opacity="0.12" stroke-width="27" fill="none"/><path d="m309 226h1" stroke="#4a5cf2" stroke-opacity="0.12" stroke-width="28" fill="none"/><path d="m582 123.5h1m-253 17h1m90 75h1" stroke="#4a5cf2" stroke-opacity="0.12" stroke-width="29" fill="none"/><path d="m325 131.5h1m88 7h1m-8 75h1" stroke="#4a5cf2" stroke-opacity="0.12" stroke-width="31" fill="none"/><path d="m503 190.5h1m14 46h1" stroke="#4a5cf2" stroke-opacity="0.12" stroke-width="33" fill="none"/><path d="m417 211.5h1m-60 48h1" stroke="#4a5cf2" stroke-opacity="0.12" stroke-width="35" fill="none"/><path d="m451 173h1m-27 92h1" stroke="#4a5cf2" stroke-opacity="0.12" stroke-width="36" fill="none"/><path d="m341 157.5h1m57 62h1" stroke="#4a5cf2" stroke-opacity="0.12" stroke-width="37" fill="none"/><path d="m579 147h1" stroke="#4a5cf2" stroke-opacity="0.12" stroke-width="38" fill="none"/><path d="m315 141.5h1m34 134h1" stroke="#4a5cf2" stroke-opacity="0.12" stroke-width="39" fill="none"/><path d="m295 133h1m73 18h1m-15 88h1" stroke="#4a5cf2" stroke-opacity="0.12" stroke-width="40" fill="none"/><path d="m328 204.5h1m50 3h1m30 36h1m-100 7h1m104 3h1" stroke="#4a5cf2" stroke-opacity="0.12" stroke-width="41" fill="none"/><path d="m625 165h1m-179 116h1" stroke="#4a5cf2" stroke-opacity="0.12" stroke-width="42" fill="none"/><path d="m527 169.5h1m-27 92h1" stroke="#4a5cf2" stroke-opacity="0.12" stroke-width="43" fill="none"/><path d="m422 202h1m196 26h1" stroke="#4a5cf2" stroke-opacity="0.12" stroke-width="44" fill="none"/><path d="m313 141.5h1" stroke="#4a5cf2" stroke-opacity="0.12" stroke-width="47" fill="none"/><path d="m293 196h1" stroke="#4a5cf2" stroke-opacity="0.12" stroke-width="48" fill="none"/><path d="m361 206.5h1m94 18h1" stroke="#4a5cf2" stroke-opacity="0.12" stroke-width="49" fill="none"/><path d="m353 134h1" stroke="#4a5cf2" stroke-opacity="0.12" stroke-width="50" fill="none"/><path d="m564 147.5h1" stroke="#4a5cf2" stroke-opacity="0.12" stroke-width="55" fill="none"/><path d="m279 271h1" stroke="#4a5cf2" stroke-opacity="0.12" stroke-width="56" fill="none"/><path d="m288 168.5h1m166 22h1" stroke="#4a5cf2" stroke-opacity="0.12" stroke-width="57" fill="none"/><path d="m312 216.5h1m146 16h1" stroke="#4a5cf2" stroke-opacity="0.12" stroke-width="59" fill="none"/><path d="m344 227h1m284 32h1" stroke="#4a5cf2" stroke-opacity="0.12" stroke-width="60" fill="none"/><path d="m530 158.5h1m-101 7h1" stroke="#4a5cf2" stroke-opacity="0.12" stroke-width="61" fill="none"/><path d="m380 202h1m-95 51h1" stroke="#4a5cf2" stroke-opacity="0.12" stroke-width="62" fill="none"/><path d="m670 143h1m-11 39h1m-302 97h1" stroke="#4a5cf2" stroke-opacity="0.12" stroke-width="64" fill="none"/><path d="m391 178h1m-108 70h1m309 15h1" stroke="#4a5cf2" stroke-opacity="0.12" stroke-width="66" fill="none"/><path d="m561 170h1" stroke="#4a5cf2" stroke-opacity="0.12" stroke-width="68" fill="none"/><path d="m418 276.5h1" stroke="#4a5cf2" stroke-opacity="0.12" stroke-width="69" fill="none"/><path d="m558 216h1m-65 6h1" stroke="#4a5cf2" stroke-opacity="0.12" stroke-width="70" fill="none"/><path d="m370 200.5h1" stroke="#4a5cf2" stroke-opacity="0.12" stroke-width="71" fill="none"/><path d="m368 159.5h1" stroke="#4a5cf2" stroke-opacity="0.12" stroke-width="73" fill="none"/><path d="m299 274h1" stroke="#4a5cf2" stroke-opacity="0.12" stroke-width="74" fill="none"/><path d="m377 200.5h1m-16 1h1m-21 56h1" stroke="#4a5cf2" stroke-opacity="0.12" stroke-width="77" fill="none"/><path d="m396 151h1m150 29h1m-163 45h1" stroke="#4a5cf2" stroke-opacity="0.12" stroke-width="78" fill="none"/><path d="m600 260.5h1" stroke="#4a5cf2" stroke-opacity="0.12" stroke-width="79" fill="none"/><path d="m423 221h1m138 30h1m-143 20h1" stroke="#4a5cf2" stroke-opacity="0.12" stroke-width="80" fill="none"/><path d="m577 191.5h1m-124 19h1" stroke="#4a5cf2" stroke-opacity="0.12" stroke-width="81" fill="none"/><path d="m546 298h1m67 0h1" stroke="#4a5cf2" stroke-opacity="0.12" stroke-width="82" fill="none"/><path d="m310 171.5h1m7 31h1" stroke="#4a5cf2" stroke-opacity="0.12" stroke-width="83" fill="none"/><path d="m505 161.5h1" stroke="#4a5cf2" stroke-opacity="0.12" stroke-width="85" fill="none"/><path d="m347 211.5h1m206 34h1" stroke="#4a5cf2" stroke-opacity="0.12" stroke-width="87" fill="none"/><path d="m512 251h1m-222 14h1" stroke="#4a5cf2" stroke-opacity="0.12" stroke-width="88" fill="none"/><path d="m349 254.5h1m52 20h1" stroke="#4a5cf2" stroke-opacity="0.12" stroke-width="89" fill="none"/><path d="m453 176h1" stroke="#4a5cf2" stroke-opacity="0.12" stroke-width="90" fill="none"/><path d="m631 179h1m-334 121h1" stroke="#4a5cf2" stroke-opacity="0.12" stroke-width="92" fill="none"/><path d="m495 155.5h1m-216 36h1" stroke="#4a5cf2" stroke-opacity="0.12" stroke-width="93" fill="none"/><path d="m406 263h1" stroke="#4a5cf2" stroke-opacity="0.12" stroke-width="94" fill="none"/><path d="m302 229.5h1m234 13h1m-17 16h1" stroke="#4a5cf2" stroke-opacity="0.12" stroke-width="95" fill="none"/><path d="m473 288h1" stroke="#4a5cf2" stroke-opacity="0.12" stroke-width="96" fill="none"/><path d="m308 261.5h1" stroke="#4a5cf2" stroke-opacity="0.12" stroke-width="97" fill="none"/><path d="m366 205h1" stroke="#4a5cf2" stroke-opacity="0.12" stroke-width="98" fill="none"/><path d="m508 227.5h1m44 29h1" stroke="#4a5cf2" stroke-opacity="0.12" stroke-width="99" fill="none"/><path d="m483 255.5h1" stroke="#4a5cf2" stroke-opacity="0.12" stroke-width="101" fill="none"/><path d="m434 232h1m-8 1h1m32 78h1" stroke="#4a5cf2" stroke-opacity="0.12" stroke-width="104" fill="none"/><path d="m654 195.5h1" stroke="#4a5cf2" stroke-opacity="0.12" stroke-width="105" fill="none"/><path d="m489 211.5h1" stroke="#4a5cf2" stroke-opacity="0.12" stroke-width="107" fill="none"/><path d="m676 302.5h1" stroke="#4a5cf2" stroke-opacity="0.12" stroke-width="109" fill="none"/></g></defs><use href="#dots" opacity="0.6"/><use href="#dots" filter="url(#sb)" opacity="0.6"/><g opacity="0.85"><path d="m708 156h12m1 0h11" stroke="#4a5cf2" stroke-opacity="0.28" stroke-width="2" fill="none"/><path d="m520 156h8m17 0h5m15 0h11m15 0h11m2 0h13m3 0h7m1 0h3" stroke="#4a5cf2" stroke-opacity="0.45" stroke-width="2" fill="none"/><path d="m531 156h12m8 0h4m1 0h7m15 0h11m44 0h13m0 0h6m2 0h4m3 0h3m3 0h7m2 0h5m1 0h7" stroke="#4a5cf2" stroke-opacity="0.68" stroke-width="2" fill="none"/><path d="m373 155h147" stroke="#4a5cf2" stroke-opacity="0.9" stroke-width="2" fill="none"/><path d="m623 131h3m21 0h3m18 0h3m-57 1h3" stroke="#4a5cf2" stroke-opacity="0.45" stroke-width="4" fill="none"/><path d="m479 126h3m89 1h3m8 0h3m-295 1h3m197 1h4m35 0h4m-255 1h3m110 0h4m61 0h3m171 0h3m4 1h4m-201 1h3m-27 2h4" stroke="#4a5cf2" stroke-opacity="0.68" stroke-width="4" fill="none"/><path d="m674 126h3m-252 1h3m125 1h3m-238 1h4m5 0h3m13 0h4m21 0h3m4 0h3m122 0h3m94 0h3m6 0h4m-249 1h4m-54 1h3m20 0h3m13 0h4m46 0h3m46 0h3m18 0h3m36 0h3m8 0h4m14 0h3m49 0h3m-309 1h4m18 0h3m175 0h4m56 0h4m13 0h3m-268 1h4m82 0h3m50 0h3m23 0h3m-56 1h3" stroke="#4a5cf2" stroke-opacity="0.9" stroke-width="4" fill="none"/><path d="m575 116.5h1m10 0h1" stroke="#4a5cf2" stroke-opacity="0.12" stroke-width="19" fill="none"/><path d="m557 116.5h1" stroke="#4a5cf2" stroke-opacity="0.28" stroke-width="19" fill="none"/><path d="m293 117h1" stroke="#4a5cf2" stroke-opacity="0.12" stroke-width="20" fill="none"/><path d="m323 117h1m276 0h1" stroke="#4a5cf2" stroke-opacity="0.28" stroke-width="20" fill="none"/><path d="m348 117.5h1m130 0h1m24 0h1m105 0h1m64 0h1" stroke="#4a5cf2" stroke-opacity="0.28" stroke-width="21" fill="none"/><path d="m479 117.5h2m194 0h2" stroke="#4a5cf2" stroke-opacity="0.45" stroke-width="21" fill="none"/><path d="m650 118h1" stroke="#4a5cf2" stroke-opacity="0.12" stroke-width="22" fill="none"/><path d="m315 118h1m110 0h1m127 0h1m17 0h1m10 0h2m-2 0h1" stroke="#4a5cf2" stroke-opacity="0.28" stroke-width="22" fill="none"/><path d="m426 118h2m126 0h2m16 0h2" stroke="#4a5cf2" stroke-opacity="0.45" stroke-width="22" fill="none"/><path d="m290 118.5h1m28 0h1m8 0h1m47 0h1m97 0h1m14 0h1m22 0h1m28 0h1m6 0h1m48 0h1" stroke="#4a5cf2" stroke-opacity="0.28" stroke-width="23" fill="none"/><path d="m290 118.5h2m27 0h3" stroke="#4a5cf2" stroke-opacity="0.45" stroke-width="23" fill="none"/><path d="m328 118.5h2m46 0h2m219 0h2" stroke="#4a5cf2" stroke-opacity="0.68" stroke-width="23" fill="none"/><path d="m444 119h1m173 0h1" stroke="#4a5cf2" stroke-opacity="0.12" stroke-width="24" fill="none"/><path d="m344 119h1m24 0h1m69 0h1m50 0h3m-3 0h1m10 0h1m28 0h1m75 0h1m24 0h1" stroke="#4a5cf2" stroke-opacity="0.28" stroke-width="24" fill="none"/><path d="m344 119h3m22 0h2m130 0h2m27 0h3m73 0h3m22 0h2" stroke="#4a5cf2" stroke-opacity="0.45" stroke-width="24" fill="none"/><path d="m420 119.5h1m203 0h1m22 0h1m21 0h1" stroke="#4a5cf2" stroke-opacity="0.12" stroke-width="25" fill="none"/><path d="m279 119.5h1m32 0h1m21 0h1m16 0h1m9 0h1m23 0h1m6 0h1m8 0h1m54 0h2m-2 0h1m7 0h1m55 0h1m70 0h1m32 0h2m21 0h2m20 0h2" stroke="#4a5cf2" stroke-opacity="0.28" stroke-width="25" fill="none"/><path d="m279 119.5h2m70 0h3m38 0h3m125 0h3m68 0h2" stroke="#4a5cf2" stroke-opacity="0.45" stroke-width="25" fill="none"/><path d="m312 119.5h2m20 0h2m25 0h3m37 0h2" stroke="#4a5cf2" stroke-opacity="0.68" stroke-width="25" fill="none"/><path d="m284 120h1m164 0h1m21 0h1m13 0h1m23 0h1m28 0h1m5 0h1m16 0h1m76 0h3m-3 0h1" stroke="#4a5cf2" stroke-opacity="0.28" stroke-width="26" fill="none"/><path d="m284 120h3m251 0h2m4 0h3m14 0h2" stroke="#4a5cf2" stroke-opacity="0.45" stroke-width="26" fill="none"/><path d="m449 120h2m20 0h2m12 0h3m21 0h2" stroke="#4a5cf2" stroke-opacity="0.68" stroke-width="26" fill="none"/><path d="m615 120.5h1" stroke="#4a5cf2" stroke-opacity="0.12" stroke-width="27" fill="none"/><path d="m307 120.5h1m128 0h1m4 0h1m173 0h2" stroke="#4a5cf2" stroke-opacity="0.28" stroke-width="27" fill="none"/><path d="m307 120.5h2m127 0h2m3 0h2" stroke="#4a5cf2" stroke-opacity="0.45" stroke-width="27" fill="none"/><path d="m297 121h1m84 0h1m25 0h1m7 0h1m44 0h1" stroke="#4a5cf2" stroke-opacity="0.28" stroke-width="28" fill="none"/><path d="m297 121h3m82 0h2m24 0h2m6 0h3m42 0h2" stroke="#4a5cf2" stroke-opacity="0.45" stroke-width="28" fill="none"/></g><rect x="277" y="232.5" width="986" height="4.4" fill="#5567f2" fill-opacity="0.42"/><rect x="319.2" y="157" width="1.8" height="237" fill="#5a6cf2" fill-opacity="0.75"/><rect x="330.8" y="107.5" width="1.9" height="286.5" fill="#5a6cf2" fill-opacity="0.7"/><rect x="330.6" y="107.5" width="2.3" height="102" fill="#4a5cf2" fill-opacity="0.5"/><rect x="351" y="107.5" width="2.2" height="97" fill="#4a5cf2" fill-opacity="0.8"/><rect x="582.5" y="107.5" width="1.6" height="89" fill="#4a5cf2" fill-opacity="0.75"/><rect x="678.3" y="107.5" width="4.3" height="286.5" fill="#c2b3ba"/></g><rect x="288.6" y="126" width="3.4" height="157.5" rx="1.5" fill="#b4b4bc" fill-opacity="0.8"/><rect x="288.6" y="294.4" width="3.4" height="82" rx="1.5" fill="#b4b4bc" fill-opacity="0.8"/><path d="M286.5,216.5 h4.5 l5,4.6 -5,4.8 h-4.5 a1.4,1.4 0 0 1 -1.4,-1.4 v-6.6 a1.4,1.4 0 0 1 1.4,-1.4z" fill="#fbfbfb" stroke="#c4c4c4" stroke-width="0.8"/><rect x="275.8" y="107.3" width="1.3" height="287.5" fill="#4a4a4a"/><rect x="275.8" y="393.6" width="987.2" height="1.3" fill="#4a4a4a"/><rect x="269.8" y="149.5" width="6.5" height="1.4" fill="#444"/><rect x="269.8" y="198.3" width="6.5" height="1.4" fill="#444"/><rect x="269.8" y="247.1" width="6.5" height="1.4" fill="#444"/><rect x="269.8" y="295.9" width="6.5" height="1.4" fill="#444"/><rect x="269.8" y="344.7" width="6.5" height="1.4" fill="#444"/><rect x="269.8" y="393.5" width="6.5" height="1.4" fill="#444"/><rect x="353.3" y="394" width="1.4" height="6" fill="#444"/><rect x="506.9" y="394" width="1.4" height="6" fill="#444"/><rect x="660.5" y="394" width="1.4" height="6" fill="#444"/><rect x="814.1" y="394" width="1.4" height="6" fill="#444"/><rect x="967.7" y="394" width="1.4" height="6" fill="#444"/><rect x="1121.3" y="394" width="1.4" height="6" fill="#444"/><polygon points="284,466.3 287,468 284,469.7" fill="#333"/><rect x="308.2" y="775" width="1.5" height="1.5" fill="#2445f4"/><rect x="316.5" y="754.5" width="2" height="22.0" fill="#2445f4"/><rect x="321.8" y="772.6" width="2.5" height="3.9" fill="#2445f4"/><rect x="327.4" y="733" width="2" height="43.5" fill="#2445f4"/><rect x="330.9" y="759.5" width="2.5" height="17.0" fill="#2445f4"/><rect x="333.2" y="774" width="1.5" height="2.5" fill="#2445f4"/><rect x="344.2" y="761.4" width="2" height="15.1" fill="#2445f4"/><rect x="347.8" y="775" width="2.5" height="1.5" fill="#2445f4"/><rect x="368.1" y="773" width="1.5" height="3.5" fill="#2445f4"/><rect x="371.6" y="770" width="2.5" height="6.5" fill="#2445f4"/><rect x="386.6" y="767.7" width="1.5" height="8.8" fill="#2445f4"/><rect x="390.6" y="766.6" width="2.5" height="9.9" fill="#2445f4"/><rect x="398.4" y="759.4" width="2" height="17.1" fill="#2445f4"/><rect x="410.8" y="773" width="1.5" height="3.5" fill="#2445f4"/><rect x="416.0" y="760.8" width="3" height="15.7" fill="#2445f4"/><rect x="424.2" y="774" width="1.5" height="2.5" fill="#2445f4"/><rect x="426.8" y="773.5" width="1.5" height="3.0" fill="#2445f4"/><rect x="432.6" y="774.5" width="1.5" height="2.0" fill="#2445f4"/><rect x="477.3" y="695.7" width="2.6" height="80.8" fill="#2445f4"/><rect x="503.8" y="771.7" width="2.5" height="4.8" fill="#2445f4"/><rect x="613.0" y="772.6" width="2" height="3.9" fill="#2445f4"/><rect x="666.2" y="738" width="2.4" height="38.5" fill="#2445f4"/><rect x="412.2" y="491" width="3.1" height="286" fill="#4f68f8"/><rect x="412.2" y="573.6" width="3.1" height="203" fill="#0b2cf2"/><rect x="477.3" y="741" width="2.6" height="36" fill="#0b2cf2"/><rect x="275.9" y="490.5" width="1.2" height="286.8" fill="#7c7c7c"/><rect x="275.9" y="776" width="437.5" height="1.2" fill="#7c7c7c"/><rect x="270" y="741.6" width="6.5" height="1.4" fill="#444"/><rect x="270" y="704.5" width="6.5" height="1.4" fill="#444"/><rect x="270" y="667.5" width="6.5" height="1.4" fill="#444"/><rect x="270" y="630.4" width="6.5" height="1.4" fill="#444"/><rect x="270" y="593.3" width="6.5" height="1.4" fill="#444"/><rect x="270" y="556.2" width="6.5" height="1.4" fill="#444"/><rect x="270" y="519.1" width="6.5" height="1.4" fill="#444"/><rect x="313.7" y="776.5" width="1.4" height="6" fill="#444"/><rect x="391.1" y="776.5" width="1.4" height="6" fill="#444"/><rect x="468.5" y="776.5" width="1.4" height="6" fill="#444"/><rect x="545.9" y="776.5" width="1.4" height="6" fill="#444"/><rect x="623.3" y="776.5" width="1.4" height="6" fill="#444"/><rect x="738.3" y="450.4" width="18.1" height="11.5" rx="0.8" fill="#4287e6"/><rect x="743.0" y="453.6" width="8.3" height="5.5" rx="1.2" fill="#ffffff"/><path d="M731.6,467.4 A6.4,6.4 0 0 0 720.6,472.0" stroke="#3d9ae8" stroke-width="2.4" fill="none"/><polygon points="717.2,471.2 723.8,471.2 720.8,475.4" fill="#3d9ae8"/><path d="M722.2,477.2 A6.4,6.4 0 0 0 732.4,472.6" stroke="#ee4a0c" stroke-width="2.4" fill="none"/><polygon points="728.8,473.2 735.8,473.2 732.6,468.8" fill="#ee4a0c"/><path d="M719.4,465.0 L733.4,479.0 M733.4,465.0 L719.4,479.0" stroke="#f9ad1c" stroke-width="1.6" stroke-linecap="round"/><path d="M752.6,467.4 A6.4,6.4 0 0 0 741.6,472.0" stroke="#3d9ae8" stroke-width="2.4" fill="none"/><polygon points="738.2,471.2 744.8,471.2 741.8,475.4" fill="#3d9ae8"/><path d="M743.2,477.2 A6.4,6.4 0 0 0 753.4,472.6" stroke="#ee4a0c" stroke-width="2.4" fill="none"/><polygon points="749.8,473.2 756.8,473.2 753.6,468.8" fill="#ee4a0c"/><polygon points="834,466.3 837,468 834,469.7" fill="#333"/><rect x="1037.4" y="491" width="4.8" height="285.5" fill="#9aa5dd"/><polyline points="826.5,775.6 860,775.6 887,775.2 892,774.5 900,775.2 940,775.4 950,774.4 962,774.6 975,775.3 994.9,775.4 1003.6,729.8 1010,660 1017.8,546 1024.4,505.3 1031.5,501.5 1039.4,491 1046,509.9 1051,552.3 1056.5,618.8 1064.8,672.9 1074.3,737.3 1083.5,765.6 1091.8,773.5 1108.4,774.3 1120,774.1 1140,775 1170,775.5 1230,775.6 1263,775.2" fill="none" stroke="#5c2233" stroke-width="1.3" stroke-linejoin="round"/><rect x="826" y="490.5" width="1.3" height="286.8" fill="#5a5a5a"/><rect x="826" y="776" width="437" height="1.3" fill="#5a5a5a"/><rect x="820" y="775.6" width="6.5" height="1.4" fill="#444"/><rect x="820" y="735.7" width="6.5" height="1.4" fill="#444"/><rect x="820" y="695.8" width="6.5" height="1.4" fill="#444"/><rect x="820" y="655.9" width="6.5" height="1.4" fill="#444"/><rect x="820" y="616.0" width="6.5" height="1.4" fill="#444"/><rect x="820" y="576.1" width="6.5" height="1.4" fill="#444"/><rect x="820" y="536.2" width="6.5" height="1.4" fill="#444"/><rect x="856.2" y="776.5" width="1.4" height="6" fill="#444"/><rect x="904.8" y="776.5" width="1.4" height="6" fill="#444"/><rect x="953.4" y="776.5" width="1.4" height="6" fill="#444"/><rect x="1002.0" y="776.5" width="1.4" height="6" fill="#444"/><rect x="1050.6" y="776.5" width="1.4" height="6" fill="#444"/><rect x="1099.2" y="776.5" width="1.4" height="6" fill="#444"/><rect x="1147.8" y="776.5" width="1.4" height="6" fill="#444"/><rect x="1196.4" y="776.5" width="1.4" height="6" fill="#444"/><rect x="1245.0" y="776.5" width="1.4" height="6" fill="#444"/><rect x="1288.5" y="450.4" width="18.1" height="11.5" rx="0.8" fill="#4287e6"/><rect x="1293.2" y="453.6" width="8.3" height="5.5" rx="1.2" fill="#e9e9fd"/><path d="M1281.8,467.4 A6.4,6.4 0 0 0 1270.8,472.0" stroke="#3d9ae8" stroke-width="2.4" fill="none"/><polygon points="1267.4,471.2 1274.0,471.2 1271.0,475.4" fill="#3d9ae8"/><path d="M1272.4,477.2 A6.4,6.4 0 0 0 1282.6,472.6" stroke="#ee4a0c" stroke-width="2.4" fill="none"/><polygon points="1279.0,473.2 1286.0,473.2 1282.8,468.8" fill="#ee4a0c"/><path d="M1269.6,465.0 L1283.6,479.0 M1283.6,465.0 L1269.6,479.0" stroke="#f9ad1c" stroke-width="1.6" stroke-linecap="round"/><path d="M1302.8,467.4 A6.4,6.4 0 0 0 1291.8,472.0" stroke="#3d9ae8" stroke-width="2.4" fill="none"/><polygon points="1288.4,471.2 1295.0,471.2 1292.0,475.4" fill="#3d9ae8"/><path d="M1293.4,477.2 A6.4,6.4 0 0 0 1303.6,472.6" stroke="#ee4a0c" stroke-width="2.4" fill="none"/><polygon points="1300.0,473.2 1307.0,473.2 1303.8,468.8" fill="#ee4a0c"/><rect x="212" y="835.2" width="1097" height="3.6" rx="1.8" fill="#bdbdbd"/><circle cx="217" cy="836.8" r="5.4" fill="#fff" stroke="#c2c2c2" stroke-width="0.9"/><rect x="93.6" y="845" width="1.8" height="22" fill="#c9c9c9"/><rect x="122" y="845" width="1.8" height="22" fill="#c9c9c9"/><rect x="201" y="845" width="1.8" height="22" fill="#c9c9c9"/><rect x="77.6" y="856" width="5" height="1.2" fill="#333"/><rect x="79.5" y="853.6" width="1.2" height="6" fill="#333"/><rect x="106.6" y="855.6" width="4.3" height="1.2" fill="#555"/><rect x="135" y="849.3" width="16.6" height="1.5" fill="#3c3c3c"/><rect x="135" y="852.9" width="16.6" height="1.5" fill="#3c3c3c"/><rect x="135" y="856.4" width="16.6" height="1.5" fill="#3c3c3c"/><rect x="135" y="860.1" width="16.6" height="1.5" fill="#3c3c3c"/><rect x="176.4" y="850.3" width="4.2" height="3.7" rx="0.8" fill="#f4f4f4" stroke="#bdbdbd" stroke-width="0.5"/><rect x="176.4" y="857.3" width="4.2" height="3.7" rx="0.8" fill="#f4f4f4" stroke="#bdbdbd" stroke-width="0.5"/><rect x="183.8" y="850.3" width="4.2" height="3.7" rx="0.8" fill="#f4f4f4" stroke="#bdbdbd" stroke-width="0.5"/><rect x="183.8" y="857.3" width="4.2" height="3.7" rx="0.8" fill="#f4f4f4" stroke="#bdbdbd" stroke-width="0.5"/><path d="M101,304.5 q0,-1.2 1.2,-1.2 h6.5 l1.3,1.4 h9 q1,0 1,1 v10.6 q0,1.2 -1.2,1.2 h-16.6 q-1.2,0 -1.2,-1.2 z" fill="#6f6f6f"/><rect x="101.9" y="305.5" width="17.2" height="2.2" fill="#e2e2e2"/><rect x="101.9" y="307.7" width="17.2" height="8" fill="#9d9d9d"/><path d="M101,337.5 q0,-1.2 1.2,-1.2 h6.5 l1.3,1.4 h9 q1,0 1,1 v10.6 q0,1.2 -1.2,1.2 h-16.6 q-1.2,0 -1.2,-1.2 z" fill="#6f6f6f"/><rect x="101.9" y="338.5" width="17.2" height="2.2" fill="#e2e2e2"/><rect x="101.9" y="340.7" width="17.2" height="8" fill="#7c7c7c"/><path d="M101,370.5 q0,-1.2 1.2,-1.2 h6.5 l1.3,1.4 h9 q1,0 1,1 v10.6 q0,1.2 -1.2,1.2 h-16.6 q-1.2,0 -1.2,-1.2 z" fill="#6f6f6f"/><rect x="101.9" y="371.5" width="17.2" height="2.2" fill="#e2e2e2"/><rect x="101.9" y="373.7" width="17.2" height="8" fill="#9d9d9d"/></svg>
<div class="t" style="left:388.6px;width:600px;text-align:center;top:44.6px;font-size:16px;color:#444444;">Arcadiate Viewer</div>
<div class="t" style="left:86.8px;top:76.1px;font-size:12.7px;color:#50505c;font-weight:bold;">LIBRARY</div>
<div class="t" style="left:86.4px;top:274.0px;font-size:13px;color:#50505c;font-weight:bold;">COLLECTIONS</div>
<div class="t" style="left:134.6px;top:105.8px;font-size:13.8px;color:#222222;width:74.4px;overflow:hidden">Spectra</div>
<div class="t" style="left:134.6px;top:138.8px;font-size:13.8px;color:#222222;width:74.4px;overflow:hidden">Chromatog..</div>
<div class="t" style="left:134.6px;top:171.8px;font-size:13.8px;color:#222222;width:74.4px;overflow:hidden">Database S..</div>
<div class="t" style="left:134.6px;top:204.8px;font-size:13.8px;color:#222222;width:74.4px;overflow:hidden">Ion Groups</div>
<div class="t" style="left:134.6px;top:237.8px;font-size:13.8px;color:#222222;width:74.4px;overflow:hidden">Object Store</div>
<div class="t" style="left:291.0px;top:78.3px;font-size:10.6px;color:#2a2a2a;">161216kw_Cinzia_Pmix_DDA_5</div>
<div class="t" style="left:279.3px;top:112.8px;font-size:10.5px;color:#5c5c5c;">1.4e9</div>
<div class="t" style="left:-7.0px;width:600px;text-align:center;top:379.3px;font-size:10.5px;color:#707070;">0</div>
<div class="t" style="left:-35.4px;width:300px;text-align:right;top:143.3px;font-size:13.8px;color:#1f1f1f;">40</div>
<div class="t" style="left:-35.4px;width:300px;text-align:right;top:192.1px;font-size:13.8px;color:#1f1f1f;">32</div>
<div class="t" style="left:-35.4px;width:300px;text-align:right;top:240.9px;font-size:13.8px;color:#1f1f1f;">24</div>
<div class="t" style="left:-35.4px;width:300px;text-align:right;top:289.7px;font-size:13.8px;color:#1f1f1f;">16</div>
<div class="t" style="left:-35.4px;width:300px;text-align:right;top:338.5px;font-size:13.8px;color:#1f1f1f;">8</div>
<div class="t" style="left:-35.4px;width:300px;text-align:right;top:387.3px;font-size:13.8px;color:#1f1f1f;">0</div>
<div class="t" style="left:50.8px;width:600px;text-align:center;top:406.0px;font-size:13.4px;color:#1f1f1f;letter-spacing:0.3px;">400</div>
<div class="t" style="left:206.1px;width:600px;text-align:center;top:406.0px;font-size:13.4px;color:#1f1f1f;letter-spacing:0.3px;">600</div>
<div class="t" style="left:360.2px;width:600px;text-align:center;top:406.0px;font-size:13.4px;color:#1f1f1f;letter-spacing:0.3px;">800</div>
<div class="t" style="left:514.5px;width:600px;text-align:center;top:406.0px;font-size:13.4px;color:#1f1f1f;letter-spacing:0.3px;">1&#8201;000</div>
<div class="t" style="left:668.1px;width:600px;text-align:center;top:406.0px;font-size:13.4px;color:#1f1f1f;letter-spacing:0.3px;">1&#8201;200</div>
<div class="t" style="left:821.7px;width:600px;text-align:center;top:406.0px;font-size:13.4px;color:#1f1f1f;letter-spacing:0.3px;">1&#8201;400</div>
<div class="t" style="left:469.0px;width:600px;text-align:center;top:426.4px;font-size:13px;color:#1f1f1f;letter-spacing:0.33px;">Mass to Charge m/z</div>
<div class="t" style="left:194.5px;top:239.8px;width:60px;font-size:13px;height:13px;text-align:center;transform:rotate(-90deg);color:#1f1f1f;letter-spacing:0.4px">Time [min]</div>
<div class="t" style="left:246.6px;top:469.4px;font-size:12.4px;color:#222;">x 10</div>
<div class="t" style="left:271.4px;top:461.4px;font-size:8px;color:#222;font-weight:bold;">6</div>
<div class="t" style="left:291.2px;top:461.7px;font-size:10.6px;color:#2a2a2a;letter-spacing:0.33px;">Spectrum (+) Time [min]: 26.15 (161216kw_Cinzia_Pmix_DDA_5)</div>
<div class="t" style="left:-35.7px;width:300px;text-align:right;top:735.7px;font-size:13.4px;color:#1f1f1f;">10</div>
<div class="t" style="left:-35.7px;width:300px;text-align:right;top:698.6px;font-size:13.4px;color:#1f1f1f;">20</div>
<div class="t" style="left:-35.7px;width:300px;text-align:right;top:661.5px;font-size:13.4px;color:#1f1f1f;">30</div>
<div class="t" style="left:-35.7px;width:300px;text-align:right;top:624.4px;font-size:13.4px;color:#1f1f1f;">40</div>
<div class="t" style="left:-35.7px;width:300px;text-align:right;top:587.4px;font-size:13.4px;color:#1f1f1f;">50</div>
<div class="t" style="left:-35.7px;width:300px;text-align:right;top:550.3px;font-size:13.4px;color:#1f1f1f;">60</div>
<div class="t" style="left:-35.7px;width:300px;text-align:right;top:513.2px;font-size:13.4px;color:#1f1f1f;">70</div>
<div class="t" style="left:12.2px;width:600px;text-align:center;top:787.8px;font-size:13.4px;color:#1f1f1f;letter-spacing:0.35px;">400</div>
<div class="t" style="left:89.6px;width:600px;text-align:center;top:787.8px;font-size:13.4px;color:#1f1f1f;letter-spacing:0.35px;">600</div>
<div class="t" style="left:167.0px;width:600px;text-align:center;top:787.8px;font-size:13.4px;color:#1f1f1f;letter-spacing:0.35px;">800</div>
<div class="t" style="left:246.1px;width:600px;text-align:center;top:787.8px;font-size:13.4px;color:#1f1f1f;letter-spacing:0.35px;">1&#8201;000</div>
<div class="t" style="left:323.5px;width:600px;text-align:center;top:787.8px;font-size:13.4px;color:#1f1f1f;letter-spacing:0.35px;">1&#8201;200</div>
<div class="t" style="left:193.6px;width:600px;text-align:center;top:808.8px;font-size:13px;color:#1f1f1f;letter-spacing:0.33px;">Mass to Charge m/z</div>
<div class="t" style="left:175.3px;top:620.8px;width:100px;font-size:13px;height:13px;text-align:center;transform:rotate(-90deg);color:#1f1f1f;letter-spacing:0.6px">Intensity [ions/s]</div>
<div class="t" style="left:796.6px;top:469.4px;font-size:12.4px;color:#222;">x 10</div>
<div class="t" style="left:821.4px;top:461.4px;font-size:8px;color:#222;font-weight:bold;">6</div>
<div class="t" style="left:841.0px;top:461.7px;font-size:10.6px;color:#2a2a2a;letter-spacing:0.41px;">Extr. Chrom. - m/z: 824.8423 - 824.8694 (161216kw_Cinzia_Pmix_DDA_5)</div>
<div class="t" style="left:514.6px;width:300px;text-align:right;top:769.7px;font-size:13.4px;color:#1f1f1f;">0</div>
<div class="t" style="left:514.6px;width:300px;text-align:right;top:729.8px;font-size:13.4px;color:#1f1f1f;">10</div>
<div class="t" style="left:514.6px;width:300px;text-align:right;top:689.9px;font-size:13.4px;color:#1f1f1f;">20</div>
<div class="t" style="left:514.6px;width:300px;text-align:right;top:650.0px;font-size:13.4px;color:#1f1f1f;">30</div>
<div class="t" style="left:514.6px;width:300px;text-align:right;top:610.1px;font-size:13.4px;color:#1f1f1f;">40</div>
<div class="t" style="left:514.6px;width:300px;text-align:right;top:570.2px;font-size:13.4px;color:#1f1f1f;">50</div>
<div class="t" style="left:514.6px;width:300px;text-align:right;top:530.3px;font-size:13.4px;color:#1f1f1f;">60</div>
<div class="t" style="left:554.7px;width:600px;text-align:center;top:787.8px;font-size:13.4px;color:#1f1f1f;letter-spacing:0.35px;">25.4</div>
<div class="t" style="left:603.3px;width:600px;text-align:center;top:787.8px;font-size:13.4px;color:#1f1f1f;letter-spacing:0.35px;">25.6</div>
<div class="t" style="left:651.9px;width:600px;text-align:center;top:787.8px;font-size:13.4px;color:#1f1f1f;letter-spacing:0.35px;">25.8</div>
<div class="t" style="left:700.5px;width:600px;text-align:center;top:787.8px;font-size:13.4px;color:#1f1f1f;letter-spacing:0.35px;">26</div>
<div class="t" style="left:749.1px;width:600px;text-align:center;top:787.8px;font-size:13.4px;color:#1f1f1f;letter-spacing:0.35px;">26.2</div>
<div class="t" style="left:797.7px;width:600px;text-align:center;top:787.8px;font-size:13.4px;color:#1f1f1f;letter-spacing:0.35px;">26.4</div>
<div class="t" style="left:846.3px;width:600px;text-align:center;top:787.8px;font-size:13.4px;color:#1f1f1f;letter-spacing:0.35px;">26.6</div>
<div class="t" style="left:894.9px;width:600px;text-align:center;top:787.8px;font-size:13.4px;color:#1f1f1f;letter-spacing:0.35px;">26.8</div>
<div class="t" style="left:943.5px;width:600px;text-align:center;top:787.8px;font-size:13.4px;color:#1f1f1f;letter-spacing:0.35px;">27</div>
<div class="t" style="left:743.0px;width:600px;text-align:center;top:808.8px;font-size:13px;color:#1f1f1f;letter-spacing:0.4px;">Time [min]</div>
<div class="t" style="left:724.3px;top:620.8px;width:100px;font-size:13px;height:13px;text-align:center;transform:rotate(-90deg);color:#1f1f1f;letter-spacing:0.6px">Intensity [ions/s]</div>
<div class="t" style="left:127.1px;top:305.2px;font-size:13.8px;color:#262626;width:81.9px;overflow:hidden">Arcadiate M...</div>
<div class="t" style="left:127.1px;top:338.2px;font-size:13.8px;color:#1c1c1c;font-weight:bold;width:81.9px;overflow:hidden">Cinzia - Prot..</div>
<div class="t" style="left:127.1px;top:371.2px;font-size:13.8px;color:#262626;width:81.9px;overflow:hidden">Test</div>
</body></html>
